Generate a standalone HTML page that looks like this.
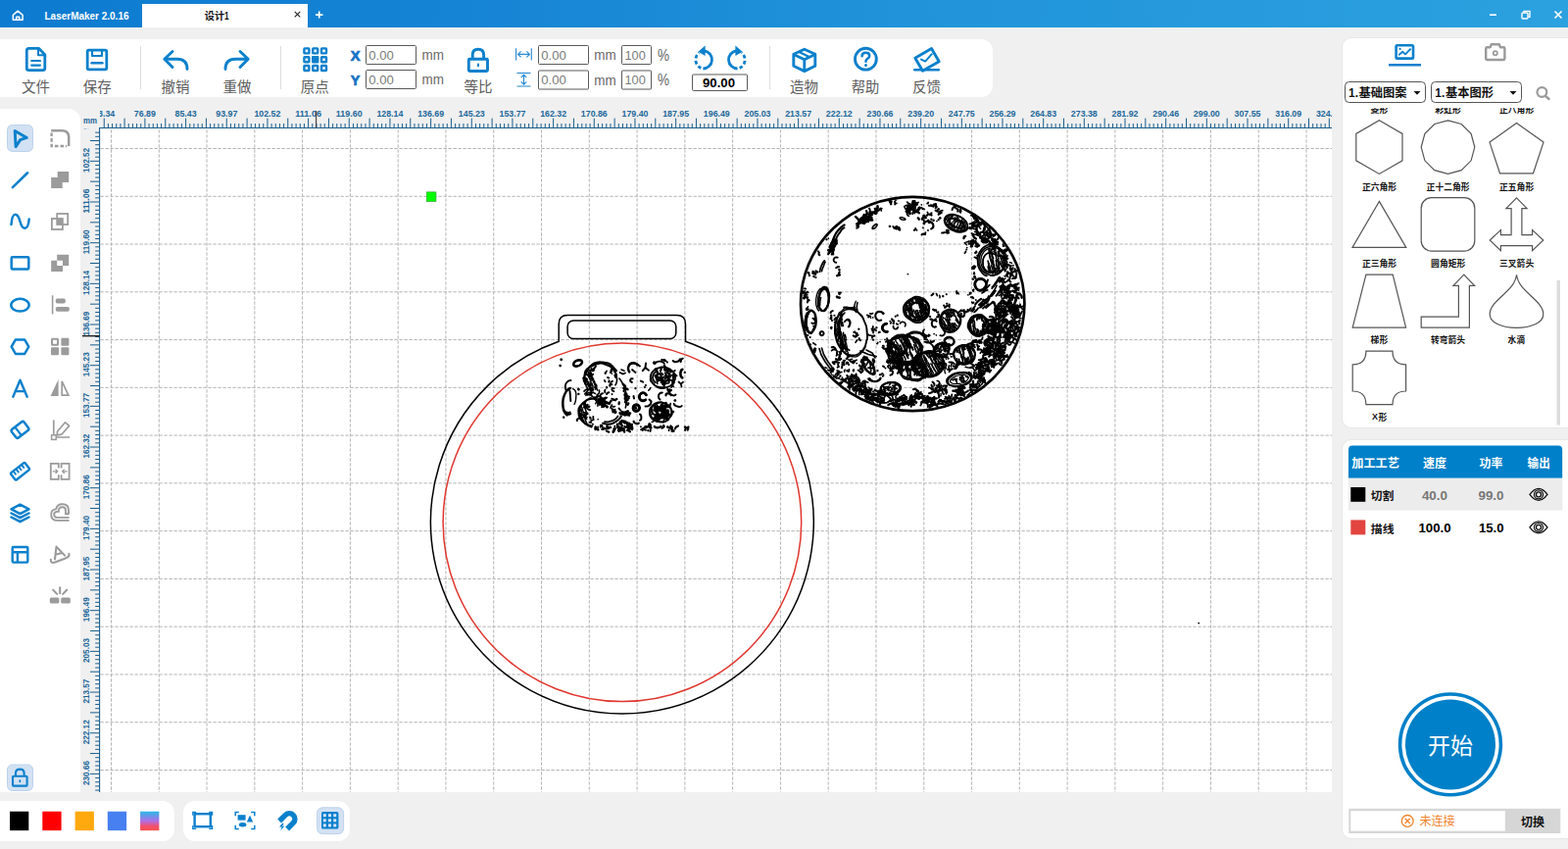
<!DOCTYPE html>
<html lang="zh"><head><meta charset="utf-8"><title>LaserMaker 2.0.16</title>
<style>
html,body{margin:0;padding:0}
body{width:1600px;height:866px;background:#f0f0f0;position:relative;overflow:hidden;font-family:"Liberation Sans","Noto Sans CJK SC",sans-serif}
body>div{position:absolute;box-sizing:border-box}
svg#ov{position:absolute;left:0;top:0}
svg text{font-family:"Liberation Sans","Noto Sans CJK SC",sans-serif}
</style></head><body>
<div style="left:0;top:0;width:1600px;height:28px;background:linear-gradient(90deg,#0c7bd0 0%,#1684d4 30%,#2194da 60%,#2ca1df 100%)"></div>
<div style="left:145px;top:4px;width:169px;height:24px;background:#fff"></div>
<div style="left:0;top:40px;width:1013px;height:59px;background:#fff;border-radius:0 12px 12px 0"></div>
<div style="left:0;top:111px;width:82px;height:697px;background:#fff;border-radius:0 12px 0 0"></div>
<div style="left:101px;top:130px;width:1258px;height:678px;background:#fff"></div>
<div style="left:0;top:817px;width:178px;height:41px;background:#fff;border-radius:0 12px 12px 0"></div>
<div style="left:187px;top:817px;width:170px;height:41px;background:#fff;border-radius:12px"></div>
<div style="left:1369px;top:38px;width:232px;height:399px;background:#fff;border-radius:10px 0 0 10px;border:1px solid #e7e7e7"></div>
<div style="left:1369px;top:448px;width:232px;height:408px;background:#fff;border-radius:10px 0 0 10px;border:1px solid #e7e7e7"></div>
<svg id="ov" width="1600" height="866" viewBox="0 0 1600 866">
<g fill="none" stroke="#fff" stroke-width="1.5" stroke-linejoin="round" stroke-linecap="round"><path d="M13.3 15.3 L18.2 11.2 L23.1 15.3 V20.2 H13.3 Z"/><path d="M16.7 20 V17.2 H19.7 V20"/></g>
<text x="45.5" y="20" font-size="10.2" fill="#fff" font-weight="bold" text-anchor="start"  textLength="86" lengthAdjust="spacingAndGlyphs">LaserMaker 2.0.16</text>
<text x="208.8" y="20.2" font-size="10.2" fill="#111" font-weight="bold" text-anchor="start" textLength="20.4" lengthAdjust="spacingAndGlyphs">设计</text>
<text x="229.0" y="20.2" font-size="10" fill="#111" font-weight="bold" text-anchor="start"  textLength="4.6" lengthAdjust="spacingAndGlyphs">1</text>
<path d="M300.7 11.8 L306.3 17.4 M306.3 11.8 L300.7 17.4" stroke="#222" stroke-width="1.1" fill="none"/>
<path d="M322 15.1 H329.4 M325.7 11.6 V18.6" stroke="#fff" stroke-width="1.7" fill="none"/>
<path d="M1520 15.2 H1527" stroke="#fff" stroke-width="1.6"/>
<g fill="none" stroke="#fff" stroke-width="1.4"><rect x="1553" y="13" width="6" height="6" rx="1"/><path d="M1555 12.8 V11.4 H1561 V17.4 H1559.4"/></g>
<path d="M1586.5 11.5 L1593.5 18.5 M1593.5 11.5 L1586.5 18.5" stroke="#fff" stroke-width="1.6" fill="none"/>
<path d="M143.5 47 V91" stroke="#dcdcdc" stroke-width="1"/>
<path d="M286.5 47 V91" stroke="#dcdcdc" stroke-width="1"/>
<path d="M785.5 47 V91" stroke="#dcdcdc" stroke-width="1"/>
<text x="36.5" y="94" font-size="14.5" fill="#5c5c5c" text-anchor="middle" textLength="29" lengthAdjust="spacingAndGlyphs">文件</text>
<text x="99.2" y="94" font-size="14.5" fill="#5c5c5c" text-anchor="middle" textLength="29" lengthAdjust="spacingAndGlyphs">保存</text>
<text x="178.9" y="94" font-size="14.5" fill="#5c5c5c" text-anchor="middle" textLength="29" lengthAdjust="spacingAndGlyphs">撤销</text>
<text x="242" y="94" font-size="14.5" fill="#5c5c5c" text-anchor="middle" textLength="29" lengthAdjust="spacingAndGlyphs">重做</text>
<text x="321.2" y="94" font-size="14.5" fill="#5c5c5c" text-anchor="middle" textLength="29" lengthAdjust="spacingAndGlyphs">原点</text>
<text x="488" y="94" font-size="14.5" fill="#5c5c5c" text-anchor="middle" textLength="29" lengthAdjust="spacingAndGlyphs">等比</text>
<text x="820.5" y="94" font-size="14.5" fill="#5c5c5c" text-anchor="middle" textLength="29" lengthAdjust="spacingAndGlyphs">造物</text>
<text x="883" y="94" font-size="14.5" fill="#5c5c5c" text-anchor="middle" textLength="28.5" lengthAdjust="spacingAndGlyphs">帮助</text>
<text x="945.6" y="94" font-size="14.5" fill="#5c5c5c" text-anchor="middle" textLength="29" lengthAdjust="spacingAndGlyphs">反馈</text>
<g fill="none" stroke="#0b80cc" stroke-width="2.8" stroke-linejoin="round" stroke-linecap="round"><path d="M27.3 51.5 Q27.3 49.3 29.5 49.3 H39.5 L45.8 55.8 V69.5 Q45.8 71.7 43.6 71.7 H29.5 Q27.3 71.7 27.3 69.5 Z"/><path d="M39 49.6 V56.3 H45.5" stroke-width="2"/><path d="M32.2 62 H41 M32.2 66.6 H41" stroke-width="2.2"/></g>
<g fill="none" stroke="#0b80cc" stroke-width="2.8" stroke-linejoin="round" stroke-linecap="round"><rect x="89.2" y="51.2" width="19.6" height="19.6" rx="1.5"/><path d="M94 51.5 V57 H104 V51.5" stroke-width="2.2"/><path d="M93.5 64.3 H104.5" stroke-width="2.4"/></g>
<g fill="none" stroke="#0b80cc" stroke-width="2.9" stroke-linejoin="round" stroke-linecap="round"><path d="M176 52.5 L167.8 60.3 L176 68.5"/><path d="M168.5 60.3 H181 Q191 60.3 191 70.5"/></g>
<g fill="none" stroke="#0b80cc" stroke-width="2.9" stroke-linejoin="round" stroke-linecap="round"><path d="M245 52.5 L253.2 60.3 L245 68.5"/><path d="M252.5 60.3 H240 Q230 60.3 230 70.5"/></g>
<rect x="310.4" y="49.4" width="5.0" height="5.0" rx="0.5" fill="none" stroke="#0b80cc" stroke-width="2.4"/><rect x="319.2" y="49.4" width="5.0" height="5.0" rx="0.5" fill="none" stroke="#0b80cc" stroke-width="2.4"/><rect x="328.0" y="49.4" width="5.0" height="5.0" rx="0.5" fill="none" stroke="#0b80cc" stroke-width="2.4"/><rect x="310.4" y="58.2" width="5.0" height="5.0" rx="0.5" fill="none" stroke="#0b80cc" stroke-width="2.4"/><rect x="318.0" y="57.0" width="7.4" height="7.4" rx="0.8" fill="#0b80cc"/><rect x="328.0" y="58.2" width="5.0" height="5.0" rx="0.5" fill="none" stroke="#0b80cc" stroke-width="2.4"/><rect x="310.4" y="67.0" width="5.0" height="5.0" rx="0.5" fill="none" stroke="#0b80cc" stroke-width="2.4"/><rect x="319.2" y="67.0" width="5.0" height="5.0" rx="0.5" fill="none" stroke="#0b80cc" stroke-width="2.4"/><rect x="328.0" y="67.0" width="5.0" height="5.0" rx="0.5" fill="none" stroke="#0b80cc" stroke-width="2.4"/>
<text x="357.8" y="61.7" font-size="14.3" fill="#1673c5" font-weight="bold" text-anchor="start" stroke="#1673c5" stroke-width="0.7" textLength="9.8" lengthAdjust="spacingAndGlyphs">X</text>
<text x="357.8" y="86.7" font-size="14.3" fill="#1673c5" font-weight="bold" text-anchor="start" stroke="#1673c5" stroke-width="0.7" textLength="9.6" lengthAdjust="spacingAndGlyphs">Y</text>
<rect x="373.5" y="46.5" width="51" height="19" rx="1" fill="#fff" stroke="#5a5a5a" stroke-width="1"/>
<text x="376.3" y="60.7" font-size="13" fill="#7a7a7a" font-weight="normal" text-anchor="start"  textLength="25.5" lengthAdjust="spacingAndGlyphs">0.00</text>
<rect x="373.5" y="71.5" width="51" height="19" rx="1" fill="#fff" stroke="#5a5a5a" stroke-width="1"/>
<text x="376.3" y="85.7" font-size="13" fill="#7a7a7a" font-weight="normal" text-anchor="start"  textLength="25.5" lengthAdjust="spacingAndGlyphs">0.00</text>
<text x="430.6" y="61" font-size="14" fill="#666" font-weight="normal" text-anchor="start"  textLength="22.4" lengthAdjust="spacingAndGlyphs">mm</text>
<text x="430.6" y="86" font-size="14" fill="#666" font-weight="normal" text-anchor="start"  textLength="22.4" lengthAdjust="spacingAndGlyphs">mm</text>
<g fill="none" stroke="#0b80cc" stroke-width="2.9" stroke-linejoin="round"><rect x="478.3" y="60.2" width="19.2" height="12.3" rx="1"/><path d="M482.2 60 V56 Q482.2 50.2 487.9 50.2 Q493.6 50.2 493.6 56 V60"/></g><rect x="486.9" y="64.6" width="2.1" height="3.6" rx="1" fill="#0b80cc"/>
<g fill="none" stroke="#2488d4" stroke-width="1.1"><path d="M526.6 49.2 V61.6 M542.3 49.2 V61.6 M528.6 55.4 H540.4 M531.6 52.4 L528.6 55.4 L531.6 58.4 M537.4 52.4 L540.4 55.4 L537.4 58.4"/><path d="M527.5 74.5 H541.5 M527.5 88 H541.5 M534.5 76.3 V86.2 M531.7 79.2 L534.5 76.3 L537.3 79.2 M531.7 83.3 L534.5 86.2 L537.3 83.3"/></g>
<rect x="549.5" y="46.5" width="51" height="19" rx="1" fill="#fff" stroke="#5a5a5a" stroke-width="1"/>
<text x="552.3" y="60.7" font-size="13" fill="#7a7a7a" font-weight="normal" text-anchor="start"  textLength="25.5" lengthAdjust="spacingAndGlyphs">0.00</text>
<rect x="549.5" y="72.0" width="51" height="19" rx="1" fill="#fff" stroke="#5a5a5a" stroke-width="1"/>
<text x="552.3" y="86.2" font-size="13" fill="#7a7a7a" font-weight="normal" text-anchor="start"  textLength="25.5" lengthAdjust="spacingAndGlyphs">0.00</text>
<text x="606.3" y="61" font-size="14" fill="#666" font-weight="normal" text-anchor="start"  textLength="22.4" lengthAdjust="spacingAndGlyphs">mm</text>
<text x="606.3" y="86.5" font-size="14" fill="#666" font-weight="normal" text-anchor="start"  textLength="22.4" lengthAdjust="spacingAndGlyphs">mm</text>
<rect x="634.5" y="46.5" width="30" height="19" rx="1" fill="#fff" stroke="#5a5a5a" stroke-width="1"/>
<text x="637.5" y="60.7" font-size="13" fill="#7a7a7a" font-weight="normal" text-anchor="start"  textLength="21.3" lengthAdjust="spacingAndGlyphs">100</text>
<rect x="634.5" y="72.0" width="30" height="19" rx="1" fill="#fff" stroke="#5a5a5a" stroke-width="1"/>
<text x="637.5" y="86.2" font-size="13" fill="#7a7a7a" font-weight="normal" text-anchor="start"  textLength="21.3" lengthAdjust="spacingAndGlyphs">100</text>
<text x="671" y="61.7" font-size="16.5" fill="#666" font-weight="normal" text-anchor="start"  textLength="12" lengthAdjust="spacingAndGlyphs">%</text>
<text x="671" y="87.2" font-size="16.5" fill="#666" font-weight="normal" text-anchor="start"  textLength="12" lengthAdjust="spacingAndGlyphs">%</text>
<path d="M718.7 51.9 A9.1 9.1 0 0 1 717.4 70.0" fill="none" stroke="#0b80cc" stroke-width="2.8"/><path d="M715.4 69.4 A9.1 9.1 0 0 1 713.4 53.8" fill="none" stroke="#0b80cc" stroke-width="2.8" stroke-dasharray="3.6 2.4"/><path d="M712.4 52.7 L719.6 46.5 L719.6 57.1 Z" fill="#0b80cc"/>
<path d="M751.3 51.9 A9.1 9.1 0 0 0 752.6 70.0" fill="none" stroke="#0b80cc" stroke-width="2.8"/><path d="M754.6 69.4 A9.1 9.1 0 0 0 756.6 53.8" fill="none" stroke="#0b80cc" stroke-width="2.8" stroke-dasharray="3.6 2.4"/><path d="M757.6 52.7 L750.4 46.5 L750.4 57.1 Z" fill="#0b80cc"/>
<rect x="706.5" y="76.0" width="56" height="16.5" rx="1" fill="#fff" stroke="#5a5a5a" stroke-width="1"/>
<text x="717" y="88.95" font-size="12.5" fill="#000" font-weight="bold" text-anchor="start"  textLength="33" lengthAdjust="spacingAndGlyphs">90.00</text>
<g fill="none" stroke="#0b80cc" stroke-width="2.9" stroke-linejoin="round"><path d="M820.8 50.2 L831.8 55.3 V67.2 L820.8 72.6 L809.8 67.2 V55.3 Z"/><path d="M809.8 55.5 L820.8 60.8 L831.8 55.5 M820.8 60.8 V72.4"/><path d="M815.3 52.9 L826.3 58.2" stroke-width="2.2"/></g>
<circle cx="883.4" cy="60.2" r="10.9" fill="none" stroke="#0b80cc" stroke-width="2.9"/><path d="M879.6 57.2 Q879.6 53.8 883.4 53.8 Q887.2 53.8 887.2 56.9 Q887.2 58.8 885.2 59.9 Q883.5 60.9 883.5 62.8" fill="none" stroke="#0b80cc" stroke-width="2.6" stroke-linecap="round"/><circle cx="883.5" cy="66.6" r="1.5" fill="#0b80cc"/>
<g fill="none" stroke="#0b80cc" stroke-width="2.9" stroke-linejoin="round" stroke-linecap="round"><path d="M933.8 59.2 L950.5 49.5 L958.2 62.8 L941.5 72.3 Z"/><path d="M940 60.6 L944.2 62.6 L950.8 55.2" stroke-width="2"/><path d="M933.3 71.3 H957.8" stroke-width="2.6"/></g>
<rect x="7.5" y="127.5" width="26" height="27" rx="5" fill="#d2e1f3" stroke="#bdd3ec" stroke-width="1"/>
<g transform="translate(20.5 141.0)"><path d="M-5.3 -7.6 L6.8 -0.6 L0.2 1.6 L-4.4 8.6 Z" fill="none" stroke="#0b80cc" stroke-width="2.9" stroke-linejoin="round"/></g>
<g transform="translate(61.2 141.0)"><path d="M-9 -7.8 H2 Q9 -7.8 9 -0.8 V8" fill="none" stroke="#9b9b9b" stroke-width="2.5"/><path d="M-8.6 -5.5 V8 H7" fill="none" stroke="#9b9b9b" stroke-width="2.3" stroke-dasharray="3.6 2"/></g>
<g transform="translate(20.5 183.5)"><path d="M-7.6 7.6 L7.6 -7.2" stroke="#0b80cc" stroke-width="2.6" stroke-linecap="round"/></g>
<g transform="translate(61.2 183.5)"><path d="M-2.5 -8.5 H9 V2.5 H2.5 V8.5 H-9 V-2.5 H-2.5 Z" fill="#9b9b9b"/></g>
<g transform="translate(20.5 226.0)"><path d="M-9 3 C-8 -11 -2.5 -9 0 0 C2.5 9 8 10 9.2 -2.5" fill="none" stroke="#0b80cc" stroke-width="2.5" stroke-linecap="round"/></g>
<g transform="translate(61.2 226.0)"><rect x="-3" y="-8" width="11" height="11" fill="none" stroke="#9b9b9b" stroke-width="1.8"/><rect x="-8.3" y="-3" width="11" height="11" fill="none" stroke="#9b9b9b" stroke-width="1.8"/><rect x="-3" y="-3" width="5.7" height="6" fill="#9b9b9b"/></g>
<g transform="translate(20.5 268.4)"><rect x="-8.8" y="-6.2" width="17.6" height="12.4" rx="1" fill="none" stroke="#0b80cc" stroke-width="2.5"/></g>
<g transform="translate(61.2 268.4)"><path d="M-3 -8.6 H9 V2.6 H2.8 V8.6 H-9 V-2.6 H-3 Z M-3 -2.6 V2.6 H2.8 V-2.6 Z" fill="#9b9b9b" fill-rule="evenodd"/></g>
<g transform="translate(20.5 310.9)"><ellipse cx="0" cy="0.3" rx="9.2" ry="6.4" fill="none" stroke="#0b80cc" stroke-width="2.5"/></g>
<g transform="translate(61.2 310.9)"><path d="M-7.6 -9.6 V9.6" stroke="#9b9b9b" stroke-width="1.6"/><rect x="-4.4" y="-6.3" width="10" height="4.8" rx="1.6" fill="#9b9b9b"/><rect x="-4.4" y="2" width="14" height="4.8" rx="1.6" fill="#9b9b9b"/></g>
<g transform="translate(20.5 353.4)"><path d="M-8.8 0.3 L-4.6 -7 H4.6 L8.8 0.3 L4.6 7.6 H-4.6 Z" fill="none" stroke="#0b80cc" stroke-width="2.5" stroke-linejoin="round"/></g>
<g transform="translate(61.2 353.4)"><rect x="-8.2" y="-7.6" width="6" height="6" rx="0.5" fill="none" stroke="#9b9b9b" stroke-width="2"/><rect x="1.2" y="-8.6" width="8" height="8" rx="1" fill="#9b9b9b"/><rect x="-9.2" y="0.8" width="8" height="8" rx="1" fill="#9b9b9b"/><rect x="1.2" y="0.8" width="8" height="8" rx="1" fill="#9b9b9b"/></g>
<g transform="translate(20.5 395.9)"><path d="M-7.2 8.8 L0 -8.2 L7.2 8.8 M-4.6 3.2 H4.6" fill="none" stroke="#0b80cc" stroke-width="2.4" stroke-linecap="round" stroke-linejoin="round"/></g>
<g transform="translate(61.2 395.9)"><path d="M-1.6 -9 V8 H-9.6 Z" fill="#9b9b9b"/><path d="M2 -7 V7.2 H8.6 Z" fill="none" stroke="#9b9b9b" stroke-width="1.7"/></g>
<g transform="translate(20.5 438.4)"><g transform="rotate(-38)"><rect x="-8" y="-5.4" width="16" height="10.8" rx="2" fill="none" stroke="#0b80cc" stroke-width="2.5"/><path d="M-2.4 -5.4 V5.4" stroke="#0b80cc" stroke-width="2.3"/></g></g>
<g transform="translate(61.2 438.4)"><path d="M-6.4 -10 V5 M-6.4 7.6 H10" stroke="#9b9b9b" stroke-width="1.7" fill="none"/><rect x="-8.6" y="5.4" width="4.6" height="4.6" fill="#fff" stroke="#9b9b9b" stroke-width="1.5"/><path d="M-2.6 1.6 L5.4 -7.6 L9.4 -4 L1.6 4.8 L-3 5.4 Z" fill="none" stroke="#9b9b9b" stroke-width="1.7" stroke-linejoin="round"/></g>
<g transform="translate(20.5 480.8)"><g transform="rotate(-38)"><rect x="-9.2" y="-4.5" width="18.4" height="9" rx="1.2" fill="none" stroke="#0b80cc" stroke-width="2.4"/><path d="M-5.3 -4.4 V0.2 M-1.8 -4.4 V0.2 M1.8 -4.4 V0.2 M5.3 -4.4 V0.2" stroke="#0b80cc" stroke-width="1.9"/></g></g>
<g transform="translate(61.2 480.8)"><path d="M-1.4 -8 H-9.4 V8 H-1.4 M1.4 -8 H9.4 V8 H1.4" fill="none" stroke="#9b9b9b" stroke-width="1.8"/><path d="M-1.4 -8.9 V-3.4 M-1.4 3.4 V8.9 M1.4 -8.9 V-3.4 M1.4 3.4 V8.9" stroke="#9b9b9b" stroke-width="1.8"/><path d="M-7.4 0 H-2.4 M-4.6 -2.2 L-2.4 0 L-4.6 2.2 M7.4 0 H2.4 M4.6 -2.2 L2.4 0 L4.6 2.2" fill="none" stroke="#9b9b9b" stroke-width="1.3"/></g>
<g transform="translate(20.5 523.3)"><path d="M0 -8.6 L9 -3.9 L0 0.8 L-9 -3.9 Z" fill="none" stroke="#0b80cc" stroke-width="2.5" stroke-linejoin="round"/><path d="M-9 0.2 L0 4.9 L9 0.2 M-9 4.2 L0 8.9 L9 4.2" fill="none" stroke="#0b80cc" stroke-width="2.5" stroke-linejoin="round" stroke-linecap="round"/></g>
<g transform="translate(61.2 523.3)"><path d="M9.4 7.6 H-2.6 Q-9 7.6 -9 1.4 Q-9 -3.6 -4 -3.9 Q-3 -9 2.4 -9 Q8.8 -9 8.8 -2.8 V1" fill="none" stroke="#9b9b9b" stroke-width="1.9"/><path d="M9.4 4.6 H-2.4 Q-6 4.6 -6 1.4 Q-6 -1.4 -2.6 -1.4 H-1.4 Q-1.6 -6 2.4 -6 Q5.8 -6 5.8 -2.6 V1 H9.4" fill="none" stroke="#9b9b9b" stroke-width="1.9"/></g>
<g transform="translate(20.5 565.8)"><rect x="-7.8" y="-7.8" width="15.6" height="15.6" rx="1" fill="none" stroke="#0b80cc" stroke-width="2.4"/><path d="M-7.8 -2.6 H7.8 M-2.6 -2.6 V7.8" stroke="#0b80cc" stroke-width="2.4"/></g>
<g transform="translate(61.2 565.8)"><g transform="rotate(-14)"><path d="M-6.2 3.2 L-1.6 -8.8 L4.6 2 M-4.6 -1.2 H2.6" fill="none" stroke="#9b9b9b" stroke-width="2.1" stroke-linejoin="round" stroke-linecap="round"/></g><path d="M-9.4 5 Q-9.6 9.4 -5 7.8 L5.6 3.6 Q10.2 2 9.2 -1" fill="none" stroke="#9b9b9b" stroke-width="2.1" stroke-linecap="round"/></g>
<g transform="translate(61.2 608.3)"><rect x="-10.4" y="1.2" width="9.6" height="6" rx="1.6" fill="#9b9b9b"/><rect x="1" y="1.2" width="9.6" height="6" rx="1.6" fill="#9b9b9b"/><path d="M0 -9 V-3 M-7 -6.6 L-3 -2.4 M7 -6.6 L3 -2.4" stroke="#9b9b9b" stroke-width="2.1" stroke-linecap="round"/></g>
<rect x="7.5" y="780" width="26" height="26.5" rx="5" fill="#d2e1f3" stroke="#bdd3ec" stroke-width="1"/>
<g fill="none" stroke="#0b80cc" stroke-width="2.1" stroke-linejoin="round"><rect x="13" y="791.8" width="14.6" height="9.8" rx="0.8"/><path d="M16 791.6 V788.6 Q16 784.6 20.3 784.6 Q24.6 784.6 24.6 788.6 V791.6"/></g><rect x="19.5" y="795.2" width="1.7" height="3" rx="0.8" fill="#0b80cc"/>
<path d="M113.50 131 V808 M162.28 131 V808 M211.06 131 V808 M259.84 131 V808 M308.62 131 V808 M357.40 131 V808 M406.18 131 V808 M454.96 131 V808 M503.74 131 V808 M552.52 131 V808 M601.30 131 V808 M650.08 131 V808 M698.86 131 V808 M747.64 131 V808 M796.42 131 V808 M845.20 131 V808 M893.98 131 V808 M942.76 131 V808 M991.54 131 V808 M1040.32 131 V808 M1089.10 131 V808 M1137.88 131 V808 M1186.66 131 V808 M1235.44 131 V808 M1284.22 131 V808 M1333.00 131 V808" stroke="#b4b4b4" stroke-width="1" stroke-dasharray="3.4 1.6" stroke-dashoffset="-1.3" fill="none"/>
<path d="M102 151.50 H1359 M102 200.27 H1359 M102 249.04 H1359 M102 297.81 H1359 M102 346.58 H1359 M102 395.35 H1359 M102 444.12 H1359 M102 492.89 H1359 M102 541.66 H1359 M102 590.43 H1359 M102 639.20 H1359 M102 687.97 H1359 M102 736.74 H1359 M102 785.51 H1359" stroke="#b4b4b4" stroke-width="1" stroke-dasharray="3.4 1.6" stroke-dashoffset="-0.4" fill="none"/>
<rect x="435.3" y="195.9" width="9.6" height="9.6" fill="#0f0" stroke="#3bb03b" stroke-width="0.8"/>
<circle cx="1223.2" cy="635.6" r="0.9" fill="#000"/>
<path d="M570.2 348.2 V330.6 Q570.2 321.6 579.2 321.6 H690.5 Q699.5 321.6 699.5 330.6 V348.2 A195.4 195.4 0 1 1 570.2 348.2 Z" fill="none" stroke="#000" stroke-width="1.5"/>
<rect x="579.1" y="327" width="110.7" height="18.6" rx="6" fill="none" stroke="#000" stroke-width="1.5"/>
<circle cx="634.9" cy="532.8" r="182.8" fill="none" stroke="#e0362e" stroke-width="1.5"/>
<g fill="none" stroke="#000" stroke-linecap="round" stroke-linejoin="round"><path d="M986.1 230.6L985.3 231.4L984.9 232.8L984.2 234.5M985.6 228.5L985.0 230.1L984.5 231.2L984.3 232.5M985.0 226.3L984.6 227.6L983.8 228.4L983.2 230.0L982.8 230.9M981.1 231.8L980.5 233.1L980.1 234.3M975.2 226.7L974.0 227.7L974.0 229.3L973.3 230.2L972.6 231.4M976.6 221.1L975.9 222.3M972.3 226.0L971.7 227.4L971.2 228.9L970.6 230.0L969.9 231.3M966.8 225.2L966.5 226.7M1020.8 266.7L1021.0 268.3L1021.7 270.0L1022.0 271.3L1022.5 272.8M1019.0 264.6L1019.2 265.8L1019.2 266.7L1020.0 268.4L1020.3 269.5L1020.1 270.4M1014.5 253.5L1014.9 254.8L1015.4 255.8M1015.4 276.3L1014.1 277.1L1012.7 277.7L1011.4 278.3L1010.3 278.7L1009.3 278.8L1008.3 278.5L1007.2 277.7L1005.9 276.7L1004.7 275.3L1003.8 273.8L1003.3 272.3L1003.2 270.9L1003.1 269.5L1003.1 268.0L1003.0 266.4L1003.1 264.7L1003.5 263.0L1004.4 261.4L1005.5 260.0L1006.8 259.0L1007.9 258.4L1008.8 258.1L1009.8 258.1L1010.9 258.2L1012.2 258.5L1013.7 258.9M988.3 385.0L988.2 385.7L987.8 386.5L987.1 387.4L986.3 388.4L985.4 389.2L984.2 390.0L982.8 390.6L981.1 391.0L979.3 391.3L977.6 391.4L976.1 391.5L974.7 391.5L973.4 391.5L972.2 391.2L971.1 390.8L970.3 390.2L969.7 389.4L969.6 388.5L969.9 387.7L970.5 386.8L971.2 386.1L972.0 385.4L973.1 384.7L974.4 384.1L975.9 383.5L977.7 383.0L979.5 382.5L981.1 382.3L982.6 382.3L983.9 382.4L985.1 382.8L986.3 383.3L987.3 383.9L988.0 384.5L988.3 385.1ZM859.0 324.4L859.2 325.3L859.5 326.5M862.8 347.2L863.1 348.6L863.6 350.1L863.9 351.7L864.2 353.0L864.3 354.7L864.6 356.2M857.6 323.1L857.7 324.4L857.8 325.4L858.3 326.9M856.4 330.1L856.6 331.3L856.5 333.1L856.9 334.0L857.5 335.7L857.2 336.9M859.2 384.5L859.2 385.5L859.8 386.5M858.0 391.3L856.3 390.4M850.8 382.9L849.2 382.7L848.3 381.3" stroke-width="1.2"/><path d="M835.5 317.0L834.8 316.2L834.2 315.2L833.7 313.9L833.2 312.6L832.9 311.1L832.7 309.5L832.6 307.8L832.7 306.2L832.8 304.5L833.1 302.8L833.4 301.1L833.9 299.6L834.5 298.2L835.1 296.9L835.9 295.8L836.7 294.9L837.5 294.2M923.9 223.8L923.3 224.2L921.9 224.3L920.3 224.0L918.9 223.3L918.2 222.6L918.3 221.9L919.3 221.7L920.8 221.8L922.5 222.4L923.6 223.1L924.0 223.8ZM983.5 233.8L982.8 235.0M983.9 225.8L983.1 227.2L982.4 228.5L982.0 230.0L981.3 231.1M982.2 225.4L981.4 226.7M981.2 227.1L980.6 228.7L980.0 230.1L979.6 231.1M978.8 232.6L978.1 233.7M980.5 226.3L979.8 227.7L979.7 229.3L978.6 230.2L978.2 231.9L977.7 233.2L976.8 234.5M979.1 224.2L978.5 225.6L977.9 226.9L977.5 228.0L977.0 229.3L976.3 230.7L975.5 231.7M974.3 232.0L973.3 232.9M975.9 223.2L974.9 224.2L975.0 225.1L974.3 226.8L973.6 227.7M973.3 228.2L972.9 229.1L972.0 230.4L971.5 232.0M974.4 221.9L973.7 223.1L973.6 224.4L973.1 225.3M966.5 221.6L965.4 223.2L965.2 224.5M1008.2 234.4L1007.1 235.5L1005.9 236.5M1006.9 240.3L1007.6 238.8L1007.6 237.0L1006.9 235.5M1010.7 236.6L1011.4 237.9L1011.3 239.4L1010.3 240.5L1008.9 241.0M1013.5 244.6L1014.3 245.8L1015.5 246.8L1016.8 247.4M1020.2 256.2L1021.4 254.9L1023.1 255.1M1014.4 252.9L1014.8 254.2L1014.6 255.6L1013.8 256.8M1025.0 263.6L1026.4 263.2L1027.6 262.2L1028.2 260.8M1026.6 263.6L1026.9 262.1L1026.9 260.7L1026.5 259.3M1028.4 270.7L1029.9 271.0L1031.4 271.1L1032.9 270.9L1034.3 270.7M1027.4 268.9L1027.8 267.2L1026.9 265.7M1027.6 281.7L1026.2 281.8L1024.8 281.6M1032.5 268.6L1031.6 267.7L1030.4 267.8M1031.1 273.6L1031.0 272.2L1030.4 271.0L1029.4 270.0L1028.1 269.4M1027.7 273.1L1027.3 271.5L1026.9 270.0L1026.4 268.5M1025.1 263.7L1025.4 262.5L1026.5 262.0M1025.1 269.6L1023.9 270.9L1022.1 271.5M1034.3 283.8L1035.9 284.3L1037.2 283.3M1006.5 277.6L1005.4 276.8L1004.3 275.7L1003.4 274.5L1002.6 273.2L1001.9 271.8L1001.3 270.3L1001.0 268.7L1000.8 267.1L1000.8 265.5L1001.0 263.9L1001.3 262.3L1001.7 260.7L1002.4 259.3L1003.2 258.0L1004.1 256.7L1005.1 255.7L1006.3 254.8L1007.5 254.1L1008.8 253.6L1010.1 253.2M1019.0 255.0L1019.5 256.8L1019.8 258.0L1019.8 259.3L1020.5 260.7L1020.5 261.7M1020.9 262.9L1021.3 263.7L1021.8 265.5L1022.1 266.9M1018.1 256.8L1018.3 258.0L1018.8 259.3L1019.0 260.5L1019.2 261.4M1015.5 253.3L1015.9 254.7L1015.9 256.0M1014.8 257.3L1015.5 258.6L1015.5 259.6L1016.3 261.4L1016.6 262.5L1016.5 263.7L1017.4 264.9M1011.1 253.8L1011.7 255.5L1011.8 256.5L1012.2 257.8M1012.3 258.7L1012.6 259.6L1012.8 261.4L1013.3 262.6L1013.7 263.6M1014.5 271.5L1015.0 273.3L1015.7 274.3L1015.8 275.8L1016.1 277.0L1016.7 278.3M1013.7 271.6L1013.6 273.0L1014.1 274.1L1014.8 275.5L1015.0 276.8L1015.3 278.7M1010.1 262.9L1010.8 264.0L1010.9 265.6L1011.3 267.1L1011.7 268.1L1012.2 269.6M1009.3 268.7L1009.5 270.2L1009.7 271.7L1010.3 272.6L1010.6 274.3L1010.9 275.5L1011.1 276.6M1023.4 299.4L1024.5 298.1L1025.6 296.8L1026.7 295.5M1025.0 288.2L1024.1 286.7L1024.5 284.9L1026.0 283.9M939.4 305.3L940.0 306.5L940.6 308.0L941.5 309.5L941.6 311.0M936.6 304.9L937.2 306.1L937.5 307.1L937.9 307.9M940.7 314.8L940.9 316.1L941.5 317.5L941.9 319.3L942.4 320.3L942.6 321.5M933.9 304.6L934.1 305.7L934.7 306.9L934.8 308.1L935.6 309.7M936.4 317.7L937.0 318.5L937.7 319.7L937.7 321.2L938.6 322.4M931.2 305.5L931.6 306.9L932.2 308.0L932.3 308.9M934.4 316.8L934.8 318.2L935.4 319.9L935.5 320.8M935.8 321.4L936.6 322.8L937.4 324.4L937.4 325.8L938.1 326.9M929.9 310.4L930.6 311.8M935.4 323.2L936.1 324.4L936.4 325.1L936.4 326.4M927.9 307.8L928.3 309.2L928.9 310.4L929.3 311.7M927.9 311.2L928.4 312.2L928.9 313.4L929.5 314.6M926.5 311.8L926.9 313.0L927.5 314.0L927.6 315.1L928.5 316.3M926.5 315.2L926.5 316.8L927.1 318.0L927.8 319.1M924.7 313.8L925.2 315.4L925.8 316.7M970.6 317.5L971.2 318.7L972.2 319.5L972.8 321.1L973.2 322.2M968.9 317.4L969.6 318.7L970.8 320.0M966.5 318.3L966.8 319.6L967.7 320.3L967.9 321.4M973.1 330.2L973.5 331.8L974.4 333.1L975.0 333.8L975.5 335.0M968.2 326.4L968.5 328.0L969.1 328.8L970.1 330.4L970.9 331.0L971.0 332.0M964.1 324.5L964.8 326.0L965.4 327.1L966.1 327.8L966.6 328.8M1004.7 325.8L1005.4 327.1L1005.3 328.6M1005.6 330.0L1005.5 331.2L1005.7 332.9L1006.3 334.1M1002.4 324.4L1002.8 325.4L1002.9 326.8M1004.6 335.3L1005.0 336.7L1005.4 337.8L1005.2 339.5M999.7 323.5L1000.1 324.8M999.0 323.4L999.3 325.3M1000.0 337.8L1000.5 338.8L1001.0 340.5M993.4 324.5L993.5 325.8L993.9 327.1M995.7 335.8L996.1 337.3L996.3 339.0L996.4 340.4L996.6 341.7M992.2 326.3L992.7 327.6L992.8 328.7L992.9 330.1L993.2 331.0M993.9 339.2L993.8 340.3M990.3 329.2L990.5 330.3M990.5 331.7L990.6 332.7L990.6 334.1L990.7 335.7M991.4 336.6L991.4 337.6M990.1 354.5L990.7 356.0M992.4 362.6L992.9 364.4L993.0 365.3M987.9 364.2L988.6 365.5L988.9 366.7L989.3 367.8L989.7 369.1M984.4 353.8L984.3 354.9L985.1 356.2M986.6 365.4L986.5 366.6M977.4 356.9L978.0 358.0L977.8 358.7L978.6 360.0M976.6 365.7L977.1 366.9M956.9 395.4L955.5 395.9L954.5 397.1M955.6 393.1L956.6 394.2L958.1 394.5M955.3 398.3L955.5 397.2L956.1 396.2M951.9 396.3L950.7 396.1L949.6 396.2M960.0 401.4L960.2 402.7L959.8 404.0M958.6 393.8L957.9 394.9L956.7 394.9M954.3 400.3L955.5 399.2L957.0 399.1L958.4 399.9M964.3 375.7L963.9 377.4L964.1 379.2L964.6 380.8M935.7 410.1L934.7 410.2L934.3 411.1M943.0 403.7L942.7 404.8L942.0 405.7M934.2 406.1L933.6 404.7L933.4 403.3L933.7 401.8L934.3 400.4M949.0 409.4L950.6 409.3L951.2 407.7M942.9 405.3L943.0 404.2L944.0 403.6M939.6 355.4L940.5 356.9L940.9 358.3M933.1 364.5L933.9 365.7L934.3 367.2M921.8 343.6L922.5 344.9M919.6 345.8L920.0 347.2L920.3 348.1L921.2 349.6M917.3 344.2L917.8 345.8L918.0 346.6L918.9 347.9L919.3 348.9M920.0 349.5L920.6 350.9L920.9 351.8L921.3 352.8L922.3 354.3L922.5 355.5M922.9 356.6L923.5 358.3L924.2 359.4L924.9 360.4M914.2 363.2L915.0 364.7L915.6 366.2L916.4 367.2M908.0 353.3L908.8 354.5L909.6 355.8L909.8 356.9L910.4 358.5L911.2 359.3M909.1 360.0L909.4 361.2L910.2 362.6L910.4 363.6L911.4 365.1L911.9 366.3M957.0 370.4L957.6 371.8L958.3 372.9L958.6 374.5L959.4 375.7M948.5 373.2L949.1 374.9L950.0 375.7L950.5 377.1L951.2 378.3L951.9 379.6L952.5 381.0M945.8 371.8L946.8 372.5L947.2 373.3L947.5 374.6M945.8 375.7L946.4 376.3L947.2 377.7L947.8 378.8L948.2 380.2L949.2 381.1L949.9 382.2M934.4 368.2L934.7 369.6L935.6 370.6M945.8 379.4L945.8 380.5L945.6 381.5L945.2 382.4L944.4 383.2L943.3 383.8L942.1 384.5L940.9 385.1L939.7 385.7L938.4 386.2L936.9 386.6L935.2 386.8L933.4 386.8L931.5 386.5L929.8 386.2L928.2 385.8L926.7 385.4L925.2 384.9L923.6 384.4L922.0 383.7L920.6 382.9L919.5 381.9L918.6 380.8L917.9 379.7L917.3 378.6L916.8 377.5L916.4 376.6L916.2 375.6L916.4 374.7L916.8 373.7L917.5 372.7L918.3 371.7L919.2 370.8L920.1 370.0L921.2 369.5L922.5 369.0L924.1 368.8L925.8 368.6L927.5 368.5L929.1 368.4L930.7 368.3L932.3 368.4L934.0 368.7L935.8 369.2L937.5 369.9L939.1 370.7L940.5 371.5L941.6 372.4L942.6 373.2L943.6 374.1L944.6 375.0L945.3 376.0L945.9 377.1L946.1 378.2L946.0 379.4M931.3 375.2L931.8 373.7L931.8 372.2L931.1 370.8M940.9 379.9L942.0 381.2L942.9 382.7L943.6 384.2L944.2 385.8M910.9 371.1L909.5 370.4L908.1 369.8L906.7 369.3L905.2 368.9M912.8 366.0L914.3 365.6L915.9 365.8L917.3 366.5M824.5 335.2L823.9 334.2L823.5 333.0L823.2 331.6L823.1 330.1L823.1 328.5L823.2 326.8L823.4 325.1L823.7 323.5L824.1 322.0L824.6 320.8L825.3 320.0M836.8 311.6L836.8 309.8L836.9 308.0L837.1 306.3L837.4 304.7L837.7 303.4M884.1 333.4L884.3 334.8L884.3 336.4L884.4 338.1L884.5 339.9L884.8 341.7L885.0 343.4L885.0 344.9L884.7 346.4L884.2 347.7L883.8 349.0L883.6 350.4L883.4 351.9L883.1 353.4L882.7 354.9L881.9 356.2L881.1 357.4L880.2 358.3L879.6 359.1L879.0 359.9L878.4 360.6L877.6 361.5L876.5 362.3L875.4 363.0L874.3 363.6L873.4 363.9L872.6 364.0L871.8 363.9L870.8 363.8L869.6 363.7L868.3 363.6L867.1 363.5L866.1 363.3L865.3 363.0L864.5 362.4L863.6 361.6L862.4 360.6L861.2 359.6L860.2 358.7L859.4 357.7L858.7 356.8L858.1 355.8L857.4 354.7L856.5 353.4L855.6 351.8L854.8 350.2L854.4 348.6L854.1 347.1L853.8 345.7L853.5 344.3L853.0 342.9L852.5 341.4L852.2 339.7L852.1 337.9L852.3 336.1L852.5 334.4L852.6 332.8L852.5 331.3L852.5 330.0L852.7 328.6L853.1 327.3L853.7 325.8L854.3 324.4L854.9 322.9L855.3 321.5L855.7 320.3L856.2 319.3L857.0 318.5L858.1 317.8L859.1 317.0L859.9 316.3L860.6 315.5L861.3 314.7L862.2 314.1L863.3 313.7L864.5 313.6L865.7 313.6L866.7 313.8L867.6 313.9L868.4 314.0L869.3 314.1L870.5 314.3L871.7 314.6L872.9 315.2L873.9 315.9L874.7 316.9L875.4 317.9L876.3 318.9L877.3 319.9L878.3 320.8L879.3 321.8L880.1 322.9L880.7 324.2L881.1 325.6L881.6 327.2L882.3 328.8L883.0 330.4L883.7 331.9L884.1 333.3M864.8 356.9L864.5 358.1L865.1 359.3L865.4 360.3L865.3 361.3M862.4 354.8L862.7 356.1L863.0 357.7L863.1 358.6M859.3 342.7L859.4 344.2L859.8 345.3L859.9 346.7L860.1 348.0L860.3 349.4M854.5 331.4L854.7 332.9L855.2 333.6L855.0 334.9L855.3 336.0M853.8 335.2L853.8 336.9L854.2 337.8L854.5 339.4M854.8 340.6L854.6 341.9L855.1 343.3L855.6 344.5L855.5 346.2L855.5 347.4L856.2 348.6M855.9 350.2L856.0 351.0L856.2 352.6M852.2 333.5L852.2 335.2L852.1 336.1L852.6 337.7L852.9 339.6L853.4 340.6L853.7 342.6M873.5 318.4L872.7 317.4L872.0 316.1L871.6 314.6L871.6 313.0L871.9 311.4L872.3 309.9L872.8 308.5L873.4 307.3M888.3 376.0L890.2 375.5L892.0 374.8M887.5 370.6L886.5 369.2L885.2 368.1M848.0 378.3L849.1 377.1L850.4 376.1M858.4 389.9L856.7 390.6M843.8 375.4L842.8 375.2L842.0 374.5M847.2 379.3L848.4 378.8L849.5 378.2M848.7 377.0L849.3 377.4L850.1 377.2M853.1 381.5L854.3 381.9L855.4 381.4M852.0 385.3L853.1 384.2M847.6 379.9L848.4 379.3L849.4 379.2M853.6 383.9L854.8 382.7L856.3 382.0M856.3 384.4L857.5 384.0L857.9 382.8M850.6 375.2L848.9 376.0L847.0 375.6M869.0 388.6L870.1 388.9L871.1 388.6M875.6 394.4L874.5 394.0L873.9 392.9M877.6 397.7L876.6 397.0L875.6 397.6M882.6 391.8L882.1 390.9L882.2 389.9M862.0 387.7L863.4 387.0L864.3 385.8L864.6 384.3M879.2 398.5L879.8 399.8L881.2 400.2L882.5 399.5M875.1 389.1L874.8 387.9L873.6 387.7M890.3 399.6L891.7 398.8L893.4 398.7M896.2 399.8L897.2 401.2L898.7 402.0L900.4 402.0M895.6 408.4L896.9 407.4L898.4 406.8L900.1 406.7M888.6 406.5L888.9 408.2L889.9 409.6L891.5 410.3M886.2 399.2L885.8 398.2L885.2 397.3M893.5 402.0L892.6 403.3L891.2 403.9L889.7 403.6M887.1 406.8L886.0 405.9L884.8 405.1L883.5 404.6L882.1 404.4M903.9 398.5L902.1 397.4L901.8 395.4M901.5 394.6L903.6 394.8L905.6 394.4M911.6 399.3L909.5 399.7L907.7 400.7M908.2 408.2L907.8 408.9L907.1 409.5L906.1 410.1L905.0 410.5L903.8 410.8L902.4 411.0L900.9 411.0L899.3 410.8L897.7 410.5L896.2 410.1L894.9 409.6L893.7 409.0L892.7 408.4L891.9 407.6L891.3 406.9L891.0 406.1L891.0 405.3L891.3 404.5L891.8 403.8L892.6 403.2L893.6 402.8L894.7 402.4L896.0 402.2L897.5 402.1L899.0 402.1L900.6 402.3L902.2 402.6L903.6 403.0L904.9 403.5L906.0 404.2L906.9 404.9L907.7 405.7L908.2 406.5L908.4 407.3M917.1 414.5L918.4 413.2L918.4 411.5M910.2 409.0L908.7 409.3L907.2 408.9M924.0 407.7L922.8 408.7L922.6 410.3M925.2 408.1L925.6 406.5L924.6 405.3M922.6 412.1L921.1 412.6L919.6 413.0M928.4 412.2L927.5 410.4L926.5 408.6" stroke-width="1.4"/><path d="M838.5 276.8L838.8 275.4L839.2 274.1L839.7 272.9L840.3 271.6L840.7 270.4L841.1 269.2L841.6 268.1L842.1 267.3M836.2 313.4L835.8 312.2L835.5 310.8L835.4 309.3L835.5 307.6L835.6 305.9L835.8 304.2L836.0 302.5L836.4 300.9L836.9 299.6L837.5 298.5M822.6 302.1L822.7 302.2M820.2 298.1L819.5 298.5L819.8 299.2M914.9 207.4L913.8 207.8L913.0 208.7M894.9 228.7L895.1 229.4L894.6 230.4L893.7 231.6L892.6 232.7L891.4 233.3L890.5 233.5L890.1 233.1L890.2 232.2L890.9 231.0L892.0 229.9L893.2 229.0L894.2 228.5L894.9 228.7ZM929.9 210.2L931.4 210.4L932.9 210.3L934.3 209.8L935.5 209.1M927.0 209.6L925.4 209.3L923.9 209.8L922.7 210.9M930.6 211.1L930.5 209.4L930.7 207.6L931.2 206.0M929.3 214.8L927.9 214.4L926.4 214.1M935.7 209.2L934.4 208.6L932.9 208.5L931.6 208.9L930.4 209.7M932.0 216.1L931.0 217.0L931.2 218.4M932.3 215.8L932.7 216.8L933.2 217.7M957.7 213.3L957.8 213.4M943.1 219.4L943.4 220.4L943.5 221.5M943.2 213.4L943.3 213.5M942.6 221.6L942.7 221.7M940.3 208.9L940.4 209.0M955.9 225.5L956.0 225.6M943.2 228.4L943.7 227.1L944.6 226.0L945.8 225.4L947.4 225.3L949.0 225.6L950.4 226.4L951.6 227.4L952.2 228.6L952.4 229.9L952.1 231.2L951.4 232.4L950.3 233.3M986.9 231.9L986.5 232.8L986.0 233.5L985.3 234.1L984.5 234.6L983.4 234.9L982.2 235.1L980.9 235.2L979.6 235.2L978.3 235.1L976.9 234.9L975.5 234.6L974.0 234.1L972.6 233.5L971.2 232.7L969.9 231.9L968.8 231.0L967.8 230.1L966.8 229.2L965.9 228.2L965.2 227.2L964.6 226.2L964.3 225.1L964.2 224.1L964.2 223.1L964.4 222.1L964.7 221.3L965.2 220.7L965.8 220.1L966.7 219.6L967.7 219.2L968.9 218.8L970.1 218.6L971.3 218.5L972.6 218.5L973.9 218.8L975.4 219.2L976.9 219.7L978.4 220.3L979.8 220.9L981.0 221.6L982.2 222.4L983.3 223.2L984.3 224.2L985.3 225.2L986.1 226.3L986.7 227.4L987.0 228.5L987.2 229.5L987.2 230.4L987.1 231.2L986.9 232.0L986.6 232.8M986.9 233.9L986.4 234.7L985.6 235.3L984.7 235.8L983.5 236.2L982.3 236.6L981.1 236.8L979.8 237.0L978.5 236.9L977.0 236.7L975.5 236.4L973.9 235.8L972.4 235.1L971.0 234.4L969.8 233.6L968.6 232.8L967.5 231.9L966.4 230.9L965.4 229.9L964.6 228.7L964.1 227.5L963.8 226.4L963.7 225.3L963.7 224.2L963.8 223.3L964.1 222.5L964.6 221.8L965.3 221.0L966.3 220.4L967.4 219.8L968.5 219.4L969.7 219.1L970.9 219.0L972.3 219.1L973.7 219.4L975.3 219.8L976.9 220.2L978.4 220.7L979.7 221.3L981.0 222.0L982.2 222.9L983.4 223.8L984.6 224.9L985.6 226.0L986.3 227.2L986.9 228.3L987.2 229.3L987.4 230.4L987.5 231.3L987.5 232.3L987.2 233.2L986.8 234.1M987.0 233.3L986.4 234.1L985.7 234.9L984.8 235.5L983.9 236.1L982.8 236.5L981.6 236.8L980.3 236.9L978.8 236.8L977.3 236.6L975.8 236.3L974.3 235.8L972.9 235.3L971.5 234.7L970.1 234.0L968.8 233.1L967.5 232.1L966.5 231.0L965.6 229.9L964.9 228.8L964.4 227.7L963.9 226.7L963.6 225.6L963.5 224.6L963.7 223.6L964.0 222.6L964.6 221.7L965.3 220.9L966.1 220.3L967.1 219.8L968.1 219.5L969.4 219.3L970.8 219.2L972.2 219.2L973.7 219.3L975.2 219.5L976.6 219.9L978.0 220.5L979.5 221.2L980.9 222.0L982.3 222.9L983.5 223.9L984.5 224.9L985.3 225.9L986.0 227.0L986.6 228.1L987.1 229.2L987.4 230.3L987.5 231.4L987.3 232.4M981.5 224.2L981.1 225.8M969.6 227.9L969.4 229.1M972.2 220.4L971.5 221.7M969.1 219.9L968.1 221.1L967.8 222.5L967.2 223.3L966.9 224.5M983.7 230.9L983.4 231.6L982.7 232.1L981.8 232.5L980.6 232.7L979.2 232.6L977.7 232.4L976.1 231.9L974.5 231.3L973.0 230.6L971.6 229.7L970.4 228.7L969.4 227.7L968.7 226.6L968.2 225.7L968.1 224.8L968.3 224.0L968.9 223.3L969.7 222.9L970.7 222.6L972.0 222.5L973.5 222.7L975.0 223.0L976.6 223.6L978.2 224.3L979.6 225.1L981.0 226.0L982.1 227.1L982.9 228.1L983.5 229.1L983.8 230.0L983.7 230.9L983.3 231.6M999.3 227.0L998.1 228.0L997.6 229.5L997.9 231.0M993.1 228.2L994.0 227.2L994.2 225.9M996.0 223.8L994.9 222.8L993.8 221.8L992.7 221.0M992.4 231.4L991.1 232.3L989.6 231.7M999.0 229.7L999.3 231.7L1000.6 233.3M977.0 213.2L977.2 214.5L977.1 215.9M1005.6 246.7L1004.1 247.4L1002.6 247.1L1001.4 245.9M1004.4 243.3L1004.2 245.0L1005.1 246.5M996.9 239.7L995.5 239.3L994.1 238.9L992.7 238.4L991.3 237.9M1009.0 241.6L1008.8 242.6L1008.2 243.5M1011.0 250.1L1012.0 251.2L1012.6 252.4L1013.0 253.8M1005.0 237.2L1004.3 238.8L1003.2 240.2L1001.7 241.1M1023.6 251.3L1024.9 251.0M1011.5 247.8L1010.1 247.7L1009.1 248.6M1023.8 250.8L1023.4 249.0M1015.1 251.4L1014.8 253.0L1013.8 254.2L1012.2 254.6M1028.8 278.8L1027.7 280.5L1028.6 282.3M1033.1 273.9L1032.3 275.2L1031.9 276.7L1031.7 278.2M1025.8 270.1L1027.0 269.8L1027.8 270.7M997.3 236.0L997.1 234.5L996.9 233.0L996.9 231.6L997.1 230.4L997.5 229.4L998.3 228.7L999.2 228.3L1000.3 228.1L1001.3 228.1L1002.4 228.3L1003.4 228.7L1004.5 229.3L1005.7 230.2L1006.9 231.4L1007.9 232.7L1008.7 234.2L1009.2 235.7L1009.5 237.2L1009.7 238.6L1009.8 239.9L1009.7 241.0M1010.6 280.5L1009.2 280.2L1007.7 279.7L1006.3 279.1L1005.0 278.3L1003.8 277.5L1002.8 276.4L1001.9 275.3L1001.1 273.9L1000.3 272.4L999.7 270.8L999.2 269.2L999.0 267.5L999.0 265.9L999.1 264.3L999.4 262.7L999.8 261.1L1000.2 259.6L1000.9 258.1L1001.8 256.7L1002.8 255.4L1004.0 254.3L1005.2 253.4L1006.4 252.7L1007.7 252.2L1009.0 251.8L1010.5 251.6L1012.0 251.5L1013.5 251.6L1014.9 251.9M1013.9 252.1L1015.4 252.5L1016.9 253.0L1018.2 253.6L1019.5 254.3L1020.6 255.2L1021.7 256.2L1022.7 257.4L1023.6 258.6L1024.3 259.9L1025.0 261.3L1025.4 262.7L1025.7 264.1L1025.8 265.6L1025.9 267.1L1025.8 268.6L1025.5 270.0L1025.1 271.5L1024.5 272.9L1023.8 274.2L1022.9 275.4L1022.0 276.6L1020.9 277.6L1019.8 278.5L1018.5 279.3L1017.2 280.0L1015.8 280.6L1014.3 281.0L1012.9 281.2M1022.6 267.7L1022.9 268.6L1023.3 269.9L1023.6 271.0M1022.7 271.2L1022.7 272.7M1015.7 257.0L1016.3 257.7L1016.7 258.8L1017.1 260.4M1018.0 261.0L1018.3 261.6L1018.6 262.9L1018.7 264.0M1019.7 273.9L1019.6 274.8L1020.1 276.1M1016.3 265.6L1016.4 266.3L1016.7 267.3L1016.7 268.5M1016.4 273.6L1016.6 274.2L1016.8 275.2L1017.5 276.8L1017.4 277.4M1009.9 254.6L1010.1 255.9L1010.6 256.8L1010.9 258.1L1011.0 259.2M1013.0 264.3L1013.3 265.9L1013.7 266.8L1013.6 268.2L1014.2 269.7L1014.6 270.8M1008.9 254.8L1009.2 256.1L1009.4 257.4M1012.4 266.1L1012.8 267.4L1013.0 268.7L1013.5 269.9L1013.8 271.2M1011.7 270.5L1011.9 271.8L1012.4 273.2L1012.9 274.4L1013.2 275.9L1013.7 277.4L1013.7 278.8M1011.8 277.7L1012.5 278.8M1008.1 266.0L1008.4 267.4L1008.7 269.1L1008.8 270.4M1008.8 271.0L1009.3 272.5L1009.7 273.9L1010.2 275.0L1010.5 276.5L1010.8 278.3M1013.4 276.5L1012.2 277.0L1011.0 277.3L1009.7 277.3L1008.5 277.1L1007.4 276.6L1006.3 275.9L1005.4 274.9L1004.5 273.7L1003.8 272.4L1003.3 270.9L1003.0 269.3L1002.9 267.7L1003.0 266.0L1003.3 264.5L1003.7 263.0L1004.4 261.6L1005.1 260.4L1006.1 259.4L1007.2 258.6L1008.4 258.0L1009.6 257.7L1010.8 257.7L1012.0 257.9L1013.1 258.5L1014.2 259.2M994.6 271.6L995.1 271.8L995.6 271.8M994.0 277.8L994.1 277.9M993.5 273.4L992.9 274.3L991.9 274.1M1012.2 294.4L1013.0 293.1L1013.9 291.8L1014.8 290.6L1015.7 289.3L1016.5 288.0L1017.4 286.8M1012.3 293.1L1013.2 291.9L1014.2 290.7L1015.1 289.4L1016.0 288.1L1016.9 286.9L1017.7 285.6L1018.6 284.3L1019.4 283.0M1012.1 299.5L1012.9 298.4L1013.7 297.2L1014.5 296.0L1015.2 294.8L1015.9 293.6L1016.5 292.3L1017.1 291.1M1002.0 299.0L1003.4 298.0L1004.8 297.1L1006.2 296.4L1007.8 295.8M1031.8 316.0L1033.4 315.3L1035.1 315.9L1035.8 317.6M1040.0 313.1L1041.7 313.1L1042.9 314.2L1043.3 315.8M1035.3 313.7L1034.6 312.1L1033.5 310.8L1032.1 309.8L1030.6 309.2M1027.1 298.3L1027.3 299.9L1028.3 301.2L1029.8 301.7M1027.4 304.7L1026.2 303.9L1025.1 302.8L1024.3 301.6L1023.7 300.2M1025.5 307.9L1024.6 306.7L1023.2 305.9M1028.8 306.6L1029.5 305.7L1030.6 305.3M1027.6 308.4L1028.2 309.3L1029.3 309.7M1033.2 316.7L1033.3 315.2L1032.6 313.8L1031.3 313.0L1029.8 313.1M1031.1 317.3L1030.8 318.7L1031.2 320.1M1032.6 292.0L1032.1 290.4L1030.8 289.3M1028.6 314.0L1029.7 313.5L1030.8 313.1M1038.1 312.8L1036.3 312.2L1035.5 310.5M1028.2 310.2L1028.0 308.5L1028.9 307.0L1030.6 306.4M1038.1 311.4L1038.4 312.8L1038.8 314.2L1039.1 315.6L1039.4 316.9M1028.0 286.5L1028.5 285.6L1029.5 285.2M1029.0 291.1L1027.8 292.5L1025.9 292.5M1022.6 297.5L1022.1 299.3L1020.9 300.6L1019.3 301.5M1024.7 309.9L1024.1 311.3L1023.1 312.5L1021.9 313.4M1018.8 318.9L1020.1 320.0L1021.5 321.0L1023.0 321.8M1024.7 315.5L1023.1 314.8L1022.0 313.5L1021.6 311.9L1021.8 310.3M1018.2 313.9L1019.7 314.3L1021.0 315.0L1022.2 316.0M1023.5 319.7L1025.2 318.8L1026.3 317.2M1019.3 314.2L1020.1 312.7L1021.3 311.6M987.8 300.8L987.9 300.9M940.7 306.1L941.6 307.4L941.9 309.0L942.6 310.4L942.7 311.4L943.3 313.1M941.4 311.5L941.8 312.9L942.5 314.1L942.8 315.4L943.2 316.7L943.7 318.0M942.9 317.7L943.4 318.9L943.8 320.4L944.3 321.3L945.0 322.2M943.5 322.7L943.7 323.7M939.7 315.9L940.1 317.2L940.4 318.6L940.9 319.6M940.9 321.0L941.1 322.4L941.8 323.4L942.5 324.6M938.4 316.5L938.7 317.8L939.5 319.5L939.7 320.6L940.6 322.2L941.0 323.4L941.6 325.0M938.1 322.7L938.9 323.6L939.5 325.2M938.0 323.4L938.6 324.7L939.0 326.0M928.7 307.8L929.0 308.8L929.4 309.6M932.3 316.2L932.7 317.1M933.3 317.7L933.6 319.3L934.2 320.3L934.6 321.1L934.9 322.4M933.4 323.5L934.3 324.4L934.6 325.4L935.2 326.9M927.5 309.7L927.7 310.6M929.4 315.3L929.8 316.6L930.5 317.4L930.7 318.6M932.5 325.1L933.4 326.5M925.7 312.2L926.1 313.3L926.6 314.5M927.9 320.3L928.3 321.7L928.9 323.0L929.0 324.6L929.6 325.5M928.4 322.8L928.6 323.8L929.2 324.8M944.0 315.5L944.0 317.1L943.7 318.7L943.2 320.1L942.3 321.3L941.1 322.3L939.7 323.0L938.2 323.5L936.7 323.8L935.2 323.8L933.8 323.5L932.4 322.9L931.1 322.0L929.9 320.8L929.1 319.4L928.6 317.9L928.5 316.3L928.7 314.8L929.1 313.4L929.8 312.1L930.6 311.0L931.8 310.0L933.2 309.2L934.8 308.7L936.4 308.5L938.0 308.6L939.4 309.1L940.7 309.9L941.8 310.9L942.8 312.2L943.6 313.5L944.1 315.0L944.2 316.4M980.5 327.9L980.2 329.5L979.7 331.0L978.9 332.3L978.0 333.6L977.0 334.7L975.8 335.7L974.4 336.4L973.0 337.0L971.5 337.3L970.0 337.4L968.5 337.2L967.0 336.8L965.6 336.2L964.3 335.5L963.2 334.5L962.1 333.3L961.3 332.0L960.6 330.6L960.1 329.1L959.9 327.5L959.9 325.9L960.1 324.4L960.5 322.8L961.1 321.4L961.9 320.1L962.8 318.9L964.0 317.8L965.3 317.0L966.7 316.3L968.1 315.9L969.6 315.7L971.1 315.7L972.6 316.0L974.1 316.5L975.4 317.2L976.7 318.1L977.8 319.1L978.7 320.3L979.5 321.7L980.0 323.2L980.4 324.7L980.6 326.3L980.5 327.9M980.5 327.4L980.3 328.7L979.8 330.1L978.9 331.5L978.1 332.9L977.4 334.4L976.6 335.6L975.5 336.6L974.1 337.2L972.5 337.5L970.8 337.5L969.3 337.4L968.0 337.1L966.9 336.8L965.7 336.4L964.4 335.7L963.1 334.8L961.9 333.5L961.1 332.0L960.7 330.4L960.6 328.7L960.6 327.2L960.5 325.7L960.6 324.4L960.8 323.1L961.4 321.8L962.4 320.4L963.7 319.1L965.0 318.0L966.2 317.0L967.3 316.5L968.5 316.3L969.9 316.3L971.5 316.6L973.2 317.0L974.7 317.5L976.0 318.1L976.9 318.8L977.7 319.8L978.5 321.1L979.3 322.6L980.1 324.3L980.5 326.0M973.7 320.9L974.2 321.9L975.3 322.8L975.5 324.2L976.4 325.4L977.1 326.5L977.7 327.2M970.7 321.1L971.6 322.1M973.9 329.5L974.6 330.3L975.0 331.2L976.2 332.4M968.5 322.4L968.9 323.4M967.6 323.2L968.7 324.1L968.8 325.4L969.5 326.5M964.9 319.4L965.2 320.5L965.9 321.9M965.5 323.1L966.5 323.7L966.6 325.1L967.3 326.1M965.7 325.5L966.8 326.7L967.7 328.1L968.3 329.6L968.8 330.8L969.8 332.2L970.3 333.2M967.0 329.8L967.8 330.8L968.8 331.6L969.0 333.0L969.7 333.9L970.1 335.0M966.0 333.0L966.4 334.4L967.1 335.5L967.8 336.7M961.5 328.9L962.1 330.1L962.8 330.8L963.4 331.9L964.3 332.9M1006.1 326.6L1006.4 328.2L1006.5 329.2L1006.7 330.2L1007.2 331.4L1007.1 333.1M998.1 323.9L998.0 325.1M996.9 324.4L996.8 325.4L996.9 326.7M997.2 335.5L997.6 337.0L997.6 338.5M997.4 339.5L997.7 340.4L998.2 342.0M994.1 327.6L994.5 329.4L994.4 330.5L994.6 332.4L994.8 333.7L995.4 335.2M991.2 328.0L991.4 329.0M947.7 349.3L947.8 349.4M953.1 340.6L953.2 340.7M955.3 341.8L955.4 341.9M943.2 346.1L944.7 346.4L946.3 346.4M984.3 320.3L984.0 321.9L982.9 323.0M968.6 310.3L968.7 310.4M992.2 317.8L993.2 316.5L994.3 315.4M1031.0 340.3L1030.8 341.4L1031.6 342.3M1025.6 344.6L1026.1 345.6L1027.2 346.0M1023.0 334.8L1024.2 335.6L1024.8 336.9L1024.7 338.3M1023.0 327.9L1024.2 328.1L1024.8 327.1M1028.6 345.5L1029.7 344.4L1030.8 343.3M1032.2 343.2L1033.7 343.8L1034.0 345.4M1027.7 340.4L1026.1 340.6L1024.6 341.5M1028.7 350.4L1027.0 349.8L1025.9 348.4L1025.7 346.7M1031.1 331.2L1032.4 330.1L1033.4 328.9L1034.2 327.4L1034.7 325.9M1035.5 345.3L1036.6 345.7L1036.9 346.9M1035.8 343.4L1037.7 343.3M1035.7 338.1L1035.9 336.3L1037.7 335.8M1029.1 349.1L1029.4 347.7L1028.9 346.3L1027.7 345.5L1026.2 345.3M1033.5 349.2L1035.2 350.1M1022.7 336.8L1024.0 337.3L1025.4 337.2M1020.2 340.4L1021.7 339.8L1023.2 339.3L1024.8 339.0L1026.4 338.9M1033.4 343.9L1032.5 343.0L1031.2 342.6M1014.6 371.2L1013.3 372.8L1011.9 374.3M1008.3 355.7L1007.7 354.0L1008.1 352.3L1009.3 351.0M1003.2 358.1L1001.4 358.7L1000.2 360.2M1021.5 367.7L1022.5 367.2L1023.6 367.6M1006.3 351.0L1007.9 351.1L1009.1 352.1L1009.6 353.6L1009.2 355.1M1010.2 349.8L1008.7 349.2L1007.7 347.9L1007.7 346.2L1008.5 344.8M1015.2 368.6L1015.6 370.1L1015.0 371.6L1013.6 372.2M1011.6 350.7L1012.7 350.3L1013.1 349.2M1017.5 360.8L1018.7 359.9L1020.0 359.1M1020.1 353.4L1018.7 354.4L1017.8 355.8L1017.7 357.5M1008.9 361.0L1009.9 362.0L1011.3 362.3L1012.7 361.9L1013.7 360.9M1006.7 358.8L1008.6 358.1L1010.4 357.1M1012.5 354.1L1013.6 353.0L1013.6 351.4L1012.6 350.2M1015.1 367.2L1013.7 366.9L1012.2 366.9L1010.8 367.2L1009.5 367.8M1011.2 372.0L1012.7 371.1L1014.4 370.7L1016.1 370.8L1017.8 371.3M1013.8 349.0L1015.2 348.5L1016.1 349.6M999.8 376.9L1000.3 375.6L1001.1 374.3L1001.9 373.2L1002.9 372.2M1003.0 375.6L1004.7 376.0L1006.3 375.7L1007.6 374.6L1008.3 373.0M998.3 379.8L999.6 379.5L1000.6 378.5L1000.9 377.1M994.4 383.3L994.2 381.8L994.8 380.5L996.2 379.9M1007.4 372.5L1007.6 371.4L1008.6 371.0M1007.0 374.7L1008.1 374.6L1008.8 375.4M1004.4 380.7L1003.1 381.5L1002.0 382.6L1001.2 383.9L1000.7 385.4M1001.5 386.4L1000.1 387.3L999.7 388.9L1000.5 390.4M999.5 380.7L1000.2 381.9L1001.2 382.9M1001.8 383.7L1003.0 383.0L1003.2 381.6M1000.8 378.3L999.7 377.0L998.7 375.8L997.7 374.6L996.7 373.3M1008.1 377.3L1008.1 376.2L1009.1 375.6M994.7 378.4L993.8 376.7L992.6 375.2M1005.4 374.0L1005.2 372.0L1004.3 370.2M1005.1 375.9L1005.7 376.9L1006.7 376.8M994.5 372.6L993.2 373.6L991.7 374.4L990.0 374.8M996.8 372.5L997.0 374.1L997.5 375.5L998.3 376.8L999.4 377.8M998.2 371.8L999.3 372.6L1000.6 373.3L1001.9 373.9L1003.3 374.4M998.3 386.1L996.7 385.4L996.3 383.7M995.7 377.7L996.6 376.5L997.9 375.6L999.3 375.2L1000.9 375.2M991.7 375.2L990.1 375.2L988.4 375.0L986.8 374.7L985.2 374.3M1018.3 362.2L1017.1 363.0L1015.6 363.0L1014.4 362.1L1013.8 360.8M1018.3 367.3L1020.0 366.7L1021.2 365.3L1021.7 363.6M1016.3 365.3L1016.9 366.7L1016.9 368.2M1025.2 366.8L1024.1 366.8L1023.2 366.3M1019.2 356.8L1018.7 355.1L1019.9 353.7M1027.5 363.4L1026.4 362.5L1025.1 363.2M1021.2 361.6L1022.8 362.0L1024.4 362.4L1026.0 362.9M1017.3 362.5L1018.5 363.6L1019.4 365.0L1019.8 366.6M1018.1 370.5L1016.4 370.8L1014.8 370.4L1013.4 369.4M1020.3 357.9L1021.6 359.2L1023.3 359.9L1025.2 359.9M1035.8 322.2L1036.9 321.2L1038.3 321.5M1040.4 324.7L1042.1 324.8M967.6 354.6L967.8 356.2L968.0 357.9L967.9 359.5L967.5 360.7L966.5 361.7L965.1 362.4L963.5 363.0L961.9 363.4L960.6 363.8L959.5 364.0L958.3 364.0L956.8 363.5L955.4 362.6L954.1 361.3L953.4 359.8L953.2 358.3L953.5 356.8L953.9 355.6L954.3 354.5L954.8 353.5L955.6 352.5L956.7 351.6L958.3 350.7L960.2 350.1L961.9 349.8L963.3 350.0L964.4 350.6L965.3 351.6L966.3 352.9L967.3 354.1L968.2 355.4M964.5 355.7L965.0 354.4L964.8 352.9L964.0 351.7M958.6 360.0L959.7 358.4L961.3 357.2M960.3 356.7L960.4 358.2L959.3 359.4M962.1 360.9L964.1 361.4L966.1 361.5M973.5 347.3L973.3 348.8L972.6 350.2L971.4 351.4L970.1 352.2L968.6 352.6L967.1 352.4L965.6 351.7L964.4 350.5L963.6 349.0L963.3 347.5L963.8 346.0L964.8 344.8L966.2 343.9L967.8 343.5L969.3 343.6L970.7 344.0L971.9 344.8L972.9 346.0L973.5 347.4M965.5 366.0L965.6 366.1M994.6 362.3L994.8 363.9L994.7 365.3L994.1 366.5L993.0 367.5L991.6 368.4L990.1 369.3L988.8 370.2L987.6 371.0L986.3 371.6L984.7 371.9L982.9 371.8L980.9 371.3L979.1 370.5L977.8 369.5L976.8 368.5L976.0 367.5L975.2 366.6L974.2 365.5L973.4 364.2L973.0 362.7L973.1 361.0L973.7 359.2L974.5 357.6L975.3 356.2L976.1 355.1L976.9 354.3L978.0 353.7L979.5 353.1L981.4 352.6L983.3 352.1L985.1 351.8L986.5 351.7L987.7 352.1L989.0 352.8L990.4 353.9L992.0 355.2L993.4 356.5L994.3 357.7L994.6 358.9L994.7 360.1L994.6 361.3M995.3 362.0L994.9 363.2L994.3 364.5L993.3 365.7L992.3 366.9L991.2 368.0L989.9 368.9L988.5 369.6L986.8 370.0L985.0 370.2L983.1 370.1L981.4 369.8L979.9 369.4L978.4 368.9L977.1 368.2L975.8 367.4L974.6 366.3L973.6 365.0L973.0 363.7L972.7 362.2L972.7 360.7L973.0 359.3L973.4 358.0L973.9 356.9L974.7 355.8L975.8 354.7L977.2 353.8L978.7 352.9L980.4 352.3L982.0 351.9L983.6 351.7L985.2 351.8L986.9 352.2L988.6 352.8L990.2 353.5L991.6 354.3L992.8 355.3L993.6 356.3L994.3 357.5L994.8 358.8L995.1 360.3M990.5 357.2L990.5 357.9L991.2 359.4L991.6 360.4L991.9 361.5M988.8 358.0L988.8 359.4L989.3 360.8L989.7 362.4L989.9 363.5L990.8 365.5L990.9 366.6M987.5 365.0L987.5 366.8L987.8 367.9L988.7 369.4M980.6 353.7L981.2 354.7L981.5 355.8L982.2 357.6L982.5 358.4L982.8 359.7M983.0 361.3L983.3 362.3L983.5 363.8L984.1 365.1L984.4 366.4L984.9 367.6M981.0 361.7L981.5 363.0L982.0 364.0L982.5 365.4L982.5 366.4L982.7 367.8M981.4 365.1L982.1 366.8L982.2 367.7L982.7 369.3M992.0 351.0L993.3 351.7L994.7 351.9M1000.7 349.2L999.1 348.4L997.4 348.3L995.8 348.9M991.2 383.9L991.3 384.7L991.2 385.6L991.0 386.5L990.5 387.4L989.8 388.2L988.9 389.0L987.9 389.8L986.7 390.5L985.5 391.2L984.2 391.9L982.8 392.5L981.2 393.0L979.6 393.3L978.0 393.5L976.4 393.6L974.9 393.6L973.5 393.6L972.1 393.4L970.8 393.2L969.6 392.9L968.5 392.4L967.6 391.9L966.9 391.2L966.4 390.5L966.1 389.7L965.9 388.9L965.9 388.0L966.1 387.2L966.5 386.4L967.1 385.6L967.9 384.7L968.9 383.9L970.0 383.1L971.1 382.3L972.4 381.6L973.8 381.1L975.3 380.6L976.9 380.3L978.5 380.0L980.1 379.8L981.6 379.7L983.0 379.6L984.5 379.7L985.8 379.9L987.1 380.3L988.3 380.7L989.2 381.3L990.0 381.9L990.5 382.6L991.0 383.3L991.3 384.0M983.5 385.3L983.1 386.9L983.6 388.5M959.1 394.9L960.6 395.1L961.8 396.1L962.1 397.6M959.1 396.1L959.1 394.2L960.3 392.9M958.5 391.6L958.6 390.0L957.7 388.8L956.2 388.4M958.2 398.3L959.5 398.6L960.6 397.8M960.0 397.0L959.5 398.1L958.2 398.9L956.6 399.0L955.1 398.5L954.2 397.6L954.2 396.4L955.1 395.4L956.6 395.0L958.2 395.1L959.5 395.9L960.0 397.0ZM965.3 371.9L963.5 371.6L961.9 372.2L960.7 373.5M963.6 374.2L961.7 373.5L960.2 372.1M971.5 370.1L970.8 372.0L970.4 374.0M965.1 374.1L965.7 372.4L965.0 370.7M987.1 403.2L988.3 402.1L989.4 401.0L990.6 399.9L991.8 398.8M984.5 395.1L983.2 394.5L981.9 393.9L980.5 393.6L979.1 393.3M980.7 403.6L982.2 402.3L982.2 400.4M977.6 406.0L976.2 406.5L975.0 407.4L974.2 408.7M989.3 397.7L990.3 398.4L991.3 398.8M946.5 413.6L946.5 412.0L945.2 411.0M957.6 409.5L958.6 407.8L960.5 407.9M951.6 414.5L950.1 414.8L949.0 416.0M967.8 408.1L968.6 409.9L967.7 411.7M953.9 406.4L952.1 406.4L950.4 406.7L948.7 407.1M964.6 412.8L965.2 411.4L964.9 409.9M950.3 413.6L948.8 413.3L947.3 413.9L946.5 415.2M946.5 410.1L945.3 409.3L944.8 408.0L945.1 406.6L946.1 405.6M938.9 404.4L940.3 405.3L941.6 404.4M949.8 405.4L948.9 406.8L947.8 408.0M935.1 411.2L934.6 409.7L933.6 408.4L932.2 407.5L930.7 407.1M937.6 403.0L936.5 404.0L935.5 405.1L934.5 406.3L933.6 407.6M948.4 407.2L947.9 408.9L947.2 410.5L946.3 412.1M940.3 411.7L940.0 412.8L939.2 413.6M936.2 401.6L935.3 402.1L934.3 402.4M943.4 405.2L945.3 405.5L946.5 403.9M1005.0 387.8L1003.8 386.9L1003.5 385.4M1004.0 387.0L1004.3 385.9L1003.9 384.9M1003.6 389.3L1002.5 388.5L1001.6 387.5M995.7 395.5L997.0 396.4M1002.7 388.0L1002.8 389.7L1002.4 391.2L1001.4 392.5M1002.4 388.0L1003.4 388.9L1004.3 389.9M1003.5 388.3L1002.1 388.4L1000.7 388.6L999.3 388.6L997.9 388.6M938.5 355.2L938.7 356.1L939.0 357.3L939.4 357.9M932.6 351.7L933.2 353.0L933.3 354.5L934.1 356.1M934.0 356.7L934.7 357.4L934.9 358.8L935.8 359.7L936.2 360.5M926.7 346.2L927.4 347.0L927.8 348.1L928.3 349.5L928.9 350.7M935.6 364.4L935.9 365.4M924.6 349.0L925.4 350.1L926.1 351.8L926.5 352.8L927.4 354.2L928.2 355.7L928.6 356.7M928.4 357.8L928.3 358.8L929.4 359.4L929.5 360.6M930.4 361.2L930.8 362.1L931.2 363.0L931.6 364.8M921.7 346.2L922.3 347.1L922.7 348.0L923.1 348.9M928.1 359.3L928.8 360.0L929.0 361.5L929.5 362.1M929.8 362.9L930.3 363.6L931.0 364.5L931.1 365.5M930.0 367.4L930.3 368.7L930.4 369.2M918.7 352.1L919.1 353.4L919.9 354.8L920.3 355.9M913.7 346.9L914.2 348.1L914.9 349.2L915.6 350.2L916.4 351.6L916.9 352.7M917.4 353.2L917.4 354.5L918.3 355.6L918.9 356.4L919.2 357.3L919.7 358.9M920.3 359.2L921.2 360.7L921.8 362.1L922.1 362.9L923.1 364.3L923.7 365.5L924.1 366.9M920.5 365.0L921.3 366.5L921.3 367.5L922.2 368.4L922.5 369.3M909.6 350.8L909.7 352.2L910.2 353.5M913.2 366.1L914.0 367.1M925.8 354.0L925.6 355.8L925.3 357.5L924.8 358.9L924.0 360.1L922.7 361.1L921.3 361.8L919.9 362.5L918.5 362.9L917.3 363.2L916.1 363.2L914.7 362.9L913.2 362.2L911.8 361.2L910.6 359.9L909.8 358.5L909.3 357.0L909.0 355.4L908.8 353.9L908.6 352.4L908.6 350.9L908.9 349.3L909.6 347.7L910.7 346.2L911.9 344.9L913.1 343.8L914.3 343.2L915.4 342.9L916.7 342.8L918.2 343.0L919.8 343.3L921.4 343.8L922.6 344.5L923.6 345.5L924.3 346.7L924.9 348.2L925.5 349.9L926.1 351.7M961.0 371.9L961.4 373.3L961.5 374.4L961.2 375.2L960.3 376.0L959.2 376.9L958.2 377.9L957.4 379.1L956.8 380.4L956.1 381.5L954.8 382.3L953.2 382.8L951.3 383.0L949.7 383.0L948.4 383.0L947.3 383.2L946.2 383.4L944.7 383.7L942.9 383.7L941.1 383.5L939.5 382.9L938.4 382.0L937.7 381.0L937.0 379.9L936.0 379.0L934.8 378.3L933.6 377.6L932.8 376.9L932.6 375.9L932.7 374.6L933.0 373.0L933.0 371.5L932.8 370.0L932.7 368.9L932.9 367.9L933.8 367.2L935.0 366.4L936.2 365.6L937.2 364.5L938.0 363.3L938.7 362.2L939.8 361.4L941.4 360.8L943.3 360.7L945.1 360.7L946.6 360.9L947.7 360.9L948.7 360.9L950.0 360.7L951.7 360.7L953.5 360.9L955.1 361.5L956.3 362.4L957.1 363.5L957.6 364.7L958.4 365.7L959.4 366.6L960.5 367.3L961.3 368.1L961.6 369.1L961.4 370.3M959.0 371.3L959.9 372.5L960.3 373.9M954.1 366.9L954.7 367.7L955.5 368.9L955.8 370.0M957.3 374.1L957.4 375.1L958.3 375.8L958.8 377.2M954.5 378.1L955.2 380.0M946.9 369.8L947.7 370.9L948.0 371.6L948.4 372.9M942.1 362.7L942.5 364.1L943.3 365.6M943.4 365.9L943.5 367.3L944.6 368.4L944.9 369.5L945.8 371.1M949.9 379.5L950.7 381.1L951.2 382.2M939.7 370.4L940.0 371.2L940.8 372.7L941.8 373.9L942.4 375.5M942.3 376.4L942.9 377.9L943.6 379.1L944.2 379.8M935.4 366.5L936.5 367.3L937.0 368.6M932.9 370.4L933.5 371.3M936.0 376.2L936.1 377.2L936.9 378.1L937.3 378.8M937.9 379.2L938.6 380.4M944.9 381.1L945.2 382.2L945.0 382.9L944.3 383.6L943.1 384.2L941.9 384.9L940.8 385.8L940.0 386.8L939.2 387.7L938.0 388.3L936.4 388.6L934.4 388.5L932.5 388.2L930.9 387.8L929.7 387.5L928.6 387.3L927.3 387.2L925.6 387.0L923.8 386.5L922.2 385.7L921.0 384.6L920.3 383.3L919.9 382.0L919.4 380.9L918.6 379.9L917.8 379.2L917.2 378.4L917.2 377.5L917.7 376.4L918.5 375.1L919.2 373.7L919.7 372.5L920.1 371.5L920.7 370.9L921.9 370.6L923.5 370.3L925.3 370.1L926.9 369.7L928.2 369.2L929.3 368.8L930.5 368.5L932.1 368.6L934.0 369.1L936.0 369.9L937.6 370.7L938.8 371.6L939.7 372.3L940.5 372.8L941.6 373.4L942.9 374.1L944.1 375.0L944.9 376.3L945.1 377.7L944.9 379.2L944.6 380.5L944.5 381.5L944.6 382.3M935.2 380.7L934.6 379.1L934.3 377.5L934.2 375.8L934.3 374.1M935.7 383.1L934.9 381.5L933.8 380.0L932.6 378.7M927.4 382.5L927.8 383.8L928.5 385.1L929.4 386.2L930.4 387.0L931.7 387.7M931.1 376.7L931.0 374.9L932.2 373.5M920.2 381.7L920.6 380.1L920.5 378.4M925.7 384.3L926.1 382.7L926.3 381.0L926.4 379.4L926.2 377.7M924.4 374.5L924.0 375.9L923.0 376.9L921.6 377.4L920.1 377.0M933.1 382.6L933.3 380.9L933.4 379.2L933.4 377.5L933.4 375.9M941.4 376.7L940.2 375.6L938.6 375.0L937.0 375.1L935.5 375.8M913.8 373.6L914.8 374.1L916.0 374.1M918.2 370.9L916.8 371.7L916.1 373.1L916.3 374.7L917.4 375.9M918.2 372.2L917.1 370.8L915.5 370.0L913.8 369.8M908.5 373.0L908.7 374.6L909.7 375.8L911.2 376.2L912.8 375.8M913.7 375.1L915.4 375.3L917.0 375.7L918.5 376.5M908.7 371.1L909.0 369.6L910.3 368.9M907.0 370.8L905.7 370.0L905.2 368.5L905.5 367.0M918.5 369.5L918.8 368.1L918.9 366.7L918.6 365.3L918.1 364.0M910.6 373.0L912.2 373.5L913.9 373.5L915.5 372.8L916.7 371.6M909.4 378.4L908.6 377.0L907.7 375.6M915.2 374.2L916.6 373.7L918.1 374.0L919.2 375.2L919.4 376.7M916.8 369.7L918.1 370.7L919.5 371.6M915.1 376.2L913.9 375.1L912.5 374.2M924.3 345.3L924.2 344.2L924.4 343.4L925.1 342.7L926.3 342.0L927.7 341.4L929.1 340.7L930.3 340.1L931.6 339.6L932.9 339.2L934.6 339.2L936.4 339.5L938.2 340.1L939.7 340.8L940.8 341.6L941.5 342.4L942.2 343.0L942.8 343.8L943.4 344.6L943.8 345.6M943.4 348.7L945.2 348.6L946.8 349.0L948.4 349.6L949.8 350.6L951.0 351.8L951.9 353.3L952.6 354.9L952.9 356.6L952.8 358.3L952.3 359.9L951.5 361.4L950.4 362.8L949.1 363.9L947.7 364.7M944.4 349.3L946.0 349.3L947.7 349.6L949.2 350.3L950.6 351.3L951.8 352.4L952.7 353.8L953.3 355.2L953.5 356.7L953.3 358.3L952.9 359.8L952.2 361.2L951.2 362.5L950.0 363.6M833.0 328.6L832.8 330.2L832.6 331.8L832.2 333.3L831.7 334.6L831.1 335.8L830.5 336.9L829.9 337.8L829.2 338.5L828.5 338.9L827.7 339.1L826.9 339.0L826.2 338.6L825.5 338.1L824.9 337.3L824.4 336.3L823.9 335.2L823.5 333.9L823.2 332.5L823.0 330.9L822.9 329.3L823.0 327.6L823.1 326.0L823.4 324.4L823.7 322.9L824.1 321.5L824.6 320.3L825.2 319.2L825.9 318.3L826.7 317.6L827.4 317.1L828.1 316.8L828.9 316.8L829.5 317.1L830.2 317.6L830.9 318.4L831.5 319.3L832.0 320.5L832.4 321.7L832.7 323.1L832.9 324.6L833.0 326.2L833.0 327.9L832.9 329.5M823.1 336.9L822.5 335.7L822.0 334.3L821.7 332.8L821.5 331.2L821.4 329.5L821.4 327.8L821.5 326.0L821.8 324.4L822.2 322.8L822.7 321.3L823.3 320.0L824.0 318.9M834.8 312.7L834.8 311.0L834.9 309.2L835.1 307.4L835.2 305.7L835.5 304.1L835.9 302.7L836.5 301.7M884.6 335.9L884.7 337.4L884.8 339.0L884.9 340.5L885.0 342.1L885.0 343.6L884.9 345.0L884.6 346.4L884.3 347.8L883.9 349.1L883.5 350.5L883.2 351.8L882.7 353.1L882.1 354.3L881.4 355.4L880.7 356.5L879.9 357.4L879.1 358.2L878.4 359.0L877.6 359.7L876.6 360.4L875.6 361.1L874.6 361.6L873.6 362.0L872.6 362.2L871.6 362.3L870.6 362.4L869.6 362.3L868.4 362.2L867.3 362.1L866.2 361.9L865.2 361.5L864.2 361.0L863.3 360.4L862.2 359.7L861.2 358.9L860.2 358.1L859.3 357.2L858.4 356.2L857.7 355.2L856.9 354.2L856.2 353.0L855.4 351.7L854.7 350.4L854.1 349.0L853.6 347.6L853.2 346.1L852.9 344.7L852.5 343.3L852.2 341.9L851.9 340.4L851.8 338.8L851.7 337.3L851.8 335.7L851.9 334.2L852.1 332.8L852.2 331.4L852.4 330.0L852.7 328.7L853.2 327.3L853.7 326.0L854.3 324.7L854.8 323.5L855.4 322.4L856.0 321.3L856.7 320.4L857.6 319.6L858.5 318.8L859.4 318.1L860.3 317.4L861.2 316.8L862.1 316.3L863.1 315.9L864.1 315.6L865.2 315.5L866.3 315.4L867.4 315.5L868.4 315.6L869.4 315.8L870.4 316.0L871.5 316.3L872.6 316.8L873.7 317.4L874.7 318.1L875.6 318.9L876.5 319.8L877.4 320.7L878.3 321.6L879.2 322.6L880.0 323.7L880.8 324.9L881.4 326.1L881.9 327.5L882.5 328.9L883.1 330.3L883.6 331.7L884.1 333.1L884.4 334.5L884.6 336.0M859.5 328.2L859.7 329.4L860.0 331.3L860.4 332.3M862.2 341.4L862.7 342.9L862.9 343.7L863.1 345.7L863.4 346.8M856.6 320.4L856.7 321.7M860.6 339.3L860.5 341.0L860.8 342.3L861.1 343.6L861.2 345.0M858.0 338.2L858.1 339.5L858.5 340.4L858.6 342.0M859.9 350.9L860.4 351.9L860.3 353.0L860.8 354.6L861.2 355.8M858.1 347.7L858.5 348.8L858.6 350.5L859.2 351.9L858.9 352.8M859.5 354.2L859.7 355.5L860.2 357.2M855.3 336.8L855.3 338.4L855.5 339.3L856.0 340.9L856.0 342.0L856.5 343.7L856.6 344.7M856.7 345.1L857.4 346.6L857.7 348.2L857.6 349.6L857.7 351.2M853.0 343.7L853.1 344.6L853.4 346.1L854.0 347.9M866.8 357.2L866.0 356.7L865.2 356.1L864.2 355.3L863.3 354.5L862.5 353.6L861.8 352.6L861.2 351.5L860.6 350.3L859.9 349.0L859.3 347.5L858.6 346.0L858.1 344.3L857.7 342.7L857.5 341.1L857.3 339.5L857.1 337.9L856.9 336.3L856.7 334.7L856.7 333.0L856.8 331.3L857.0 329.7L857.3 328.2L857.6 326.8L857.9 325.5L858.2 324.4L858.6 323.3L859.2 322.2L859.9 321.3L860.7 320.4L861.3 319.6L862.0 319.0M864.4 354.7L863.5 354.2L862.6 353.6L861.8 352.9L861.0 352.1L860.3 351.2L859.5 350.1L858.8 348.9L858.1 347.7L857.6 346.4L857.1 345.1L856.7 343.7L856.3 342.3L856.0 340.9L855.7 339.4L855.5 337.8L855.4 336.3L855.4 334.8L855.5 333.3L855.6 331.9L855.8 330.5L856.1 329.2L856.4 328.0L856.8 326.8L857.3 325.6L857.9 324.6L858.5 323.6L859.2 322.8M864.2 356.8L863.6 356.5L863.2 355.8L862.5 354.8L861.6 353.6L860.5 352.2L859.3 350.8L858.6 349.5L858.2 348.4L858.0 347.3L857.7 346.0L857.1 344.5L856.3 342.7L855.6 340.7L855.3 338.7L855.3 336.9L855.6 335.2L855.8 333.8L855.7 332.4L855.5 331.1L855.3 329.6L855.5 327.9L856.1 326.2L856.9 324.6L857.6 323.1L858.0 322.0L858.2 321.2L858.5 320.6L859.1 320.1M874.8 346.9L873.8 348.1L873.0 349.3M861.9 328.3L862.9 327.0L863.9 326.0L865.0 325.6L865.9 325.7L866.8 326.4L867.4 327.5L867.8 328.9L867.6 330.5L867.1 332.1L866.3 333.6M861.8 328.1L862.6 326.9L863.7 326.4L864.8 326.4L865.9 326.9L866.8 327.9L867.2 329.2L867.0 330.6L866.4 332.1L865.6 333.5M864.7 314.1L866.3 314.2L867.9 314.5M884.0 357.0L890.0 360.0L893.0 365.0M874.9 316.2L874.5 315.4L874.3 314.1L874.3 312.6L874.5 311.1L874.7 309.7L875.0 308.7M888.5 324.1L888.6 324.2M890.7 323.9L890.8 324.0M890.7 319.5L889.2 320.2L887.7 319.8M910.7 325.9L911.1 327.3L912.1 328.4M909.2 328.7L909.2 329.4L908.7 329.9M916.5 327.2L917.1 327.4L917.7 327.5M890.1 337.7L890.2 337.8M892.6 342.5L891.7 343.1L890.6 342.7M918.4 330.0L919.4 328.8L921.0 328.3L922.6 328.7L923.8 329.8L924.1 331.4L923.4 332.8M836.0 355.5L838.0 362.0L842.0 369.0L847.5 376.5M838.5 355.0L840.5 361.5L844.5 368.5L849.0 374.5M854.0 360.0L854.5 361.7L853.3 363.0M869.5 366.2L868.0 366.7L866.8 367.5M882.4 374.0L882.5 374.1M885.1 367.3L883.6 367.2L882.2 367.7M865.8 366.9L865.9 367.0M872.2 368.1L870.7 368.2L869.4 368.7M854.4 374.8L854.5 374.9M874.1 370.5L874.2 370.6M879.9 375.5L878.9 376.2L877.6 376.0M874.6 363.2L874.7 363.3M862.2 377.1L861.6 378.0L861.7 379.1M874.1 367.2L872.7 368.0L871.1 368.1M861.3 369.4L861.4 369.5M889.2 370.7L890.0 372.2L890.8 373.6L891.4 375.1L891.9 376.5L892.2 377.8L892.2 378.9L892.1 379.9L891.8 380.6L891.3 381.0L890.6 381.3L889.9 381.3L889.0 381.0L888.0 380.5L887.0 379.7L885.9 378.7L884.8 377.5L883.9 376.1L883.0 374.7L882.2 373.2L881.6 371.8L881.0 370.4L880.7 369.1L880.6 367.9L880.6 366.9L880.9 366.1L881.4 365.5L882.0 365.2L882.7 365.2L883.5 365.4L884.5 366.0L885.5 366.7L886.6 367.7L887.7 368.8L888.7 370.0L889.6 371.4M890.1 371.2L891.1 372.5L891.8 373.8L892.2 375.1L892.4 376.5L892.7 378.0L892.9 379.4L893.0 380.6L892.8 381.5L892.2 382.0L891.3 382.2L890.3 382.1L889.3 381.7L888.5 381.3L887.7 380.7L886.7 380.0L885.5 379.0L884.2 377.9L883.1 376.4L882.3 374.8L881.8 373.1L881.5 371.5L881.3 370.1L881.0 369.0L880.8 368.1L880.9 367.3L881.3 366.7L882.1 366.2L883.1 365.8L884.1 365.7L885.0 365.9L885.8 366.5L886.7 367.5L887.8 368.7L889.0 370.1L890.3 371.5M883.7 373.0L884.6 371.3L885.4 369.7M888.6 377.2L888.8 378.8L887.3 379.8M883.1 373.2L881.7 373.0L881.1 371.8M900.5 383.8L900.6 383.9M899.3 381.4L899.4 381.5M901.6 382.5L901.5 383.1L901.4 383.7M855.4 379.2L857.1 379.8L858.9 379.5M847.4 380.2L848.6 379.0L850.3 379.0M845.9 377.6L844.4 377.2M850.6 384.6L851.1 383.7M860.7 387.9L859.8 389.3L858.2 389.2M856.5 386.1L855.5 385.9L854.7 385.3M866.9 396.3L867.1 397.7M867.0 383.9L868.8 384.2L870.6 384.8L872.2 385.6M868.4 388.7L868.4 387.3L867.9 386.1M866.1 393.4L865.9 391.6L866.9 390.1L868.6 389.6M874.0 386.5L873.3 385.3L872.9 383.9L873.1 382.5L873.6 381.2M871.3 386.1L872.5 385.4L873.3 384.2M880.0 389.8L881.1 388.6L882.8 388.4M868.3 394.7L867.7 393.0L867.4 391.2L867.5 389.4M878.2 395.5L878.9 396.3L879.1 397.3M875.5 387.3L874.1 387.4L872.9 388.2L872.3 389.5M872.7 397.4L871.8 396.6L870.9 395.9M880.9 391.7L881.6 390.5L882.9 389.7L884.3 389.5L885.7 390.1M883.8 395.7L882.2 396.1L880.9 395.1M879.6 394.1L878.3 393.7L877.2 393.2M878.1 398.0L877.1 399.3L876.6 400.9L876.8 402.6M879.8 393.0L879.7 391.7L878.8 390.9M900.3 407.9L899.3 409.1L899.4 410.6M885.0 406.5L883.2 406.5M890.5 404.6L891.8 405.4L893.4 406.0L895.0 406.2M881.5 399.9L879.9 399.8L878.6 399.0L877.8 397.7M900.7 401.7L902.4 402.3L903.1 403.9L902.5 405.6M883.7 401.7L885.7 401.5L887.7 401.6M887.0 397.2L886.2 398.2L886.8 399.3M884.4 405.7L885.4 406.9L887.0 407.0L888.2 405.9M902.1 408.6L900.5 409.1L898.9 408.2M898.3 408.6L899.3 410.3L898.4 412.1M882.8 398.2L883.9 398.8L885.0 399.3M896.2 409.0L897.5 409.5L898.9 409.8L900.3 409.9L901.8 409.8M896.6 404.5L895.4 406.1L893.4 406.4M887.9 399.3L888.1 397.7L887.5 396.2L886.3 395.0M884.7 406.4L884.3 404.5L882.7 403.4M919.0 394.5L919.1 395.4L919.0 396.4L918.5 397.2L917.7 398.1L916.7 398.9L915.5 399.6L914.3 400.3L912.9 400.9L911.4 401.3L909.7 401.6L908.0 401.6L906.3 401.5L904.8 401.2L903.4 400.8L902.2 400.3L901.1 399.7L900.2 399.1L899.5 398.3L899.0 397.4L898.8 396.4L899.0 395.4L899.4 394.4L900.1 393.4L901.0 392.6L902.0 391.9L903.1 391.3L904.5 390.7L906.1 390.3L907.8 390.0L909.5 389.8L911.1 389.7L912.6 389.9L914.0 390.2L915.3 390.8L916.5 391.4L917.6 392.2L918.4 393.0L918.9 393.8L919.0 394.7M913.7 392.9L915.1 392.6L915.6 391.2M901.7 397.7L902.3 398.7L903.5 399.2M905.9 395.4L906.8 396.9L907.0 398.7M901.7 394.3L902.8 395.7L904.4 396.4M908.9 394.7L907.6 395.6L906.7 396.9M907.8 392.5L908.5 390.8L910.2 390.3M902.0 398.0L902.8 396.8L903.4 395.5M905.4 396.7L906.3 397.3L907.2 397.9M909.5 407.7L909.1 408.2L908.3 408.7L907.3 409.3L906.3 410.0L905.3 410.5L904.0 410.8L902.4 410.8L900.6 410.6L898.6 410.2L896.7 409.7L895.2 409.2L894.0 408.7L892.9 408.3L891.9 407.8L890.9 407.2L890.2 406.5L889.8 405.6L890.0 404.7L890.7 403.9L891.6 403.3L892.6 402.9L893.7 402.8L894.8 402.7L896.2 402.7L898.0 402.7L900.0 402.7L901.9 402.8L903.6 403.1L904.9 403.5L906.0 404.2L907.0 405.0L908.0 405.9L908.9 406.8L909.4 407.5L909.5 408.0M930.7 410.6L930.6 412.1L932.0 412.8M914.3 409.2L915.3 409.5L916.2 409.1M914.1 406.2L914.0 404.4L914.9 402.9L916.4 402.2M923.0 409.5L924.8 409.3L925.7 410.8M918.0 406.9L917.9 405.9L918.0 404.9M915.7 412.1L916.9 412.8L917.6 414.1L917.7 415.5L917.0 416.8M912.0 411.8L911.3 411.0L911.7 409.9M918.0 407.5L917.0 406.8L916.1 406.1M821.3 296.7L821.4 296.8M824.5 312.8L823.9 313.9L822.8 314.4M822.4 300.5L821.2 301.2L820.6 302.6M827.2 351.2L827.3 351.3M832.4 355.6L832.5 355.7M845.3 243.1L845.4 243.2M902.9 346.3L903.0 346.4M898.0 348.5L898.1 348.6M895.8 349.3L895.6 350.2L894.8 350.7M905.4 347.5L904.7 348.4L903.7 348.9M900.8 352.6L901.6 352.5L902.1 353.2M976.5 298.0L977.6 298.6L978.3 299.8M955.4 299.5L956.1 300.5L956.3 301.7M958.7 301.2L959.1 302.5L959.0 303.8M989.0 246.5L987.5 246.7L986.1 247.0M986.7 252.6L986.8 252.7M984.3 247.7L985.4 248.7L986.5 249.8" stroke-width="1.6"/><path d="M878.3 223.6L879.3 222.5L880.3 221.3L881.0 220.0L881.6 218.6M882.5 219.7L884.0 218.7L885.7 217.9M884.1 225.4L885.5 223.9L885.9 221.8M848.0 253.1L848.1 254.6L848.2 256.2M848.6 247.4L847.9 248.8L847.3 250.2L846.6 251.6M853.7 244.5L853.5 246.5L854.0 248.5M848.5 253.4L847.9 254.9L847.1 256.2L846.2 257.5M836.4 277.2L836.8 275.6L837.1 274.1L837.6 272.6L838.1 271.3L838.7 270.0L839.3 268.8L839.9 267.7L840.6 266.7L841.3 265.9M845.2 307.4L845.0 308.9L844.7 310.4L844.4 311.7L843.9 312.9L843.3 314.0L842.6 314.9L842.0 315.7L841.3 316.4L840.6 316.8L839.9 317.1L839.2 317.2L838.5 317.0L837.8 316.6L837.1 316.0L836.6 315.3L836.1 314.4L835.7 313.3L835.4 312.2L835.0 310.9L834.8 309.6L834.7 308.1L834.8 306.6L834.9 305.0L835.2 303.5L835.4 302.1L835.8 300.7L836.2 299.5L836.7 298.4L837.3 297.3L838.0 296.4L838.7 295.7L839.4 295.2L840.1 294.8L840.7 294.7L841.4 294.8L842.2 295.1L842.9 295.6L843.5 296.2L844.0 297.1L844.4 298.0L844.8 299.1L845.1 300.3L845.3 301.7L845.5 303.1L845.5 304.7L845.5 306.2M853.3 267.8L851.7 267.3L850.7 266.0L850.7 264.4L851.6 263.0L853.2 262.3L854.7 262.7M821.3 294.2L821.4 294.3M820.3 301.2L821.0 301.3L821.1 302.0M836.0 257.7L835.4 258.6L835.5 259.6M914.0 204.1L914.1 204.2M907.6 205.5L907.7 205.6M911.3 231.0L911.4 231.1M915.5 231.2L915.3 232.2L914.3 232.6M876.2 230.6L875.6 232.1L874.2 232.8M899.6 212.6L899.7 212.7M899.0 213.0L899.1 213.1M899.2 214.7L899.3 214.8M926.0 215.2L925.5 216.5L925.5 218.0L926.1 219.4L927.2 220.4M926.9 213.0L926.5 215.0L924.7 216.1M928.4 207.8L926.8 207.3L925.7 206.2M926.9 213.8L925.7 214.8L924.4 215.7M930.0 212.6L930.9 211.4L932.3 210.7L933.8 210.9M935.1 214.3L936.5 214.0L937.9 213.4L939.0 212.5M932.6 208.7L934.0 207.9L935.5 207.1L937.1 206.5M927.4 213.3L925.9 213.9L924.4 213.5L923.5 212.1M932.4 208.3L931.1 209.5L929.3 209.6L927.8 208.6M937.2 214.2L937.3 212.6L938.2 211.3M945.3 219.8L945.4 219.9M936.9 222.4L937.0 222.5M960.9 216.9L959.5 217.6L958.0 217.6M947.1 206.5L947.0 207.3L946.2 207.6M942.9 224.0L942.4 224.6L942.7 225.3M946.4 216.5L946.5 216.6M940.1 211.6L940.2 211.7M942.3 228.0L943.0 227.0L944.2 226.2L945.6 225.8L947.3 225.9L948.9 226.4L950.4 227.2L951.6 228.3L952.4 229.6L952.6 230.9L952.3 232.0L951.4 232.9L950.1 233.5M944.3 237.1L944.3 237.9L944.1 238.6M946.9 234.9L947.0 235.0M941.8 232.3L941.9 232.4M935.4 234.8L935.5 234.9M934.1 232.8L934.1 234.0L935.2 234.4M941.6 238.6L942.9 238.7L944.1 239.2M982.8 231.5L982.1 232.5L981.8 233.3L981.1 234.2M977.8 222.1L977.3 223.5L976.9 224.6L976.2 226.0M968.4 227.7L968.1 229.0M970.6 220.2L970.2 221.8L969.6 222.6L968.9 224.0L968.5 225.7L968.1 227.0M983.8 231.1L983.3 231.6L982.4 232.1L981.3 232.5L980.2 232.7L979.0 232.8L977.7 232.6L976.2 232.1L974.6 231.4L973.0 230.4L971.5 229.4L970.5 228.4L969.8 227.5L969.4 226.7L969.1 225.9L969.0 225.2L969.1 224.5L969.5 223.8L970.5 223.2L971.8 222.9L973.3 222.9L974.7 223.2L976.1 223.7L977.4 224.5L978.7 225.3L980.2 226.1L981.5 226.9L982.7 227.7L983.4 228.6L983.7 229.5L983.6 230.5L983.2 231.4M994.8 222.0L994.0 223.1M995.2 227.8L993.7 227.9L992.3 228.0L990.9 228.2L989.4 228.4M1000.1 228.0L999.2 226.9L998.2 225.8L997.3 224.7L996.3 223.6M993.7 233.3L995.2 233.6L996.4 234.5L997.1 235.8M979.4 214.0L979.0 215.6L980.2 216.9M974.6 211.7L975.9 212.7L977.4 213.4M966.1 237.5L966.2 237.6M995.6 245.6L995.9 247.6L996.6 249.4M1004.4 245.1L1005.5 244.3L1006.2 243.2M1010.2 246.7L1009.1 245.8L1007.8 245.4L1006.4 245.5L1005.1 246.1M1004.1 232.7L1004.7 230.9L1004.6 229.1L1003.6 227.5M998.5 239.1L997.6 237.9L996.4 236.9L994.9 236.4M1005.1 243.6L1005.1 245.2L1004.0 246.2M1008.4 238.0L1006.9 239.2L1005.5 240.3M1009.3 245.5L1007.8 245.5L1006.5 246.2L1005.8 247.5M1013.6 239.1L1012.2 239.4L1010.8 239.6M1005.8 236.5L1004.6 237.6L1004.4 239.3L1005.3 240.6M1005.1 241.8L1005.3 242.8L1004.4 243.5M1013.3 247.4L1014.0 246.1L1014.0 244.7L1013.3 243.4M1011.7 248.9L1012.2 249.8L1011.7 250.8M1017.9 249.7L1016.7 249.2L1015.6 248.6M1017.7 247.5L1016.1 247.6L1015.0 248.8M1017.7 249.0L1018.1 248.0L1017.4 247.4M1016.1 249.6L1014.6 250.6L1012.9 250.6M1030.7 284.0L1029.8 285.3L1030.1 286.7L1031.4 287.6M1032.8 280.2L1032.8 278.7L1032.5 277.3L1031.8 276.0L1030.8 274.9M1033.1 284.2L1034.6 283.3L1036.1 282.3M1027.9 272.7L1026.5 271.7L1024.8 271.4M1030.2 283.6L1030.9 282.3L1031.0 280.9M996.6 235.8L996.3 234.2L996.3 232.7L996.5 231.2L996.9 229.8L997.5 228.7L998.3 227.9L999.3 227.3L1000.5 227.0L1001.9 227.0L1003.2 227.4M1009.2 232.7L1010.0 234.3L1010.5 236.0L1010.8 237.6L1010.9 239.2L1010.7 240.7M1006.8 281.4L1005.4 280.9L1004.2 280.2L1003.2 279.4L1002.2 278.4L1001.3 277.1L1000.3 275.7L999.4 274.3L998.7 272.7L998.2 271.2L997.9 269.7L997.8 268.1L997.7 266.6L997.6 264.9L997.7 263.2L997.9 261.5L998.4 259.8L999.1 258.2L999.9 256.8L1000.8 255.5L1001.6 254.4L1002.5 253.3L1003.5 252.4L1004.8 251.5L1006.2 250.7L1007.6 250.0L1009.0 249.6L1010.3 249.4L1011.5 249.4M1013.1 250.0L1014.5 250.4L1016.0 251.0L1017.5 251.7L1019.0 252.5L1020.2 253.4L1021.3 254.4L1022.3 255.4L1023.1 256.7L1023.9 258.0L1024.7 259.5L1025.3 261.1L1025.7 262.8L1025.8 264.4L1025.7 265.9L1025.6 267.4L1025.3 268.9L1025.0 270.4L1024.5 271.8L1023.8 273.3L1022.9 274.7L1021.8 276.0L1020.6 277.2L1019.5 278.1L1018.3 278.9L1017.0 279.5L1015.6 280.1L1014.0 280.5L1012.4 280.8L1010.8 281.0M1023.3 261.1L1023.9 262.5L1024.2 264.0L1024.4 265.0M1021.7 260.1L1021.9 261.8L1022.3 262.6L1022.5 264.1M1023.5 265.7L1023.5 266.3L1024.2 267.9L1024.3 268.6M1017.7 265.1L1018.1 266.7L1018.6 267.7L1018.9 269.1L1019.2 270.8L1019.4 272.2L1019.8 273.3M1016.8 269.7L1017.1 271.3L1017.8 272.5L1018.0 273.8L1018.6 275.1L1018.9 276.0L1019.0 277.2M1012.1 259.8L1012.2 261.3L1012.8 262.4L1013.2 263.5M1009.3 258.1L1009.8 259.3L1009.9 260.9L1010.5 262.5L1010.6 264.0L1011.5 265.2M1008.4 271.7L1008.4 273.1L1008.8 274.5L1009.4 275.8L1009.7 277.1M1006.4 290.0L1006.4 291.7L1006.0 293.3L1005.1 294.7L1003.9 295.7L1002.5 296.3L1000.9 296.6L999.5 296.5L998.2 295.9L997.1 294.9L996.2 293.6L995.6 291.9L995.3 290.2L995.5 288.4L996.1 286.8L997.2 285.4L998.5 284.5L999.9 284.0L1001.3 284.0L1002.7 284.3L1004.0 285.1L1005.1 286.2L1006.0 287.6L1006.5 289.2L1006.6 290.9M994.6 281.7L994.7 281.8M993.9 271.1L993.4 272.0L992.4 272.7M993.6 272.6L993.5 273.5L993.7 274.4M994.4 262.3L995.6 262.7L996.7 263.4M1003.5 298.1L1004.5 296.8L1005.5 295.5L1006.5 294.3L1007.6 293.0L1008.6 291.8L1009.7 290.6M1013.6 292.6L1014.6 291.5L1015.5 290.3L1016.4 289.1L1017.2 287.9L1018.0 286.6L1018.7 285.3L1019.4 284.0L1020.1 282.7M1018.4 299.5L1019.3 298.3L1020.2 297.1L1021.1 295.9L1021.9 294.6M1003.0 314.6L1004.0 313.7L1005.1 312.7L1006.3 311.9L1007.4 311.1L1008.6 310.3M1003.8 311.4L1004.6 310.1L1005.5 308.9L1006.2 307.5L1006.9 306.2L1007.6 304.8L1008.2 303.4L1008.8 302.0M1036.3 316.1L1035.9 314.8L1036.9 313.9M1027.6 308.7L1029.0 308.9L1030.3 308.3L1031.2 307.2L1031.4 305.8M1033.8 310.9L1033.2 312.5L1032.9 314.1L1032.9 315.8L1033.2 317.4M1037.0 292.7L1037.5 294.0L1038.3 295.2L1039.5 296.0M1039.0 312.0L1040.5 312.7L1042.1 312.8L1043.6 312.4M1028.0 297.9L1028.1 296.1L1028.7 294.5L1029.7 293.1L1031.1 292.0M1038.7 318.3L1039.9 318.7L1040.0 320.1M1032.9 306.2L1032.7 304.2L1030.9 303.4M1025.7 307.8L1024.2 308.9L1022.4 309.3L1020.6 309.1M1041.0 310.5L1041.1 312.2L1042.2 313.5M1035.8 290.9L1037.6 290.2L1039.0 289.0M1036.5 305.5L1035.7 307.0L1035.4 308.6L1035.8 310.3M1020.6 297.3L1021.4 298.6L1021.8 299.9L1022.0 301.4L1021.7 302.8M1021.9 293.5L1022.5 295.2L1021.7 296.8M1020.0 287.7L1021.4 286.7L1021.7 284.9L1020.8 283.5M1027.2 294.6L1026.1 295.0L1025.2 295.6M1027.3 287.3L1025.7 288.0L1024.4 286.9M1024.4 286.7L1023.9 285.4L1023.4 284.1M1023.9 290.6L1022.4 290.8L1021.3 292.0L1021.4 293.5M1025.4 292.1L1024.5 291.3L1023.3 291.3M1024.3 323.2L1022.4 323.4L1020.5 322.9M1026.1 326.4L1027.0 327.7L1027.3 329.3L1026.8 330.8L1025.6 331.9M1028.3 312.7L1029.7 313.1L1031.1 313.4L1032.6 313.8L1034.0 314.1M1016.6 312.6L1015.3 311.6L1014.7 310.1L1014.7 308.5M1025.9 317.3L1026.1 315.7L1026.4 314.1L1026.6 312.5L1026.9 311.0M991.8 308.3L991.9 308.4M992.0 302.8L992.8 303.4L993.3 304.3M995.8 306.0L995.9 306.1M990.6 303.1L990.7 303.2M993.5 308.5L993.6 308.6M947.9 316.2L947.9 318.1L947.8 319.9L947.4 321.5L946.6 322.8L945.5 324.0L944.1 325.2L942.8 326.3L941.6 327.3L940.4 328.2L939.0 328.9L937.4 329.2L935.6 329.2L933.7 328.8L932.1 328.2L930.8 327.4L929.7 326.5L928.5 325.6L927.4 324.5L926.2 323.3L925.1 321.9L924.5 320.2L924.2 318.3L924.3 316.4L924.5 314.5L924.7 312.8L924.9 311.2L925.3 309.8L926.1 308.5L927.3 307.2L928.7 305.9L930.1 304.7L931.5 303.7L932.8 303.0L934.1 302.6L935.6 302.6L937.4 302.9L939.2 303.4L940.9 304.0L942.3 304.6L943.4 305.4L944.4 306.4L945.4 307.5L946.5 309.0L947.4 310.7L948.1 312.6L948.3 314.5L948.2 316.3M946.0 315.7L946.2 316.9M943.6 313.8L944.0 315.3L944.8 316.0L944.8 317.1M945.3 318.7L945.8 319.9M944.1 318.5L944.5 319.9L944.7 320.8M938.6 305.3L939.0 306.4L939.6 308.1M939.7 309.3L939.8 310.6L940.7 311.9L940.6 313.3L941.1 314.3L941.6 315.4L942.1 316.8M937.7 309.3L938.7 310.5L939.1 311.9L939.5 313.3L939.9 314.8M935.9 316.6L936.4 318.3L936.8 319.2L937.0 321.0L938.0 322.1M929.8 306.1L930.2 307.1L930.9 308.3L931.4 309.7M929.0 312.8L930.0 313.9L930.4 315.0L930.5 316.4L931.2 318.1L931.6 319.5M930.9 318.7L931.0 320.3L931.7 321.5L932.1 322.9L932.9 324.0M928.2 316.9L928.5 317.9L928.8 318.9L928.9 319.6M924.0 315.4L924.1 316.8M924.5 318.2L924.9 319.3M943.3 314.8L943.3 316.7L943.3 318.5L943.1 320.1L942.4 321.3L941.1 322.2L939.5 322.8L937.7 323.3L936.1 323.6L934.7 323.7L933.5 323.7L932.2 323.3L930.8 322.6L929.3 321.3L928.1 319.7L927.5 318.0L927.5 316.2L928.0 314.6L928.5 313.3L929.1 312.1L929.7 311.1L930.6 310.2L931.9 309.3L933.7 308.5L935.7 308.0L937.5 307.9L938.9 308.4L940.0 309.3L940.9 310.6L941.9 312.0L943.0 313.5L943.8 314.9L944.1 316.3M980.0 328.5L979.7 330.2L979.2 331.8L978.5 333.3L977.5 334.7L976.4 336.0L975.1 337.1L973.8 337.9L972.4 338.6L970.9 338.9L969.3 339.0L967.6 338.8L966.1 338.4L964.7 337.7L963.4 336.8L962.2 335.7L961.2 334.4L960.3 333.0L959.6 331.4L959.1 329.8L958.9 328.0L958.9 326.2L959.2 324.4L959.7 322.8L960.4 321.2L961.2 319.9L962.2 318.6L963.5 317.5L964.9 316.7L966.4 316.0L967.9 315.5L969.4 315.4L971.0 315.5L972.5 315.9L973.9 316.6L975.4 317.5L976.6 318.6L977.7 319.8L978.6 321.2L979.2 322.7L979.7 324.4L979.9 326.1L980.0 327.9M977.3 321.1L977.9 322.2L978.4 322.8M972.4 318.0L973.3 318.9L973.7 319.9M977.7 328.2L978.3 328.7M967.4 317.9L968.4 319.5L969.0 320.8L969.9 322.0L970.5 323.2M971.8 329.8L972.2 331.0L973.3 332.1L973.7 333.2L974.6 334.4M970.6 333.9L971.3 335.3L972.1 336.9M962.1 323.9L962.8 324.6M967.2 331.8L967.6 333.4L968.2 334.4L968.8 335.3L969.4 336.5M961.5 325.9L962.6 327.7L963.3 328.4L963.8 329.6L964.4 331.2L965.4 331.9M1003.7 327.5L1004.1 329.2L1004.2 330.5L1004.2 331.2L1004.4 332.9L1004.8 333.6M1001.2 323.2L1001.6 324.7L1001.7 325.7L1002.4 327.4M1002.4 336.0L1002.7 337.4L1002.5 338.5M1002.7 339.3L1002.8 340.4M1000.0 340.7L1000.1 342.1M998.3 336.7L998.5 337.6L998.8 338.8L999.2 340.0L999.5 341.1M989.7 329.7L989.6 331.0L990.1 332.2L990.1 333.9L990.3 334.8L990.6 336.1M948.8 342.1L947.3 342.6L945.6 342.4L943.9 341.6L942.6 340.3L941.9 338.8L942.1 337.3L943.0 336.2M962.5 336.7L963.9 338.1L964.1 340.1L963.0 341.8L961.2 342.6L959.3 342.2M955.9 318.2L956.7 318.7L957.5 318.2M953.1 347.8L951.7 348.4L950.6 349.3M949.6 347.7L950.1 348.5L949.4 349.1M944.8 344.4L944.7 345.0L944.2 345.2M992.2 315.6L993.3 314.6L994.3 313.4L995.0 312.1M992.2 316.5L993.1 315.3L993.9 314.0M990.9 317.2L991.9 316.1L992.8 315.0L993.6 313.8M994.2 318.4L995.3 317.5L996.3 316.5L997.3 315.5L998.1 314.3M1016.2 339.8L1014.7 340.6L1013.0 340.6L1011.4 339.8L1010.5 338.4M1030.6 329.8L1029.1 329.7L1027.6 329.3L1026.2 328.5L1025.2 327.4M1036.1 332.7L1037.5 333.8L1038.5 335.3L1039.0 336.9L1039.1 338.7M1036.8 342.9L1035.6 342.1L1034.8 341.0L1034.3 339.6L1034.3 338.2M1024.2 339.5L1025.2 339.6L1025.7 338.8M1034.8 337.9L1034.7 336.7L1033.8 335.9M1030.3 349.0L1032.0 349.0L1033.5 348.1L1034.4 346.5M1032.5 343.4L1033.5 344.5L1034.8 345.3L1036.2 345.8M1027.5 328.0L1027.9 327.1L1027.1 326.3M1025.4 348.2L1026.1 346.8L1027.1 345.5L1028.3 344.5L1029.7 343.8M1020.3 348.0L1020.0 346.5L1020.2 344.9L1020.8 343.4M1023.8 329.8L1024.7 329.2L1024.7 328.1M1019.9 334.6L1020.4 335.8L1020.6 337.0M1031.7 332.5L1031.5 334.2L1031.6 336.0L1031.8 337.7M1030.3 327.6L1031.3 328.4L1032.5 328.4M1031.6 349.1L1031.6 350.7L1030.5 351.8L1028.9 351.7M1036.4 339.3L1035.2 339.7L1034.3 340.6M1027.5 342.4L1027.1 344.1L1027.5 345.8L1028.6 347.1L1030.2 347.9M1020.5 346.9L1019.9 348.4L1018.7 349.4L1017.2 350.0M1020.7 340.1L1020.4 341.6L1020.8 343.1L1021.8 344.2M1033.7 334.6L1032.3 333.7L1031.7 332.3M1027.0 335.4L1028.5 335.1L1029.8 334.4L1030.7 333.2L1031.3 331.9M1031.4 344.4L1029.7 344.3L1029.0 342.8M1032.2 330.7L1032.3 329.3L1033.4 328.5M1005.6 364.9L1004.6 366.0L1004.3 367.5L1004.9 369.0L1006.1 369.9M1015.3 352.8L1015.5 354.5L1015.1 356.2M1006.3 365.4L1005.8 366.8L1006.5 368.1M1019.9 365.7L1020.3 364.2L1019.7 362.8L1018.5 362.0M1016.8 350.4L1016.1 351.5L1015.9 352.9L1016.5 354.2M1004.5 365.2L1003.1 365.9L1001.7 366.4L1000.2 366.9L998.7 367.2M1013.6 368.2L1012.5 369.5L1011.8 371.0L1011.6 372.8L1011.9 374.4M1012.3 349.7L1013.1 348.2L1013.1 346.5L1012.3 344.9L1010.9 343.9M1019.4 357.4L1018.5 359.0L1016.9 360.1M1020.5 358.3L1020.0 359.5L1019.9 360.7M1011.2 350.8L1010.1 349.9L1009.2 348.9M1022.8 357.9L1023.7 359.3L1024.7 360.6M1003.3 365.6L1002.9 364.1L1003.6 362.7L1005.1 362.2M1010.2 356.4L1009.4 355.4L1008.5 354.5M1007.8 348.6L1008.9 348.1L1008.9 346.9M1004.0 355.2L1004.6 356.9L1005.7 358.3M1005.9 367.9L1004.6 368.6L1003.1 368.7L1001.7 368.1L1000.8 366.9M1023.0 354.6L1023.8 353.6L1023.5 352.3M1008.5 357.9L1010.2 357.5L1011.9 357.7L1013.4 358.5L1014.6 359.7M1004.5 361.2L1004.2 362.2L1003.1 362.4M1005.8 369.0L1004.4 370.3L1002.4 370.2M1014.8 357.6L1016.3 358.0L1017.4 359.3L1017.4 360.9M997.9 381.9L998.8 380.4L1000.2 379.3L1002.0 378.9M998.3 382.3L997.3 382.5L996.7 381.6M1007.8 378.3L1009.7 378.7L1011.4 377.7M999.5 374.5L999.1 372.7L997.6 371.7L995.8 372.0M1001.7 377.1L1003.1 377.8L1004.7 378.1L1006.3 377.9L1007.8 377.3M1006.6 372.3L1007.2 373.5L1008.2 374.3M991.1 382.1L989.4 381.4L988.9 379.6M1019.6 363.1L1018.1 363.2L1016.8 364.0L1016.2 365.3M1020.7 358.7L1022.5 358.9L1024.2 358.2M1019.4 363.8L1019.0 365.3L1019.6 366.8L1021.0 367.6M1019.4 370.2L1020.2 371.8L1021.8 372.5M1013.6 363.6L1014.5 362.4L1016.0 362.6M1023.9 366.1L1024.9 365.0L1025.8 364.0L1026.8 363.0L1027.9 362.0M1033.6 319.1L1033.8 317.5L1035.4 317.1M1034.7 325.3L1035.6 326.8L1036.1 328.5L1036.1 330.2M1040.5 323.1L1041.0 321.7L1041.6 320.3L1042.2 319.0L1042.9 317.7M1036.2 324.9L1036.1 323.5L1034.7 322.9M1031.9 323.2L1033.0 323.8L1033.2 325.0M1037.3 328.2L1039.0 327.8L1040.6 326.8M1034.8 317.6L1034.2 316.1L1032.5 315.9M1039.1 323.0L1039.5 321.5L1039.6 319.9M968.1 354.4L968.3 355.7L968.1 357.1L967.7 358.6L967.1 360.1L966.3 361.4L965.3 362.6L963.9 363.4L962.3 363.8L960.5 364.0L958.8 363.9L957.4 363.6L956.1 363.2L955.0 362.5L954.1 361.6L953.2 360.4L952.6 359.0L952.4 357.5L952.7 356.0L953.5 354.5L954.4 353.2L955.5 352.1L956.7 351.3L958.0 350.8L959.5 350.4L961.2 350.3L962.9 350.3L964.5 350.6L965.8 351.2L966.7 352.2L967.4 353.4L967.9 354.8M961.0 350.8L962.4 349.9L964.0 349.5L965.6 349.5M953.5 357.1L954.7 358.1L956.3 358.3L957.7 357.6M965.1 356.0L966.8 355.2L968.2 356.3M954.2 357.1L955.6 355.7L955.4 353.8M964.7 358.8L963.7 358.3L963.2 357.2M959.4 361.3L960.6 361.8L961.6 362.6M973.9 348.5L973.7 349.7L972.9 350.9L971.7 351.9L970.2 352.5L968.7 352.8L967.2 352.7L966.0 352.0L964.9 351.0L964.2 349.6L964.0 348.1L964.4 346.7L965.4 345.6L966.9 344.8L968.5 344.5L970.1 344.7L971.4 345.3L972.5 346.1L973.3 347.2L973.7 348.5M966.9 364.0L965.6 364.7L964.1 364.7M994.6 362.1L994.1 363.8L993.8 365.5L993.5 367.1L992.9 368.4L991.9 369.4L990.4 370.0L988.6 370.4L986.8 370.8L985.3 371.2L984.1 371.5L982.8 371.7L981.3 371.6L979.5 371.2L977.7 370.3L976.2 369.0L975.2 367.6L974.7 366.2L974.4 364.9L974.0 363.8L973.6 362.6L973.3 361.4L973.4 360.1L974.1 358.6L975.2 357.0L976.6 355.6L977.9 354.4L979.0 353.6L980.1 353.2L981.4 353.2L983.1 353.2L985.2 353.3L987.1 353.4L988.8 353.6L989.9 354.0L990.9 354.7L991.8 355.8L992.8 357.2L994.0 358.8L994.8 360.4L995.2 361.9M989.8 360.2L990.4 361.6L991.0 362.9L991.1 364.7L991.7 365.7L992.1 367.2M990.3 367.2L990.5 368.5M983.5 352.6L983.9 353.9L984.1 355.6L984.4 356.4M987.0 367.4L987.1 368.3L987.6 369.7M982.0 353.5L982.5 354.7L982.8 356.4L983.1 357.8M983.2 358.6L983.4 359.7L983.5 360.9M984.7 368.7L985.4 369.9M978.7 354.5L979.0 355.5L979.0 356.9L979.7 358.8M979.9 358.9L980.0 360.4L980.7 361.5L980.9 363.1L981.0 364.3M978.6 366.5L978.8 367.5L979.5 369.2M993.2 349.3L992.3 348.8L991.4 349.4M999.1 347.2L1000.9 347.0L1002.2 345.8L1002.7 344.1M996.2 347.9L994.2 348.3L992.4 349.0M1000.8 346.8L1000.9 348.4L1001.3 349.9M992.7 347.5L994.6 347.3L996.2 346.6M991.5 383.9L991.9 384.7L991.9 385.5L991.7 386.2L991.2 387.1L990.6 388.0L990.0 388.9L989.2 389.8L988.2 390.7L987.1 391.5L985.7 392.1L984.2 392.6L982.7 393.0L981.2 393.4L979.7 393.7L978.3 394.0L976.7 394.2L975.1 394.3L973.6 394.2L972.2 393.9L970.9 393.5L969.9 393.0L969.0 392.5L968.2 391.9L967.5 391.3L966.9 390.6L966.6 389.9L966.6 389.1L966.8 388.1L967.2 387.2L967.7 386.2L968.3 385.3L969.0 384.5L970.0 383.7L971.2 383.1L972.6 382.4L974.0 381.8L975.5 381.3L976.9 380.7L978.4 380.3L979.9 380.0L981.5 379.9L983.1 380.0L984.7 380.1L986.1 380.4L987.2 380.7L988.3 381.1L989.2 381.5L990.1 382.0L990.9 382.6L991.5 383.4L991.8 384.2M990.7 384.9L990.8 385.8L990.7 386.7L990.4 387.6L990.0 388.4L989.3 389.2L988.4 390.0L987.4 390.7L986.3 391.4L985.1 392.1L983.9 392.7L982.5 393.3L981.1 393.7L979.5 394.0L978.0 394.2L976.5 394.2L975.1 394.2L973.8 394.0L972.6 393.8L971.4 393.6L970.2 393.2L969.2 392.7L968.5 392.1L967.9 391.4L967.5 390.6L967.3 389.8L967.2 388.9L967.2 388.1L967.5 387.3L967.9 386.5L968.6 385.7L969.5 384.8L970.5 384.0L971.6 383.2L972.7 382.5L973.9 381.9L975.3 381.4L976.8 381.1L978.3 380.8L979.8 380.6L981.3 380.5L982.7 380.5L984.0 380.5L985.3 380.7L986.5 381.0L987.7 381.4L988.6 382.0L989.4 382.6L990.0 383.3L990.4 384.0L990.7 384.7M981.7 388.9L981.8 389.0M972.7 387.5L972.8 387.6M975.3 387.7L975.9 388.8L976.3 390.1M980.2 385.2L979.7 385.6L979.9 386.3M959.9 393.7L959.1 394.8L958.8 396.2M963.6 397.9L964.6 397.1L965.9 397.4M951.1 397.7L950.3 396.5L949.2 395.6L947.8 395.4M975.0 374.5L976.0 373.5L977.2 372.6L978.4 371.9M970.0 377.3L968.5 376.3L968.0 374.6L968.6 373.0M970.8 376.7L969.7 377.9L968.5 379.2M974.5 403.6L975.9 404.6L977.3 405.7L978.4 407.1M990.9 394.4L992.2 394.6L993.5 394.9M972.7 405.3L973.7 406.4L974.4 407.8L975.0 409.2M983.7 401.2L982.7 399.6L981.4 398.2M984.2 402.4L983.6 400.7L982.9 399.1L982.0 397.7L980.8 396.4M979.3 401.0L980.5 401.2L981.6 400.9M976.9 401.3L976.8 399.6L976.9 397.9M951.7 411.2L952.3 412.5L953.6 413.2L955.0 413.1L956.1 412.2M967.0 405.1L965.7 406.4L964.0 406.9M945.9 411.4L944.4 410.9L942.9 410.6L941.3 410.6L939.8 411.0M965.7 406.5L965.5 405.5L964.6 404.8M970.6 405.0L971.0 403.7L971.3 402.4M975.3 405.4L973.8 405.6L972.4 406.4L971.5 407.6L971.1 409.2M952.2 411.7L951.1 413.1L949.3 412.9M940.5 405.6L941.5 406.7L942.9 406.2M929.6 406.3L931.2 405.6L932.6 404.8L934.0 403.9L935.4 402.8M929.5 404.6L930.4 406.0L931.4 407.3L932.4 408.7L933.5 410.0M932.3 408.3L931.0 409.4L929.4 409.6L927.9 408.7M930.2 408.0L929.8 409.6L930.7 411.0L932.3 411.3M944.7 410.5L944.7 408.7L945.3 407.1L946.5 405.8M947.0 407.2L946.5 405.7L946.9 404.2M933.5 410.0L932.9 408.3L933.7 406.6L935.5 406.1M940.1 409.8L941.6 409.7L943.0 410.2M945.7 408.2L943.7 408.4L941.9 407.4M936.4 403.3L937.4 402.1L937.7 400.7L937.4 399.3L936.4 398.1M939.4 406.2L940.9 406.1L942.2 405.3L942.8 404.0M939.9 399.9L938.8 401.2L937.2 401.9L935.4 401.9M999.8 393.2L999.1 391.3L997.6 389.9M997.7 391.8L996.1 391.7L994.7 392.5M940.8 357.8L940.4 359.3L940.2 360.8L940.1 362.3L939.9 363.7L939.4 364.8L938.4 365.7L937.2 366.5L935.9 367.3L934.8 368.1L933.9 369.1L932.9 370.2L931.7 371.0L930.0 371.7L928.2 372.1L926.4 372.1L924.8 372.1L923.6 372.0L922.3 371.9L920.9 371.9L919.1 372.0L917.3 371.9L915.5 371.5L914.1 370.8L913.1 369.9L912.2 368.9L911.1 367.8L909.9 366.8L908.5 366.0L907.4 365.2L906.7 364.3L906.4 363.2L906.3 361.9L906.1 360.3L905.7 358.8L905.3 357.3L905.1 356.0L905.4 354.9L906.0 353.9L906.9 352.9L907.6 351.8L908.2 350.6L908.7 349.3L909.5 348.0L910.6 346.9L912.1 346.0L913.7 345.5L915.2 345.1L916.4 344.8L917.6 344.4L918.8 344.0L920.5 343.5L922.3 343.1L924.3 342.9L926.0 343.0L927.3 343.4L928.5 344.1L929.7 344.8L931.2 345.4L932.9 346.0L934.5 346.5L935.8 347.1L936.7 347.8L937.3 348.8L938.0 350.1L938.8 351.5L939.7 352.9L940.6 354.3L941.0 355.4L941.0 356.5L940.8 357.5M940.8 357.4L940.6 358.9L940.5 360.4L940.4 361.7L940.0 362.7L939.1 363.6L937.8 364.3L936.5 365.1L935.4 366.0L934.5 367.0L933.7 368.0L932.5 368.9L930.9 369.6L929.1 369.9L927.3 369.9L925.7 369.8L924.5 369.7L923.3 369.7L922.0 369.8L920.3 369.9L918.4 369.9L916.6 369.5L915.2 368.8L914.2 367.9L913.3 366.9L912.3 365.9L911.1 365.0L909.7 364.2L908.5 363.5L907.8 362.7L907.5 361.6L907.4 360.3L907.2 358.8L906.8 357.3L906.3 355.8L906.1 354.6L906.3 353.6L906.9 352.7L907.8 351.7L908.5 350.7L909.1 349.4L909.5 348.1L910.2 346.8L911.2 345.7L912.7 344.9L914.4 344.4L915.8 344.0L917.0 343.7L918.1 343.3L919.3 342.9L920.8 342.3L922.7 341.9L924.6 341.7L926.3 341.8L927.7 342.2L928.8 342.8L929.9 343.5L931.4 344.1L933.1 344.6L934.7 345.0L936.1 345.5L937.0 346.2L937.6 347.2L938.2 348.4L939.0 349.8L940.0 351.2L940.9 352.5L941.4 353.5L941.5 354.5M939.1 355.6L939.2 357.4L939.5 359.2L939.9 360.6L939.8 361.8L939.0 362.6L937.8 363.5L936.6 364.4L935.8 365.6L935.3 367.0L934.7 368.4L933.8 369.7L932.2 370.6L930.3 371.1L928.4 371.2L927.0 371.3L926.0 371.4L925.0 371.7L923.6 372.2L921.7 372.6L919.6 372.9L917.6 372.7L916.2 372.1L915.2 371.2L914.3 370.2L913.2 369.3L911.6 368.6L909.8 368.0L908.3 367.5L907.4 366.8L907.0 365.7L906.8 364.3L906.4 362.6L905.6 360.9L904.6 359.3L904.0 358.1L904.0 357.1L904.5 356.1L905.3 355.1L905.8 353.9L905.9 352.4L906.0 350.7L906.3 349.0L907.2 347.7L908.7 346.7L910.3 346.0L911.7 345.6L912.6 345.1L913.4 344.5L914.4 343.6L915.9 342.7L917.9 341.9L920.0 341.4L921.8 341.4L923.0 341.7L924.0 342.3L925.2 342.8L926.8 343.2L928.8 343.4L930.7 343.6L932.2 343.8L933.2 344.4L933.8 345.4L934.6 346.7L935.7 348.2L937.1 349.7L938.4 350.9L939.2 351.9L939.3 352.8L939.1 353.7L939.0 354.8M935.9 347.6L936.6 348.8M933.4 346.0L934.1 347.2L934.6 348.4L935.1 349.7M930.6 344.5L931.2 345.8L931.6 346.8L932.2 347.9L932.7 349.2M936.5 361.4L937.0 362.6L937.9 363.7M925.5 343.7L926.1 344.8L926.2 345.3M923.8 344.0L924.6 345.2L925.2 346.4M932.0 364.9L932.5 366.3L932.8 366.7L933.5 368.0M920.5 343.7L921.0 345.0M931.4 365.9L931.9 366.8L932.2 368.1M924.8 361.3L925.2 362.3L925.5 363.4L926.0 364.3L926.7 365.4M920.5 357.0L920.9 358.1L921.4 359.0L922.2 360.3M923.8 368.1L923.8 368.9L924.6 370.2L925.3 370.8M923.2 369.7L923.7 370.6M912.1 348.9L912.2 350.3M913.0 351.4L913.8 352.3L914.2 353.6L915.1 354.9L915.7 356.4L916.1 357.5L916.8 358.9M910.2 348.9L910.2 350.1L910.7 351.0M911.4 352.0L912.3 353.0L912.9 354.6L913.6 355.4L914.1 356.5M913.7 357.8L914.7 359.2L915.1 360.8L915.7 361.9L916.6 363.2M916.1 363.8L917.1 365.3L917.7 366.4L918.1 367.4L918.6 368.6L918.7 369.6M911.0 360.5L911.6 361.3L912.0 363.0L913.1 364.2L913.5 365.2M924.7 351.7L925.2 353.3L925.3 354.6L924.8 355.8L923.8 356.9L922.6 358.0L921.6 359.3L920.8 360.5L920.0 361.6L918.9 362.4L917.4 362.6L915.6 362.4L913.8 361.8L912.4 361.0L911.5 360.2L910.8 359.4L910.1 358.5L909.2 357.6L908.2 356.4L907.4 354.9L907.2 353.1L907.5 351.2L908.2 349.4L909.0 347.8L909.5 346.5L910.0 345.6L910.6 344.9L911.8 344.3L913.4 343.7L915.2 343.1L916.8 342.6L918.0 342.4L918.9 342.7L919.9 343.4L921.0 344.5L922.4 345.9L923.7 347.4L924.6 348.7L924.9 350.0L924.8 351.1L924.5 352.4M926.2 352.4L925.7 354.0L925.2 355.7L924.7 357.2L923.9 358.4L922.9 359.3L921.6 359.9L920.0 360.3L918.4 360.5L917.0 360.6L915.8 360.5L914.7 360.2L913.5 359.7L912.2 358.9L910.9 357.7L909.9 356.3L909.3 354.7L909.1 353.1L909.1 351.5L909.3 350.1L909.4 348.8L909.7 347.4L910.2 346.2L911.2 344.9L912.5 343.7L913.9 342.7L915.3 342.0L916.5 341.6L917.7 341.7L919.0 342.0L920.4 342.6L921.9 343.3L923.3 344.1L924.4 345.0L925.1 346.1L925.6 347.4L925.9 348.9L926.1 350.5M962.9 368.7L963.1 370.1L963.2 371.4L963.2 372.8L963.1 374.1L962.6 375.3L961.8 376.3L960.9 377.4L959.9 378.5L958.8 379.5L957.7 380.6L956.5 381.5L955.0 382.4L953.4 383.0L951.6 383.4L949.8 383.7L948.2 383.9L946.6 384.0L945.0 384.0L943.3 384.0L941.5 383.8L939.7 383.5L938.1 383.0L936.7 382.3L935.5 381.4L934.4 380.4L933.3 379.4L932.2 378.4L931.3 377.4L930.6 376.4L930.2 375.3L930.1 374.0L930.2 372.7L930.2 371.3L930.4 369.9L930.7 368.6L931.2 367.4L932.1 366.4L933.2 365.4L934.4 364.4L935.6 363.5L936.8 362.5L938.2 361.6L939.6 360.9L941.3 360.3L943.2 360.0L945.0 359.8L946.7 359.8L948.3 359.8L949.9 360.0L951.5 360.1L953.2 360.4L954.9 360.8L956.5 361.4L957.9 362.2L959.0 363.1L959.9 364.2L960.8 365.3L961.7 366.4L962.5 367.4L963.1 368.5L963.4 369.7M954.3 362.7L954.9 363.5L955.5 365.3L956.2 366.1M951.4 362.6L951.8 363.6L952.6 365.1L952.9 365.9M948.2 361.8L949.2 363.1M953.4 370.8L954.1 372.1L954.5 373.2L955.0 374.2M955.4 374.9L956.2 376.3L957.0 377.4L957.3 378.5M945.5 361.4L946.0 362.3L946.8 363.4M950.0 371.1L951.1 372.0L951.2 373.0L952.1 374.6L953.0 375.7L953.1 376.8L953.8 377.5M943.6 371.3L944.3 372.1L944.9 373.1L945.6 374.0M938.4 365.0L938.9 366.3M939.7 367.3L940.5 368.8L940.9 369.9L942.1 371.6L942.4 372.7L943.4 374.0M937.0 370.0L937.6 371.1L938.3 372.6L938.6 374.0L939.4 374.7M939.7 375.0L940.5 376.4L940.9 377.0L941.6 378.7L942.0 379.5L942.4 380.5L943.5 381.8M946.0 380.0L945.7 381.2L945.4 382.4L945.1 383.5L944.5 384.4L943.6 385.1L942.4 385.7L941.0 386.1L939.6 386.6L938.2 387.1L937.0 387.5L935.6 387.8L933.9 388.0L932.1 387.9L930.2 387.6L928.5 387.1L927.0 386.5L925.7 385.8L924.4 385.2L923.1 384.6L921.7 383.9L920.3 383.1L919.3 382.1L918.6 381.0L918.3 379.7L918.0 378.5L917.8 377.3L917.6 376.3L917.5 375.4L917.7 374.5L918.4 373.6L919.3 372.7L920.3 371.8L921.4 370.8L922.3 370.0L923.4 369.4L924.7 369.1L926.3 368.9L928.1 368.9L929.9 369.0L931.6 369.0L933.0 369.1L934.4 369.2L936.0 369.5L937.6 370.0L939.3 370.7L940.8 371.6L942.1 372.7L943.0 373.7L943.7 374.7L944.5 375.6L945.2 376.5L945.9 377.4L946.3 378.4L946.4 379.6M929.9 371.6L931.4 372.0L931.7 373.6M929.3 371.5L927.7 371.3L926.8 370.1M906.5 368.0L908.1 368.1L909.5 367.2L910.2 365.7M913.8 368.9L912.5 368.3L911.5 367.2L911.0 365.8L911.1 364.4M907.8 368.1L906.3 368.6L904.8 369.1M908.3 378.4L909.8 377.8L910.4 376.2M923.3 344.0L923.4 343.1L924.0 342.3L925.0 341.6L926.3 340.9L927.7 340.2L929.0 339.4L930.3 338.8L931.8 338.4L933.6 338.3L935.5 338.5L937.5 338.9L939.2 339.4L940.6 340.0L941.6 340.6L942.6 341.2L943.5 341.9L944.4 342.7L945.0 343.6L945.1 344.8M922.9 346.5L923.2 345.3L923.5 344.1L923.9 343.0L924.5 341.9L925.4 341.1L926.8 340.5L928.5 340.2L930.3 339.9L932.1 339.7L933.6 339.6L935.1 339.5L936.7 339.6L938.4 339.9L940.0 340.5L941.5 341.4L942.6 342.4L943.2 343.5L943.5 344.5L943.6 345.5M832.0 327.5L832.2 329.3L832.3 330.8L832.1 332.2L831.4 333.5L830.6 334.7L829.8 335.9L829.3 337.1L828.9 338.2L828.4 339.1L827.6 339.6L826.6 339.7L825.5 339.4L824.6 338.8L824.0 338.0L823.6 337.2L823.3 336.4L822.8 335.5L822.1 334.4L821.5 333.0L821.1 331.3L821.2 329.4L821.5 327.5L821.9 325.7L822.2 324.0L822.3 322.7L822.5 321.5L822.9 320.4L823.7 319.4L824.7 318.4L825.7 317.4L826.5 316.7L827.0 316.3L827.5 316.3L828.1 316.7L829.0 317.5L830.0 318.4L830.9 319.4L831.4 320.5L831.6 321.6L831.6 322.7L831.7 324.1L832.0 325.7L832.3 327.6L832.5 329.5M832.1 327.1L832.2 329.0L832.3 330.8L832.3 332.3L831.8 333.7L831.1 334.9L830.3 336.1L829.6 337.2L829.1 338.3L828.7 339.2L828.2 339.8L827.3 340.1L826.3 339.9L825.3 339.4L824.6 338.6L824.2 337.7L823.9 336.7L823.6 335.7L823.1 334.6L822.6 333.3L822.1 331.7L822.0 329.9L822.2 328.0L822.6 326.1L823.1 324.3L823.3 322.7L823.5 321.5L823.8 320.4L824.3 319.4L825.2 318.5L826.2 317.7L827.1 317.0L827.8 316.6L828.2 316.5L828.7 316.7L829.4 317.4L830.2 318.4L831.1 319.6L831.7 320.8L832.0 322.0L832.1 323.3L832.0 324.7L832.1 326.2L832.3 328.0L832.4 329.8M828.3 329.4L829.5 330.1L830.9 329.7M829.4 324.7L830.5 325.2L830.9 326.3M830.1 332.4L830.8 333.1L830.5 334.0M858.4 328.1L858.7 329.4L858.5 330.1L858.9 331.3L859.1 332.5M861.4 345.8L862.0 347.1L862.2 348.7L862.5 350.0L862.6 351.7L862.8 353.5M855.8 331.7L856.1 333.4L855.9 334.7L856.7 336.0L856.8 337.1M853.7 326.3L853.8 327.6L854.1 329.0L854.3 330.7M857.5 351.9L857.9 353.5L857.9 354.5L858.7 355.8M852.2 331.0L852.1 331.8L852.6 333.0L852.7 334.0M863.9 314.5L865.3 314.6L866.8 314.7L868.2 315.0M864.0 314.0L865.4 314.2L866.8 314.6L868.1 315.0M861.1 313.5L862.6 313.5L864.0 313.5L865.4 313.7M878.0 358.0L886.0 361.5L894.0 363.5M888.3 322.4L887.1 322.8L886.1 323.6M884.8 321.4L885.6 321.8L886.6 321.9M914.9 330.2L915.4 330.8L916.2 330.8M908.2 327.6L908.3 327.7M890.5 343.2L889.9 343.8L889.9 344.7M892.0 342.2L891.1 342.6L890.1 342.6M886.0 341.2L887.2 342.1L888.7 342.1M890.6 336.9L891.3 338.2L891.1 339.6M897.9 338.9L897.1 338.5L896.7 339.2M890.8 333.0L890.7 334.6L889.5 335.7M916.2 333.6L915.7 334.9L914.4 335.6L912.7 335.3L911.6 334.2L911.6 332.7M856.6 363.1L857.1 361.8L857.2 360.3L856.7 359.0M853.8 359.8L854.0 361.0L854.9 361.9M852.8 356.5L851.3 356.4L849.8 356.7L848.6 357.6M852.3 356.3L853.5 357.6L854.8 358.7M891.1 368.9L891.2 369.0M866.4 377.0L866.5 377.1M875.6 377.6L876.5 378.3L877.5 379.0M879.1 369.2L879.7 370.7L880.5 372.1M877.5 376.6L878.8 376.8L880.0 376.6M890.1 371.7L890.8 373.0L891.2 374.3L891.5 375.7L891.7 377.1L891.9 378.4L892.0 379.5L891.7 380.4L891.2 380.9L890.4 381.2L889.4 381.2L888.5 381.0L887.7 380.6L886.8 380.1L885.9 379.4L884.8 378.5L883.6 377.4L882.5 376.1L881.7 374.6L881.2 373.0L880.8 371.6L880.6 370.2L880.3 369.1L880.2 368.1L880.2 367.3L880.6 366.6L881.3 366.0L882.2 365.6L883.1 365.5L884.0 365.6L884.8 366.1L885.7 366.9L886.7 367.9L887.9 369.1L889.0 370.4L890.0 371.7M882.8 371.2L881.8 370.7L881.0 369.8M890.1 375.3L888.0 375.7L886.0 375.1M887.7 374.7L888.2 373.3L888.5 371.8L888.5 370.2M903.4 375.4L903.5 375.5M860.4 386.5L859.2 387.0L858.0 387.2M854.2 377.9L856.0 378.5L857.3 380.0M855.7 380.4L854.2 381.1L852.8 381.7M854.4 379.9L855.6 379.3L856.9 379.7M848.7 378.0L850.2 377.8L850.9 376.5M848.7 376.9L847.5 377.6L846.0 377.8M853.8 386.1L852.4 385.1L852.0 383.4M849.6 377.1L849.4 378.6L848.2 379.5M859.6 389.8L858.4 391.2M883.2 397.0L884.2 396.8L884.9 397.5M882.6 391.6L882.6 390.3L883.5 389.3M878.5 400.0L879.6 398.9L881.2 398.7M869.8 397.0L871.2 398.0L872.9 398.1M870.4 394.1L868.8 394.0L867.5 394.7L866.7 396.0M868.7 386.8L868.7 388.6L870.1 389.7M875.5 385.7L874.9 386.9L874.4 388.2M870.5 391.0L870.8 389.2L870.5 387.5M878.7 398.1L879.9 398.1L880.6 399.1M874.1 399.1L873.3 400.5L873.5 402.0M873.1 393.7L874.9 394.5L876.9 394.4M870.6 395.6L871.8 396.8L873.5 397.1L875.1 396.4M882.2 394.3L883.7 395.2L883.9 396.8M877.4 398.1L878.8 399.4L878.9 401.3M876.3 392.2L875.2 393.1L874.5 394.3M864.8 390.6L866.3 389.9L867.8 389.5L869.4 389.3M873.4 389.8L873.0 388.4L873.7 387.2L875.1 386.8M870.3 393.2L871.5 391.8L873.1 391.0L874.9 390.7M866.4 386.8L865.9 388.0L866.7 389.1M898.4 408.5L897.9 409.9L897.7 411.3L897.8 412.7M882.8 400.3L883.6 401.4L884.0 402.7M895.8 398.8L894.1 398.5L892.8 397.4M895.3 410.7L895.5 409.7L894.7 409.1M895.9 401.0L896.7 402.7L897.7 404.1L899.1 405.3M890.8 404.7L889.8 404.4L888.8 404.6M884.0 400.9L885.4 401.5L886.3 402.6L886.6 404.0L886.2 405.4M899.0 407.9L898.7 409.6L898.4 411.4M883.3 405.5L884.2 406.6L885.1 407.8M911.6 400.0L912.9 400.6L914.3 400.4L915.3 399.4M908.8 398.3L909.6 397.5L910.7 397.5M912.7 395.2L912.3 393.7L910.8 393.3M905.8 397.7L905.7 395.8L906.9 394.3M911.3 408.1L911.1 406.2L910.4 404.4M910.6 412.5L911.7 414.1L913.6 414.3M915.3 406.9L915.7 408.7L915.5 410.5M913.6 409.4L914.1 411.0L915.6 411.9L917.3 411.7M920.2 406.5L920.6 407.8L920.9 409.2L920.9 410.6M928.9 410.1L930.6 409.8L932.3 409.4M929.4 411.4L930.5 410.5L931.8 409.9M917.1 408.2L918.3 406.6L920.1 405.6M927.3 413.4L926.6 411.6L925.5 409.8M909.6 408.6L911.2 407.9L913.0 407.8L914.6 408.5M876.6 387.6L876.9 389.3L876.8 391.1L876.4 392.7L875.7 394.1L874.7 395.1L873.4 395.6L872.0 395.5L870.4 395.0L869.0 394.1L867.9 392.8L867.1 391.4L866.7 389.7L866.6 388.1L866.8 386.5L867.4 385.1L868.3 384.0L869.6 383.2L871.0 383.0L872.6 383.2L874.0 384.0L875.2 385.2L876.0 386.7L876.6 388.4M876.9 387.6L877.3 389.1L877.1 390.6L876.5 392.0L875.5 393.3L874.4 394.3L873.1 394.9L871.8 395.1L870.4 394.8L869.0 394.0L867.7 392.8L866.7 391.2L866.2 389.6L866.3 387.9L866.8 386.5L867.6 385.2L868.6 384.3L869.8 383.7L871.1 383.4L872.6 383.5L874.1 384.0L875.5 385.0L876.5 386.3L877.0 387.9M823.7 300.8L823.8 300.9M820.6 294.3L822.2 294.6M831.3 350.9L831.8 351.3L832.4 351.6M829.9 349.9L830.0 350.0M853.1 324.0L852.1 325.0L851.4 326.3M851.7 328.6L851.8 328.7M848.6 324.8L848.1 325.4L847.3 325.2M906.0 346.7L904.9 347.3L904.3 348.4M906.6 352.3L907.4 353.3L907.5 354.6M908.5 355.8L909.4 355.5L910.2 356.0M976.1 296.9L976.1 298.2L976.4 299.5M952.2 299.4L952.3 299.5M985.4 256.3L985.3 257.4L984.4 258.1M986.2 254.4L986.3 254.5" stroke-width="1.8"/><path d="M878.5 225.4L880.0 224.3L881.1 222.9L881.7 221.1M891.8 216.7L893.3 215.9L894.5 214.6L895.2 213.1L895.5 211.4M876.2 224.7L877.7 223.8L879.4 223.5M894.5 215.9L896.1 215.1L897.4 214.0L898.4 212.5M880.2 225.8L882.2 225.5L884.2 225.5M886.7 218.9L887.5 217.4L887.8 215.8L887.7 214.2L887.1 212.6M876.9 227.9L878.4 227.3L880.0 227.3L881.6 227.8M851.7 248.9L852.2 247.3L852.6 245.7L853.1 244.2L853.5 242.7L854.1 241.4L854.8 240.2L855.6 239.0L856.4 237.9L857.2 236.8L857.9 235.7L858.6 234.7L859.4 233.7L860.4 232.9L861.4 232.2M850.4 251.6L849.3 253.0L847.9 254.2L846.5 255.2M852.0 244.1L851.3 245.4L850.3 246.6M851.1 254.2L850.6 255.6L850.1 256.9L849.4 258.2L848.7 259.5M849.3 253.5L847.7 254.7L845.8 255.3M847.2 253.8L846.8 255.2L846.2 256.6L845.7 258.0L845.1 259.3M832.5 276.4L833.4 276.9L834.3 277.6M830.3 278.6L831.2 279.4L832.2 280.0M846.0 306.9L845.8 308.4L845.3 309.8L844.7 311.2L844.1 312.5L843.5 313.8L843.0 315.0L842.5 316.0L841.9 316.7L841.1 317.1L840.2 317.2L839.4 317.1L838.7 316.8L838.2 316.4L837.8 315.9L837.3 315.2L836.7 314.3L836.1 313.2L835.7 311.8L835.5 310.2L835.5 308.6L835.6 306.9L835.7 305.2L835.7 303.7L835.8 302.2L836.0 300.7L836.4 299.3L837.0 297.8L837.7 296.4L838.4 295.2L838.9 294.2L839.4 293.4L840.0 293.0L840.7 292.8L841.6 292.8L842.5 292.9L843.2 293.2L843.7 293.6L844.1 294.2L844.5 295.0L845.0 296.2L845.5 297.5L845.9 299.1L846.2 300.7L846.2 302.3L846.0 303.8L845.8 305.4L845.6 306.9M845.7 304.9L845.5 306.5L845.3 308.1L845.2 309.7L845.0 311.2L844.6 312.4L843.9 313.5L843.2 314.4L842.4 315.2L841.7 315.9L841.2 316.5L840.6 316.9L840.0 317.2L839.2 317.1L838.3 316.8L837.5 316.1L837.0 315.3L836.6 314.4L836.3 313.3L836.0 312.3L835.6 311.1L835.2 309.9L835.0 308.5L835.0 306.9L835.3 305.3L835.7 303.6L836.0 302.0L836.3 300.7L836.5 299.4L836.9 298.4L837.5 297.5L838.4 296.6L839.2 295.9L840.0 295.2L840.6 294.7L841.1 294.5L841.7 294.6L842.4 295.0L843.2 295.6L844.0 296.4L844.6 297.3L844.9 298.3L845.1 299.3L845.3 300.4L845.5 301.7L845.8 303.2L846.0 304.8M856.6 277.3L856.7 277.4M856.0 298.5L856.9 298.7L857.8 298.6M820.8 298.4L821.5 299.4L822.3 300.3M824.4 298.2L824.5 298.3M824.5 278.3L825.5 278.9M914.8 230.8L914.9 230.9M917.2 231.9L917.7 232.7L918.0 233.6M933.0 212.8L933.3 211.2L933.4 209.6L933.3 208.0M933.1 215.5L934.4 215.9L935.7 216.2M930.7 209.9L932.0 208.5L932.9 206.9L933.4 205.2M932.3 208.0L933.7 208.1L934.7 207.1M930.5 208.4L930.8 209.8L930.5 211.2L929.5 212.3L928.1 212.8M942.3 219.8L942.4 219.9M950.4 217.2L950.5 217.3M956.5 215.6L956.6 215.7M955.6 215.3L955.7 215.4M957.6 213.6L956.2 214.5L954.6 214.8M947.1 224.5L947.2 224.6M955.2 210.1L955.5 211.3L954.7 212.2M942.3 238.7L941.3 238.8L940.6 239.5M993.8 220.6L992.5 219.9L991.0 219.8M998.1 224.9L996.9 224.0L996.6 222.6M996.0 226.7L997.3 226.0L998.2 224.8M993.1 231.6L992.0 233.0L990.3 233.4L988.7 232.7M993.6 227.3L994.5 229.1L993.7 230.9M980.2 214.0L980.6 215.5M974.7 210.8L973.2 211.3L972.0 212.5L971.6 214.1M968.0 237.4L968.1 237.5M964.0 237.1L962.6 237.4L961.2 237.6M960.0 215.1L959.3 215.8L958.5 216.4M961.5 214.7L961.6 214.8M995.3 251.1L997.2 251.9L998.6 250.5M993.1 244.5L993.2 246.0L992.9 247.5L992.0 248.7L990.9 249.6M1008.2 246.3L1007.4 247.1L1006.3 247.5M1002.8 236.8L1003.8 235.2L1005.1 233.8M1012.8 245.6L1013.8 245.1L1013.7 244.0M1003.2 236.4L1003.6 234.6L1004.4 232.9L1005.5 231.4M1011.2 241.6L1009.7 242.4L1008.4 243.3L1007.2 244.5M1000.1 237.4L1000.4 239.1L1000.4 240.9L1000.0 242.6M1013.2 248.7L1011.8 249.2L1010.6 248.4M999.5 238.8L1000.3 237.2L1002.0 236.6L1003.7 237.4M1022.0 256.4L1022.8 257.6L1024.0 258.2L1025.5 258.3M1022.6 257.9L1023.2 256.5L1024.3 255.4L1025.7 254.9M1015.4 243.9L1015.6 245.5L1015.9 247.1L1016.2 248.7M1016.8 245.0L1018.2 243.9L1018.8 242.4M1030.7 273.8L1031.2 272.3L1030.7 270.8M1035.6 276.7L1035.5 275.5L1035.7 274.3M1033.6 277.5L1035.4 276.9L1037.0 276.0M1036.3 283.1L1036.9 281.6L1037.2 280.1L1037.3 278.5M1006.0 290.8L1005.8 292.5L1005.1 293.9L1004.0 295.1L1002.6 295.9L1001.1 296.4L999.6 296.4L998.2 296.1L997.0 295.3L996.0 294.1L995.2 292.6L994.7 290.9L994.7 289.1L995.2 287.4L996.1 286.0L997.4 284.9L998.8 284.2L1000.2 284.0L1001.6 284.2L1002.9 284.8L1004.2 285.7L1005.2 286.9L1005.9 288.4L1006.2 290.1M994.7 282.4L994.8 282.5M996.2 263.1L996.7 263.3L997.2 263.6M1009.2 303.5L1010.1 302.4L1011.0 301.2L1011.9 300.1L1012.8 298.9L1013.7 297.8M1003.6 294.6L1004.4 293.4L1005.2 292.2L1005.9 290.9L1006.5 289.6L1007.1 288.2L1007.5 286.9L1007.9 285.4M1016.6 301.7L1017.5 300.5L1018.4 299.2L1019.2 298.0L1020.0 296.7L1020.8 295.5L1021.6 294.2L1022.3 292.9L1023.1 291.6M1006.8 309.2L1007.7 308.0L1008.4 306.7L1009.1 305.3L1009.6 303.9M999.0 311.0L1000.0 310.0L1001.1 309.0L1002.1 308.1L1003.2 307.3L1004.4 306.5L1005.6 305.7L1006.8 305.0M1006.1 313.9L1007.2 312.9L1008.4 311.9L1009.6 310.9L1010.8 310.0L1012.0 309.0L1013.2 308.1M1000.0 313.6L1000.7 312.3L1001.3 310.9L1001.9 309.6L1002.4 308.2L1002.9 306.8L1003.3 305.4M1025.7 309.7L1024.4 308.6L1023.1 307.5L1021.9 306.4M1027.8 297.4L1028.9 296.3L1029.5 294.9L1029.7 293.4L1029.4 291.9M1034.8 309.6L1036.0 308.6L1036.7 307.1L1036.7 305.4L1036.0 303.9M1035.2 294.1L1036.7 294.5L1038.2 294.3L1039.6 293.6M1031.9 316.0L1030.4 315.9L1029.0 316.2L1027.9 317.1M1027.8 300.2L1027.3 298.8L1026.0 298.4M1040.9 299.5L1039.4 299.2L1038.0 298.9L1036.6 298.6L1035.1 298.3M1035.2 293.3L1033.8 292.2L1032.7 290.8M1027.3 301.3L1026.5 302.6L1025.4 303.6L1024.1 304.3L1022.6 304.6M1033.4 291.0L1034.6 291.5L1035.8 291.5M1034.3 290.8L1035.5 290.2L1036.9 290.0L1038.3 290.2M1028.0 312.4L1029.4 313.3L1030.1 314.7L1030.0 316.3L1029.2 317.6M1028.2 296.1L1028.5 297.4L1028.3 298.7M1024.7 295.1L1023.6 293.6L1023.8 291.8M1022.4 295.9L1024.3 295.3L1026.3 294.8M1026.2 294.1L1024.9 293.7L1023.6 293.6M1021.0 293.3L1022.8 292.6L1024.2 293.9M1022.6 326.2L1023.4 324.9L1024.4 323.7L1025.6 322.6L1026.8 321.7M1024.8 315.2L1023.5 315.6L1022.0 315.6L1020.6 315.3L1019.3 314.7M1016.1 320.3L1016.4 322.2L1016.3 324.0M1027.2 317.4L1029.0 317.5L1030.4 316.5L1030.8 314.8M1024.9 312.7L1024.5 314.3L1024.1 316.0L1023.8 317.7L1023.4 319.3M1019.8 318.5L1019.3 320.4L1018.8 322.3M1016.9 318.4L1015.8 317.1L1015.3 315.6L1015.4 314.0M1022.7 322.6L1023.7 321.4L1024.1 319.9L1023.8 318.4L1022.8 317.2M1018.4 312.0L1018.0 313.5L1017.8 315.1M1028.4 320.6L1026.6 320.6L1025.0 321.4L1023.9 322.9M1022.8 318.1L1022.5 316.1L1024.0 314.8M993.6 295.4L992.9 296.0L993.1 296.9M992.5 303.7L992.6 303.8M990.7 298.7L989.8 299.0L989.6 300.0M992.7 309.0L992.8 309.1M947.2 316.3L947.2 318.0L947.2 319.7L946.9 321.0L946.1 322.0L944.9 322.9L943.4 323.7L941.9 324.5L940.7 325.4L939.7 326.2L938.5 326.9L936.9 327.3L935.1 327.3L933.1 326.8L931.4 326.1L930.1 325.3L929.1 324.5L928.2 323.7L927.1 322.9L925.9 322.1L924.7 321.0L923.9 319.6L923.7 317.9L923.9 316.1L924.2 314.4L924.5 312.8L924.6 311.6L924.8 310.5L925.4 309.5L926.6 308.5L928.1 307.5L929.7 306.4L931.1 305.3L932.2 304.5L933.3 304.1L934.7 304.1L936.5 304.4L938.4 304.9L940.2 305.5L941.7 306.0L942.7 306.6L943.5 307.2L944.4 308.0L945.6 309.1L946.7 310.6L947.6 312.3L948.0 314.0L947.8 315.6L947.4 317.0M947.9 317.0L947.6 318.4L947.0 319.8L946.2 321.1L945.2 322.4L944.1 323.7L942.9 324.7L941.6 325.7L940.0 326.3L938.3 326.8L936.6 327.0L934.8 327.1L933.1 326.9L931.4 326.7L929.9 326.2L928.4 325.6L926.9 324.8L925.5 323.8L924.3 322.6L923.4 321.2L922.7 319.8L922.3 318.3L922.0 316.8L921.9 315.4L922.0 313.9L922.3 312.5L922.9 311.1L923.8 309.7L924.9 308.4L926.1 307.2L927.4 306.2L928.8 305.5L930.4 304.9L932.1 304.6L933.9 304.4L935.7 304.4L937.4 304.5L939.0 304.9L940.5 305.4L942.0 306.1L943.4 307.0L944.7 308.2L945.8 309.5L946.7 310.8L947.3 312.2L947.6 313.7L947.8 315.1L947.8 316.6M944.0 310.8L944.8 311.9L945.1 313.1L945.2 314.3L945.8 315.2M935.8 304.9L936.2 306.5L936.6 308.0L936.9 309.1L937.8 310.2M938.2 311.5L938.6 312.2L938.7 313.8L939.6 314.7M975.5 326.2L976.5 327.4L977.5 328.6L978.2 329.7M965.3 319.4L965.9 320.4L966.8 321.1L967.2 322.5M972.0 332.7L972.6 333.7L973.3 335.1M964.4 333.7L965.1 334.7L966.2 335.8M1007.2 333.7L1007.7 335.0M1006.1 335.6L1006.3 337.0L1006.4 337.9M1003.0 330.8L1002.9 332.5M1002.8 332.9L1003.2 334.2L1003.3 336.1L1004.0 337.5L1003.9 338.6M1000.9 337.5L1001.5 338.6L1001.8 339.9L1001.7 341.8M993.0 332.1L993.6 333.7L993.6 334.9L993.6 336.5L993.9 337.5L994.6 339.2L994.6 340.5M954.9 333.3L953.6 333.8L952.3 333.4L951.3 332.2L950.8 330.4L951.0 328.6L951.9 327.1L953.2 326.5L954.6 326.7L955.7 327.8M957.9 320.4L958.0 321.9L957.6 323.4M955.0 325.3L954.7 325.9L954.1 326.3M951.7 348.6L951.8 348.7M980.9 322.0L980.3 321.6L979.8 322.1M980.0 317.4L979.1 317.7L978.7 318.5M987.4 315.9L987.5 316.8L987.6 317.5M988.3 317.5L989.3 316.0L990.4 314.6M1010.7 331.1L1011.2 332.7L1011.7 334.3M1015.6 341.1L1014.9 339.5L1016.0 338.1M1016.2 329.5L1014.6 328.8L1012.9 328.8L1011.3 329.5L1010.2 330.8M1013.5 332.9L1015.1 332.4L1016.8 332.0L1018.6 331.7L1020.3 331.5M1014.9 328.2L1014.2 329.6L1012.9 330.7L1011.3 331.1M1012.1 332.8L1013.8 333.2L1015.5 333.6L1017.1 334.0L1018.8 334.5M1013.0 326.9L1011.3 326.9L1009.8 326.7L1008.2 326.3L1006.7 325.7M1014.3 326.0L1012.8 326.0L1011.2 326.1L1009.7 326.2L1008.1 326.4L1006.6 326.6M1014.5 338.7L1016.0 339.4L1016.0 341.0M1016.9 336.1L1015.2 335.7L1013.4 336.1L1011.9 337.3M1013.2 330.7L1014.0 329.4L1014.9 328.1L1016.0 326.9L1017.1 325.8L1018.4 324.8M1030.3 340.1L1028.9 340.9L1027.4 340.8L1026.2 339.9M1036.3 336.1L1035.9 334.5L1036.4 333.0M1024.6 352.5L1024.0 354.1L1022.3 354.2M1029.5 336.1L1027.8 336.3L1026.9 334.9M1022.3 336.3L1022.6 337.3L1022.1 338.3M1020.1 333.3L1019.9 331.5L1019.6 329.8L1019.1 328.0M1030.8 345.2L1029.4 346.7L1027.9 348.1M1027.3 330.2L1027.7 332.0L1026.7 333.4M1030.0 341.4L1029.7 340.1L1029.0 338.8M1030.8 330.2L1030.6 328.6L1031.5 327.4L1033.0 327.0M1023.1 328.4L1022.5 329.7L1022.2 331.1L1022.2 332.6L1022.6 334.0M1036.2 333.3L1037.6 333.3L1039.0 333.6L1040.3 334.2M1035.8 342.7L1037.5 342.9M1010.5 347.4L1009.3 346.3L1007.7 346.0L1006.2 346.6L1005.3 347.8M1018.9 356.9L1020.2 355.6L1021.5 354.4L1022.9 353.1M1018.4 349.5L1017.8 350.9L1018.3 352.3L1019.6 353.1M1002.8 359.5L1002.4 357.8L1001.3 356.6L999.7 356.2L998.1 356.8M1004.0 361.9L1005.6 361.9L1007.2 361.4L1008.7 360.6L1009.9 359.6M1013.0 348.2L1014.0 346.8L1014.6 345.1M1008.7 358.9L1008.3 357.4L1009.0 356.0M1020.9 353.2L1021.1 351.8L1022.0 350.5L1023.3 349.8L1024.8 349.7M1006.4 368.9L1006.7 367.9L1006.0 367.0M1008.9 361.5L1007.5 360.7L1006.5 359.4L1006.2 357.8L1006.6 356.2M1020.5 353.2L1021.3 355.0L1022.6 356.4M1012.7 372.6L1012.0 371.3L1011.5 369.8L1011.3 368.3M1005.2 367.2L1006.2 368.3L1007.5 369.3L1008.8 370.0L1010.2 370.6M1002.2 374.1L1000.8 374.8L999.2 374.5L998.1 373.4M993.9 379.9L994.5 381.1L994.4 382.5M1006.3 377.5L1007.2 378.6L1008.5 378.2M994.0 373.6L993.2 372.4L992.0 371.4L990.7 370.7L989.2 370.3M1003.4 379.2L1004.2 379.9L1005.2 379.6M998.1 385.3L996.5 384.3L994.9 383.4M1001.3 373.9L999.7 374.8L998.0 375.4L996.3 375.8M998.7 382.5L999.0 384.0L999.9 385.2L1001.1 386.1L1002.5 386.5M1017.3 363.1L1017.2 361.7L1017.0 360.3M1020.8 359.9L1021.7 360.8L1022.8 361.3M1033.6 314.8L1032.3 316.1L1031.5 317.7M1040.1 323.7L1038.8 323.6L1037.6 323.4M1034.5 311.6L1034.4 312.9L1034.1 314.1M1034.9 329.7L1033.6 330.4L1032.1 330.5L1030.7 330.0L1029.6 328.9M1033.3 313.3L1032.0 311.9L1030.3 310.9M1033.7 316.4L1034.6 317.2L1034.6 318.4M1035.3 332.7L1033.9 332.4L1032.5 332.3L1031.1 332.3M1036.3 316.1L1037.0 317.5L1037.4 318.9M1038.6 331.5L1037.4 330.8L1037.2 329.5M1035.0 332.6L1036.6 333.4L1037.9 334.4L1039.2 335.6M1034.0 320.3L1035.3 321.5L1036.5 322.8L1037.6 324.1M968.3 353.7L968.8 354.8L968.8 356.0L968.4 357.4L967.8 358.9L967.1 360.4L966.3 361.7L965.3 362.8L963.9 363.6L962.2 363.9L960.4 363.8L958.7 363.5L957.3 363.0L956.3 362.4L955.4 361.6L954.5 360.7L953.8 359.5L953.2 358.1L953.1 356.5L953.6 354.9L954.5 353.4L955.7 352.1L956.9 351.2L958.1 350.5L959.3 350.2L960.7 350.1L962.4 350.2L964.2 350.4L965.7 350.8L966.9 351.5L967.7 352.5L968.1 353.8M966.2 357.9L964.6 357.0L963.0 356.0M956.7 354.8L957.2 353.8L957.3 352.7M955.3 356.1L956.8 355.6L957.3 354.0M963.5 353.4L964.2 352.6L965.1 351.9M970.7 363.8L970.8 363.9M967.6 365.6L967.7 365.7M988.5 354.6L989.3 356.0L989.8 357.5L990.1 358.3L990.5 360.0M986.9 353.6L987.1 355.1L987.8 356.4L988.0 357.6M984.8 365.3L984.9 366.7L985.4 368.0L986.0 368.9M976.4 357.5L976.5 359.0M998.2 353.8L997.8 355.3L997.6 356.8M997.1 351.2L997.5 352.9L999.1 353.3M970.9 387.1L971.0 387.2M982.1 383.9L982.2 384.0M979.5 386.9L980.6 387.8L981.3 389.0M985.8 384.0L986.7 384.3L987.6 384.8M954.0 399.7L952.8 398.5L952.2 397.0M951.9 399.4L953.5 399.4L955.1 399.3M962.4 397.0L964.4 396.5L965.5 394.7M963.2 397.4L964.3 398.6L965.1 400.0L965.6 401.6M951.8 394.8L950.8 393.9L950.5 392.6M956.7 400.5L956.5 399.0L957.3 397.8L958.7 397.5M963.8 398.2L965.7 398.4L966.3 400.1M961.4 398.0L961.5 399.4L962.0 400.8L963.0 402.0M962.0 393.9L963.5 393.6L964.9 393.4L966.4 393.4M953.4 393.2L953.4 391.8L952.7 390.5L951.6 389.6M968.6 369.5L970.0 369.4L971.4 369.6L972.7 370.2L973.8 371.2M972.5 373.3L973.8 373.9L975.2 373.2M974.0 376.1L975.6 375.7L976.6 374.4L976.5 372.8M971.8 376.3L970.2 376.7L968.5 376.9L966.8 376.7M965.0 375.4L963.6 374.9L962.5 373.9L962.0 372.6L962.1 371.1M976.2 372.9L976.1 371.2L977.6 370.4M981.0 397.0L979.6 395.9L977.8 395.9M974.9 402.8L974.9 404.7L976.0 406.3M982.4 400.7L981.3 399.3L981.2 397.5M979.1 398.7L979.6 400.7L980.2 402.6M983.1 400.9L984.8 400.5L986.4 399.7L987.8 398.6M984.5 395.8L983.1 396.3L981.8 395.8L980.9 394.7L980.8 393.3M991.6 393.6L992.7 394.7L994.2 395.0L995.7 394.5L996.6 393.2M979.9 396.9L979.7 395.3L980.4 393.8L981.8 393.0M979.5 399.1L978.5 398.8L977.4 398.5M981.4 399.8L981.6 401.6L982.5 403.2L984.1 404.3M958.0 405.7L958.1 404.0L957.9 402.4L957.4 400.8M961.8 408.9L963.4 408.9L964.9 409.5L966.1 410.8M969.4 410.2L969.5 408.5L969.3 406.9L968.9 405.2L968.4 403.7M978.7 406.6L980.1 405.8L981.7 406.2M965.8 405.4L966.9 406.4L966.4 407.9M966.3 411.3L964.9 410.4L963.4 409.7L961.8 409.1M966.0 409.6L967.6 409.3L969.2 409.5L970.7 410.1M948.0 401.2L949.6 400.8L951.1 400.0M938.0 404.4L936.3 404.3L934.5 404.2L932.8 404.3L931.1 404.5M936.1 404.7L936.3 406.5L938.0 407.0M935.7 399.2L935.1 397.5L933.5 396.7L931.9 397.2M941.7 408.0L941.9 406.4L941.7 404.9L941.2 403.3L940.5 402.0M940.8 401.7L939.3 401.9L937.9 402.4L936.7 403.2M930.0 403.0L929.0 404.4L928.4 406.1L928.2 407.9M1000.8 388.5L1001.6 387.7L1002.7 387.3M1000.1 393.5L998.3 394.4L997.3 396.2M936.5 349.3L937.2 350.6L938.0 351.8L938.3 353.0L939.0 353.9L939.5 355.0M939.8 359.2L939.8 360.2M933.8 349.9L934.4 351.0L934.9 352.6L935.4 353.8L936.4 354.8L936.7 355.9L937.5 357.5M936.8 358.1L937.4 359.6L937.9 360.7L938.6 361.8M929.2 351.5L929.4 352.3L929.9 353.6L930.8 354.3L931.2 355.8L931.7 356.7M925.5 346.8L926.3 348.5L926.9 349.9L927.2 351.2L928.1 352.5L928.8 353.5L928.8 355.1M923.1 345.3L923.9 346.1L924.5 347.2L924.6 348.3M923.0 349.5L923.8 350.1L924.3 350.9L924.6 352.2M921.6 350.8L922.0 351.9L922.5 352.6L923.1 353.8L923.2 354.4M924.1 356.2L924.6 357.2L924.9 358.6L925.6 359.8L925.9 360.8L926.8 361.9L926.8 362.7M914.4 352.1L915.0 353.0L915.5 354.4L916.6 355.9L917.1 357.1L917.9 358.4M917.6 358.6L918.5 359.7L918.8 361.3L919.7 362.5L919.9 363.8L920.5 364.9M916.9 359.9L917.3 361.3L918.0 362.8L918.8 363.6L919.6 365.3L920.0 366.0M919.8 367.5L920.4 369.2L921.1 370.6M917.0 368.2L917.4 369.1M907.5 356.3L908.0 357.0L908.7 358.2L909.0 360.0M963.3 371.7L963.2 373.0L963.0 374.3L962.6 375.6L961.9 376.8L961.1 377.9L960.2 379.0L959.1 380.1L958.1 381.1L956.9 382.0L955.5 382.8L954.1 383.4L952.5 383.9L950.9 384.2L949.3 384.4L947.8 384.4L946.3 384.4L944.7 384.3L943.1 384.0L941.6 383.6L940.1 383.1L938.8 382.3L937.6 381.5L936.5 380.5L935.6 379.5L934.7 378.4L933.9 377.3L933.2 376.1L932.8 374.9L932.7 373.6L932.6 372.2L932.7 370.8L932.9 369.5L933.3 368.2L933.8 366.9L934.5 365.8L935.5 364.7L936.5 363.7L937.7 362.7L938.9 361.8L940.1 361.0L941.5 360.3L943.0 359.7L944.6 359.3L946.3 359.1L947.9 359.1L949.4 359.1L950.9 359.2L952.4 359.5L954.0 359.9L955.5 360.4L956.9 361.0L958.1 361.8L959.3 362.8L960.2 363.8L961.1 364.9L961.8 366.0L962.5 367.2L963.0 368.4L963.3 369.7M963.3 369.0L963.4 370.1L963.2 371.2L962.7 372.5L962.2 373.9L961.8 375.4L961.4 376.9L960.8 378.2L959.8 379.3L958.4 380.1L956.9 380.8L955.4 381.4L954.1 382.1L952.9 382.8L951.5 383.4L949.9 384.0L947.9 384.3L946.0 384.3L944.2 384.0L942.8 383.5L941.5 383.0L940.2 382.4L938.7 381.9L937.1 381.4L935.6 380.8L934.4 379.9L933.6 378.8L933.1 377.5L932.6 376.1L932.1 374.7L931.4 373.3L931.0 372.2L930.9 371.1L931.2 369.9L931.9 368.7L932.6 367.4L933.2 366.0L933.8 364.5L934.4 363.2L935.5 362.2L936.9 361.4L938.5 360.8L940.1 360.3L941.6 359.8L942.9 359.3L944.2 358.7L945.8 358.3L947.7 358.0L949.6 358.1L951.5 358.4L953.0 359.0L954.2 359.7L955.4 360.4L956.7 361.1L958.1 361.7L959.6 362.4L960.8 363.3L961.6 364.4L962.0 365.7L962.2 367.2L962.6 368.7L963.0 370.1L963.3 371.3M959.9 369.1L960.4 370.1L961.3 371.8M957.3 367.2L957.6 368.5L958.3 369.5L959.1 371.0M952.5 362.5L953.5 363.4L954.2 364.7L954.8 366.2M952.9 366.7L953.9 367.3L954.4 368.7L955.0 369.7M954.8 370.2L955.8 371.0L956.3 372.1L956.8 373.8M948.7 363.9L949.6 365.4L950.2 366.5L950.6 367.6L951.3 368.8L952.0 370.1M942.9 363.1L943.5 364.3L944.3 365.3L945.1 366.6L945.2 367.3L945.8 368.5M948.9 376.1L949.4 377.0L949.4 377.5L950.0 378.5M940.0 364.1L940.8 365.9L941.4 367.2L941.9 368.4L942.6 369.8L943.7 370.7M943.4 374.2L943.8 375.7L944.6 376.9L945.0 377.8L945.7 379.3L946.4 380.1M946.7 380.6L947.5 382.0M936.7 365.8L937.2 366.9L938.3 368.3L938.7 369.1M944.9 380.6L945.5 381.7L945.9 382.3M939.2 378.3L939.9 379.0L940.7 380.1L941.1 380.9M933.1 372.0L933.9 373.2L934.6 374.8L934.9 375.8M934.8 376.6L932.8 376.8L930.9 376.3M928.8 377.0L927.2 375.7L925.1 375.6M919.0 376.6L917.8 377.9L916.8 379.3L915.9 380.8M928.7 371.0L927.5 371.9L926.5 373.2L925.8 374.5L925.4 376.1M919.0 375.8L918.0 374.7L917.0 373.6L916.0 372.5L915.0 371.3L914.1 370.1M925.9 379.8L925.1 378.5L924.9 377.1L925.3 375.7L926.3 374.6M930.6 375.3L930.8 373.7L931.7 372.2L933.1 371.3M940.2 377.6L941.3 376.2L942.1 374.8L942.8 373.2L943.3 371.5M939.9 373.6L940.8 374.9L941.9 375.9L943.3 376.7M910.5 365.4L910.2 363.7L910.9 362.1L912.3 361.1L914.0 360.9M914.2 367.6L913.0 368.7L911.4 368.7L910.1 367.6M910.9 378.8L911.0 380.5L910.1 382.0L908.5 382.6M907.0 372.7L906.0 373.5L906.4 374.8M913.0 367.6L912.0 368.5L911.9 369.8M916.1 368.7L915.9 370.2L915.0 371.4M832.0 327.1L831.9 327.9L832.7 328.0M831.8 328.6L831.9 328.7M840.6 340.1L840.0 341.6L838.7 342.2L837.2 341.6L836.6 340.1L837.2 338.6L838.6 338.0L840.0 338.6L840.6 340.1ZM870.7 342.4L871.8 343.0L872.7 343.8M872.2 338.4L871.9 339.1L871.2 338.9M872.7 339.4L873.6 339.7L873.9 340.6M876.7 345.1L876.8 346.4L878.0 347.2M866.9 315.0L868.7 314.9L870.5 314.7M899.2 326.6L897.5 326.9L895.9 326.7L894.6 325.8L893.8 324.5L893.3 322.8L893.4 321.0L894.0 319.4L895.2 318.3L896.9 317.8L898.8 317.9L900.5 318.6L901.7 319.8M899.2 326.5L897.8 326.9L896.4 326.8L895.1 326.0L894.0 324.7L893.3 323.2L893.2 321.5L893.7 320.0L894.7 318.8L896.2 318.1L897.7 317.9L899.1 318.2L900.3 319.0L901.2 320.2M913.7 322.6L913.8 322.7M910.0 325.4L910.7 326.7L912.1 327.1M893.9 337.0L894.0 337.1M852.6 356.0L851.8 354.7L850.3 354.0L848.7 354.2M857.7 361.3L858.1 359.6L858.4 357.9M888.1 371.1L888.2 371.2M891.4 370.9L890.7 371.8L890.8 372.9M890.4 367.9L891.5 367.9L892.1 368.8M863.9 370.9L864.0 371.0M880.6 367.6L879.3 367.8L878.6 368.9M880.4 370.2L880.5 370.3M865.4 370.0L864.5 369.5L863.6 370.1M867.7 368.4L868.9 369.2L870.4 368.9M859.7 372.5L859.2 373.9L859.0 375.3M866.0 371.9L866.1 372.0M856.0 369.8L855.2 371.1L855.3 372.6M860.8 367.7L861.4 368.1L862.1 367.7M898.7 382.1L898.2 382.3L897.7 382.2M901.0 373.6L901.6 373.7L902.0 374.2M872.5 395.6L873.8 396.2L874.2 397.6M863.1 386.7L864.5 386.0L866.1 386.3M874.5 397.1L875.8 398.2L877.5 398.5L879.1 398.0M862.1 389.3L863.1 388.0L862.7 386.4M864.7 385.1L865.1 383.9L864.2 382.9M871.8 386.3L871.7 384.7L872.4 383.2L873.8 382.3M874.9 397.0L873.5 398.5L871.6 397.9M881.7 397.2L880.4 398.8L881.0 400.9M901.5 403.2L901.7 401.9L900.6 401.1M897.0 401.6L897.8 400.3L897.5 398.9M883.9 399.2L884.7 400.1L885.3 401.1M903.2 403.3L903.1 401.8L902.6 400.3M887.8 398.1L888.5 397.2L889.5 396.5M896.7 401.9L896.9 400.5L898.2 399.7M895.4 399.8L896.8 398.9L898.2 398.1L899.8 397.5M888.0 406.9L887.2 408.8M887.8 400.2L886.6 401.2L885.3 402.0L884.0 402.9M897.2 406.3L896.2 407.0L895.1 406.5M890.4 409.1L890.6 407.4L891.0 405.7L891.6 404.1M902.2 408.4L901.8 406.4L900.0 405.5M887.4 400.8L889.0 401.3L890.5 402.1L891.9 403.3M895.8 409.3L894.6 407.8L892.7 408.0M883.8 402.6L883.8 401.1L884.5 399.9L885.8 399.2L887.3 399.2M888.1 402.0L889.2 402.0L890.2 402.6M919.0 395.2L919.1 396.1L918.8 397.1L918.3 398.1L917.5 399.2L916.6 400.1L915.6 401.0L914.4 401.8L912.9 402.3L911.3 402.7L909.5 402.9L907.8 402.9L906.3 402.8L904.8 402.6L903.4 402.3L902.1 401.8L900.8 401.2L899.8 400.3L899.0 399.4L898.6 398.3L898.5 397.2L898.6 396.2L898.9 395.2L899.4 394.3L900.1 393.4L901.1 392.6L902.4 391.8L903.9 391.1L905.5 390.5L907.0 390.1L908.6 389.9L910.1 389.9L911.7 390.2L913.3 390.5L914.8 391.0L916.1 391.6L917.2 392.3L917.9 393.1L918.5 394.0L918.8 395.0L918.9 396.0M918.0 396.0L917.7 396.9L917.3 397.9L916.6 398.8L915.7 399.6L914.6 400.3L913.3 400.9L911.9 401.4L910.4 401.7L908.9 402.0L907.3 402.0L905.9 402.0L904.4 401.7L903.0 401.3L901.8 400.8L900.7 400.1L899.9 399.3L899.3 398.5L899.0 397.6L898.8 396.7L898.9 395.8L899.3 394.8L899.9 393.9L900.7 393.1L901.8 392.3L903.0 391.6L904.3 391.0L905.8 390.6L907.2 390.4L908.8 390.3L910.3 390.3L911.9 390.5L913.3 390.8L914.5 391.3L915.6 391.9L916.5 392.6L917.2 393.4L917.7 394.3L918.0 395.2M912.7 397.4L912.8 399.2L912.2 400.9M915.0 396.4L913.5 396.1L912.7 394.8L912.9 393.3M913.3 396.1L911.6 395.4L910.0 396.1M916.9 412.9L916.5 414.8L916.6 416.6M923.8 405.8L921.9 406.0L920.0 405.8M923.7 410.0L925.2 410.3L926.6 410.7L927.9 411.3M918.4 411.8L919.9 411.6L921.4 411.5L922.9 411.3M918.0 407.9L918.4 406.2L919.4 404.7L920.9 403.8M926.7 411.8L924.9 412.1L923.1 412.5L921.3 413.1M929.0 410.8L929.9 412.3L931.6 413.1L933.3 412.7M917.9 414.3L917.0 414.8L915.9 415.0M921.2 412.4L920.8 411.4L920.5 410.5M913.8 412.0L914.4 413.5L915.9 413.9M919.5 408.2L918.5 407.8L917.5 407.3M822.6 303.3L821.6 303.1L821.0 304.0M824.6 306.3L824.0 307.3L823.9 308.5M824.8 315.4L823.8 315.9L822.8 315.8M824.0 303.1L824.1 303.2M823.8 304.5L824.6 305.6L825.7 306.4M819.7 297.3L819.8 297.4M819.9 303.7L820.1 304.4L820.8 304.4M826.6 344.0L826.7 344.1M831.9 356.5L831.7 357.9L831.4 359.3M832.0 357.4L830.8 358.3M848.9 326.9L849.0 327.0M851.4 321.7L851.5 321.8M849.7 317.1L848.3 317.6L847.6 319.0M905.1 345.3L905.2 345.4M905.5 352.4L905.6 352.5M952.2 299.8L951.4 300.6L950.5 301.3M965.7 300.1L965.8 300.2M988.4 246.2L988.5 246.3" stroke-width="2.0"/><path d="M884.2 218.7L884.7 216.9L884.1 215.1M880.3 222.2L882.0 221.1L884.0 220.5M876.7 226.9L878.4 225.8L879.9 224.4M883.4 223.6L881.7 224.6L879.9 225.3M876.3 228.0L875.7 229.6L874.4 230.7M882.5 227.0L883.7 226.4L884.6 225.4M882.9 222.4L883.7 224.1L885.5 224.5M848.2 250.3L848.6 248.8L849.0 247.2L849.5 245.8L850.1 244.3L850.7 242.9L851.3 241.5L851.9 240.1L852.6 238.8L853.3 237.5L854.1 236.4L855.0 235.3L855.9 234.3L856.8 233.4L857.6 232.5L858.5 231.6L859.5 230.8L860.5 230.1L861.6 229.5M853.6 245.6L853.4 247.3L853.1 249.0M848.8 247.7L848.0 249.1L847.4 250.6L846.9 252.2M849.5 252.4L848.3 253.8L846.8 254.9L845.0 255.4M848.9 248.9L847.9 250.6L846.6 252.0M850.7 249.1L850.3 250.7L849.4 252.0L848.2 253.1M829.6 276.8L830.6 277.6L830.7 278.9M832.2 282.8L832.3 282.9M855.9 272.2L854.5 272.4L853.3 273.1M855.4 303.3L855.5 303.4M853.9 302.4L854.4 302.8L854.3 303.5M823.5 297.7L823.6 297.8M825.0 278.1L825.1 278.2M825.9 280.9L826.0 281.0M836.1 260.0L836.2 260.1M835.0 256.5L835.1 256.6M908.3 205.0L908.7 205.6L908.2 206.1M913.1 205.6L913.3 206.3L913.2 207.0M875.5 227.9L875.6 228.0M874.0 228.3L874.1 228.4M929.4 212.8L927.4 213.3L926.2 211.6M926.2 210.5L927.3 209.5L928.4 208.4M928.7 211.3L929.4 212.7L930.6 213.7L932.2 213.9M931.0 208.6L932.6 208.5L934.2 208.4L935.9 208.4M957.7 218.7L957.8 218.8M957.6 224.0L957.7 224.1M936.7 222.3L937.5 222.9L937.8 223.8M955.0 208.2L955.1 208.3M957.6 213.0L957.7 213.1M946.8 218.0L946.9 218.8L946.3 219.5M948.0 209.7L948.1 209.8M954.5 208.0L954.4 209.4L955.0 210.6M950.3 223.6L950.4 223.7M943.7 220.6L943.2 221.0L943.4 221.7M932.9 234.7L933.0 234.8M992.3 227.1L992.5 228.6L993.3 229.9L994.5 230.7L995.9 231.1M993.9 222.6L995.1 221.5M991.9 230.2L993.0 230.0L994.0 230.5M965.9 235.1L967.0 234.7L967.9 235.5M958.6 215.9L959.1 216.7L959.4 217.6M994.3 246.2L995.0 247.5L996.2 248.3L997.6 248.6M990.5 246.2L990.7 248.0L991.2 249.7L992.0 251.3M995.1 247.5L996.0 249.0L997.4 250.1L999.1 250.5M991.6 245.5L992.6 246.6L994.0 247.1L995.5 246.8M998.0 236.7L998.4 237.8L997.9 239.0M1002.9 242.2L1004.2 243.2L1004.8 244.7L1004.5 246.3M1006.0 246.8L1005.0 246.6L1004.3 247.4M1011.5 239.2L1010.7 240.5L1009.2 240.8M1013.3 240.9L1014.9 240.3L1015.6 238.7M1014.5 250.1L1015.4 248.7L1016.6 247.6L1018.1 246.9M1025.6 256.3L1025.9 254.6L1027.6 254.2M1025.2 275.2L1024.6 273.5L1024.1 271.8L1023.8 270.1M1033.9 281.4L1032.2 280.6L1030.7 279.5L1029.4 278.3M1028.2 263.8L1027.0 264.1L1025.7 264.1M1033.5 273.3L1033.2 274.5L1032.1 275.0M1035.4 277.2L1036.6 276.1L1038.2 276.4M1025.7 276.5L1025.4 275.3L1026.4 274.5M1028.1 277.4L1028.0 279.0L1027.0 280.3M1006.1 289.8L1006.3 291.3L1006.0 292.7L1005.0 293.8L1003.7 294.7L1002.1 295.4L1000.6 295.8L999.2 295.9L998.0 295.5L996.8 294.7L995.7 293.5L994.9 291.9L994.5 290.2L994.7 288.5L995.5 287.0L996.7 285.9L998.0 285.2L999.3 284.8L1000.6 284.7L1002.0 285.0L1003.4 285.5L1004.8 286.4L1005.8 287.5L1006.4 289.0L1006.3 290.6M994.1 282.3L995.0 282.9L995.4 283.8M994.9 272.5L994.3 272.9L993.9 273.5M992.3 272.5L992.7 273.0L993.3 273.1M998.5 260.7L997.9 260.8L997.3 260.9M996.2 256.7L996.3 257.5L995.6 257.7M995.2 257.9L995.3 258.0M1011.8 301.8L1012.8 300.6L1013.8 299.3L1014.8 297.9L1015.7 296.6M995.3 310.4L996.3 309.1L997.3 308.0L998.5 306.9L999.7 305.9L1001.0 305.0M1001.3 313.2L1002.2 311.9L1003.1 310.6L1004.1 309.4L1005.1 308.1L1006.1 307.0M1035.1 314.1L1033.4 314.5L1032.1 313.4M1033.6 315.9L1034.7 315.8L1035.6 316.3M1030.2 305.7L1031.8 305.5L1033.2 304.6L1033.9 303.1L1033.9 301.4M1035.0 291.2L1036.4 291.9L1037.0 293.3M1031.7 308.5L1030.6 309.3L1029.5 309.9M1035.4 303.8L1036.4 304.7L1036.9 306.0M1038.3 300.1L1037.2 301.5L1036.9 303.3M1024.7 307.3L1025.0 308.8L1025.9 310.1L1027.1 311.1L1028.6 311.6M1028.2 293.3L1028.3 292.1L1029.4 291.5M1027.7 293.2L1029.3 292.1L1030.7 290.8M1026.5 296.5L1028.0 295.9L1029.1 294.9L1029.8 293.4L1029.7 291.8M1029.8 299.7L1030.0 298.2L1031.1 297.2M1024.4 295.8L1022.8 295.1L1021.4 294.0L1020.4 292.5M1020.3 286.2L1021.6 285.4L1022.6 284.2M1022.5 285.3L1020.8 286.0L1019.1 286.7M1023.6 289.2L1022.9 287.9L1022.4 286.6L1022.1 285.2M1024.1 326.4L1022.5 326.8L1021.0 327.5L1019.7 328.3L1018.4 329.3M1018.8 313.0L1018.3 311.4L1019.2 310.0M1022.6 318.2L1023.4 316.8L1024.7 315.7L1026.3 315.1M1021.1 319.6L1021.4 318.0L1020.4 316.8M1020.2 321.9L1018.8 321.3L1017.8 320.2L1017.3 318.7L1017.5 317.2M1022.1 315.7L1020.5 315.7L1019.1 315.0L1018.0 313.9M1009.0 333.1L1008.7 334.4L1008.1 335.7L1007.2 337.0L1006.2 338.2L1005.2 339.4L1004.2 340.4L1003.0 341.1L1001.6 341.6L1000.0 341.8L998.4 341.7L996.8 341.3L995.5 340.8L994.3 340.2L993.2 339.5L992.2 338.6L991.2 337.5L990.3 336.2L989.7 334.7L989.4 333.1L989.5 331.5L989.8 329.9L990.2 328.5L990.6 327.2L991.3 326.1L992.1 325.0L993.3 324.1L994.7 323.2L996.2 322.5L997.7 322.0L999.0 321.8L1000.3 321.9L1001.7 322.3L1003.1 323.0L1004.6 323.8L1005.9 324.8L1006.9 325.8L1007.6 326.9L1008.1 328.1L1008.4 329.5L1008.7 331.0L1008.9 332.6M1008.8 331.2L1008.8 332.7L1008.6 334.3L1008.2 335.8L1007.7 337.3L1006.9 338.6L1005.8 339.7L1004.6 340.6L1003.2 341.4L1001.8 342.0L1000.3 342.3L998.8 342.5L997.3 342.4L995.8 342.1L994.3 341.5L992.9 340.7L991.7 339.7L990.7 338.5L989.9 337.2L989.3 335.8L988.9 334.3L988.7 332.8L988.7 331.3L989.0 329.8L989.6 328.3L990.4 326.9L991.4 325.7L992.5 324.6L993.7 323.8L995.1 323.1L996.5 322.7L998.1 322.5L999.7 322.6L1001.3 322.8L1002.7 323.2L1004.0 323.9L1005.2 324.8L1006.3 325.9L1007.3 327.2L1008.1 328.6L1008.6 330.1L1008.8 331.6M1008.4 332.8L1008.4 334.5L1008.1 336.0L1007.4 337.3L1006.2 338.5L1004.9 339.6L1003.6 340.6L1002.3 341.6L1001.1 342.3L999.7 342.8L998.1 342.9L996.3 342.6L994.5 341.9L993.0 341.0L991.8 340.0L990.9 338.9L990.1 337.8L989.3 336.5L988.5 335.1L987.9 333.5L987.8 331.7L988.1 329.9L988.8 328.1L989.6 326.5L990.4 325.1L991.2 324.0L992.2 323.1L993.5 322.4L995.1 321.8L996.9 321.3L998.6 321.0L1000.2 321.0L1001.5 321.3L1002.7 322.0L1004.0 323.0L1005.4 324.3L1006.7 325.7L1007.7 327.1L1008.2 328.5L1008.4 330.0L1008.3 331.5M949.0 322.9L949.1 323.0M957.4 320.8L957.5 320.9M956.2 323.2L956.3 323.3M949.4 325.6L950.5 325.7L951.4 326.4M947.8 341.7L947.9 342.3L947.6 342.8M980.8 316.3L981.6 316.9L982.7 316.8M983.5 322.0L982.6 322.9L981.4 322.8M986.1 318.0L986.2 318.1M985.2 318.0L985.3 318.1M968.6 311.0L968.4 312.0L968.7 312.9M966.5 311.9L965.3 312.8L964.2 313.8M963.2 311.6L963.3 311.7M966.2 309.7L966.3 309.8M1014.2 336.4L1015.6 336.8L1017.0 336.9L1018.4 336.9L1019.8 336.8M1016.0 341.9L1014.4 341.6L1012.7 341.5M1016.3 336.0L1015.2 337.3L1013.9 338.3L1012.4 339.1L1010.8 339.7M1018.2 335.8L1017.6 334.4L1018.2 333.1L1019.5 332.4M1014.5 343.0L1013.7 341.7L1012.5 340.7L1011.1 340.0L1009.6 339.7L1008.1 339.8M1014.3 341.5L1012.9 340.9L1012.0 339.8L1011.6 338.4M1012.8 338.7L1014.2 338.8L1015.6 338.7L1017.0 338.7L1018.4 338.6L1019.8 338.5M1011.5 335.0L1012.4 334.0L1013.1 332.7L1013.5 331.4L1013.6 329.9M1012.3 337.4L1011.0 336.5L1009.5 336.7M1011.9 334.6L1014.0 334.7L1016.0 334.8M1029.1 337.8L1030.5 337.6L1032.0 337.6L1033.4 337.7L1034.8 338.0M1026.9 350.2L1025.5 351.7L1025.2 353.8M1019.0 345.6L1017.6 346.1L1017.6 347.7M1026.1 353.6L1025.7 355.5L1025.4 357.3M1028.2 337.0L1027.7 338.5L1027.3 339.9L1027.0 341.4L1026.8 342.9M1024.7 334.6L1023.3 335.0L1021.8 334.7L1020.7 333.8L1020.1 332.4M1029.5 344.4L1027.7 344.2L1026.2 343.3L1025.2 341.8M1037.5 339.8L1038.5 338.0L1040.3 337.0M1010.9 355.2L1011.9 354.1L1013.0 353.2M1004.9 368.4L1006.0 367.6L1006.7 366.5M1021.3 355.6L1019.8 356.0L1018.3 356.2L1016.7 356.4M1007.7 361.1L1005.9 361.1L1004.2 361.8M1019.7 350.6L1018.0 350.5L1016.4 350.1L1014.9 349.6L1013.4 348.9M1018.5 352.5L1016.9 351.4L1015.8 349.9M1003.8 358.6L1004.7 359.8L1005.7 360.8M1009.5 370.8L1008.2 372.2L1006.3 372.1M1005.9 357.7L1007.3 356.7L1008.8 355.9L1010.3 355.2L1011.9 354.6M1008.7 357.0L1007.1 358.0L1005.3 357.6L1004.2 356.1M1016.4 359.8L1018.1 358.7L1019.4 357.1M1009.1 358.4L1010.2 359.5L1010.6 361.0L1010.3 362.5L1009.2 363.7M996.9 375.3L998.6 375.1L1000.2 374.5M999.1 375.6L999.9 374.4L1001.1 373.5L1002.5 373.0L1004.0 373.0M990.5 380.9L989.3 380.7L988.1 380.7M1004.0 381.0L1002.4 381.1L1001.1 380.4L1000.2 379.1L1000.1 377.6M1008.5 373.5L1009.0 374.9L1009.4 376.5L1009.7 378.0L1009.9 379.5M998.8 374.9L997.3 374.2L996.0 375.1M1001.2 374.1L999.2 373.9L998.0 372.3M1015.6 360.8L1016.5 362.3L1016.2 364.0L1014.9 365.1M1016.8 371.5L1014.9 372.2L1013.3 373.5M1014.1 366.3L1012.8 366.9L1011.4 367.4L1010.0 367.7M1014.9 360.9L1015.6 362.1L1015.4 363.5L1014.4 364.5M1021.9 367.9L1021.9 369.3L1022.2 370.7M1040.1 321.1L1038.3 320.6L1036.6 319.7M1038.7 318.4L1039.2 317.0L1038.6 315.8M1037.5 320.3L1037.9 319.0L1039.2 318.8M1036.9 323.4L1036.1 321.8L1034.6 321.0L1032.9 321.3M1040.5 327.2L1039.9 328.7L1040.4 330.2M1036.6 317.2L1036.2 315.7L1035.5 314.3L1034.4 313.2M1038.6 315.4L1037.6 314.3L1037.5 312.7L1038.2 311.4M965.9 353.3L966.4 351.9L967.6 351.2L969.0 351.4M961.0 352.1L961.6 350.6L963.1 350.0M963.4 355.8L962.3 354.0L962.0 352.0M958.3 357.0L958.5 358.3L959.7 359.1M957.3 351.8L958.8 351.2L960.2 350.4L961.5 349.3M960.5 350.9L961.2 352.6L960.0 354.0M958.1 357.5L958.7 356.2L959.6 355.2M971.3 360.8L971.4 360.9M992.2 350.3L990.6 350.4L989.0 350.7L987.5 351.3M991.5 351.3L992.4 351.9L992.4 352.9M998.5 349.2L997.1 348.6L995.7 348.5L994.2 348.9L993.0 349.6M994.7 354.2L993.5 353.4L992.8 352.2M1001.7 349.2L999.7 349.8L998.4 348.2M992.5 350.4L991.8 351.4L991.4 352.6M983.8 388.5L983.9 388.6M973.9 386.6L975.0 386.9L976.2 386.9M979.8 384.8L979.9 384.9M983.0 388.6L983.7 388.9L984.3 389.2M981.5 383.9L982.0 385.1L981.7 386.4M958.8 391.4L957.8 392.6L956.8 393.7M977.7 398.5L976.6 398.4L975.6 397.6M996.0 398.1L994.2 397.6L992.5 398.4L991.9 400.1M993.8 397.5L992.3 397.7L991.0 397.1L990.2 395.8L990.1 394.4M992.7 393.1L991.4 392.2L989.9 392.3M981.6 398.6L980.0 398.5L978.7 397.7L977.9 396.3L977.9 394.7M978.0 399.8L979.0 401.1L980.5 401.8L982.2 401.6M967.6 406.0L968.9 405.6L970.0 406.4M974.3 409.3L973.5 407.5M948.7 414.3L950.1 413.9L951.3 413.0L951.9 411.8L952.0 410.3M952.1 413.0L951.3 411.5L950.1 410.3L948.6 409.7M953.5 412.8L955.1 413.1L956.4 414.2M957.1 411.9L958.6 411.6L960.1 411.6L961.5 411.8L962.9 412.2M971.0 409.3L970.0 410.6M957.5 409.9L958.8 408.8L960.6 408.8L961.9 410.0M955.9 406.3L954.5 406.3L953.0 406.2L951.6 406.2M953.0 408.3L952.2 406.5L953.3 404.8M950.8 408.6L949.9 407.2L948.7 406.1L947.4 405.2L945.9 404.6M953.5 409.9L951.8 410.4L950.5 411.4L949.6 412.9L949.3 414.6M944.7 406.9L943.2 407.7L941.9 408.7M936.6 400.7L938.1 401.1L939.1 402.2M940.4 404.7L938.8 405.3L937.1 405.3L935.5 404.6L934.3 403.4M1004.4 387.3L1002.7 386.6L1000.9 386.4L999.1 386.6M997.0 395.4L996.2 394.7L995.2 394.2M993.6 394.3L993.4 392.9L993.2 391.5L993.1 390.1L993.1 388.7M1005.1 390.4L1004.8 389.4L1004.9 388.4M928.5 380.5L928.7 378.8L927.7 377.3L926.0 376.9M922.0 377.8L920.9 376.8L920.4 375.4L920.7 373.9M938.7 375.7L938.3 374.3L937.6 373.0L936.6 371.9L935.5 371.0L934.2 370.4M925.4 376.3L924.6 375.1L924.4 373.7L924.8 372.3L925.7 371.2M929.5 377.5L929.0 378.9L928.7 380.5L928.7 382.0L928.9 383.6L929.5 385.1M937.0 375.9L934.9 375.8L933.2 376.9M920.4 378.3L918.7 378.6L917.3 377.5L917.0 375.8M935.1 372.5L936.6 372.9L938.0 372.4L939.0 371.2L939.1 369.7M910.4 375.7L911.0 374.5L912.2 373.7L913.6 373.6L914.9 374.2M915.0 364.9L916.4 365.9L917.8 366.9L919.1 367.9L920.4 369.1M916.0 367.7L917.4 368.9L918.3 370.5M916.2 373.6L918.0 373.6L919.5 372.8M912.5 371.7L911.7 370.3L910.6 369.3L909.2 368.5M824.1 341.8L824.2 341.9M875.5 341.8L874.1 341.8L873.2 342.9M873.7 343.0L873.8 343.1M876.3 335.6L876.4 335.7M866.0 314.3L867.5 314.2L869.0 314.0L870.5 313.9L872.0 313.7M866.1 314.7L867.9 314.7L869.8 314.9M911.9 328.8L911.6 329.4L911.8 330.1M915.7 321.6L915.8 321.7M894.4 334.2L894.5 334.3M891.0 346.5L891.1 346.6M892.6 335.7L891.9 336.7L890.7 336.7M857.9 360.7L857.7 359.2L858.5 357.8M881.8 363.7L883.2 364.5L884.7 364.5M871.0 377.3L870.7 377.8L870.8 378.3M880.8 364.9L882.0 365.4L883.3 365.8M857.1 363.4L856.3 364.6L855.9 366.0M870.1 369.6L870.2 369.7M877.1 372.6L877.4 373.1L877.7 373.5M871.7 369.0L871.8 369.1M859.6 369.6L860.6 370.0L860.7 371.0M898.5 385.7L897.8 386.8L896.7 387.8L895.4 388.5L893.9 389.0L892.4 389.1L890.9 388.8L889.5 388.2L888.3 387.3L887.4 386.2M898.4 386.3L897.7 387.3L896.5 388.2L895.0 388.8L893.2 389.0L891.3 389.0L889.6 388.7L888.1 388.1L887.0 387.3L886.2 386.3M900.5 381.2L900.6 381.3M895.4 378.0L895.5 378.1M864.0 390.2L862.9 388.7L861.4 387.7L859.7 387.2M877.4 396.5L878.1 395.1L878.6 393.6L878.8 392.0M874.8 390.5L875.4 389.0L874.8 387.5M869.1 386.7L868.6 385.2L868.7 383.6L869.1 382.1M875.3 398.2L875.6 397.0L876.8 396.6M865.8 395.1L866.8 393.5L868.3 392.4L870.1 392.0M877.4 394.2L876.7 393.0L875.4 392.6M883.0 393.0L881.5 393.5L880.0 394.0L878.6 394.5M873.7 397.3L872.4 397.7L871.5 398.7M865.4 394.4L866.6 395.0L868.0 394.5M893.3 405.9L894.5 406.3L895.1 407.4M891.4 401.4L893.1 401.9L894.9 402.4M888.4 405.8L889.2 404.5L890.1 403.4L891.2 402.4L892.3 401.5M888.0 406.4L886.8 405.6L886.0 404.4L885.9 402.9L886.3 401.5M888.1 398.8L886.4 399.3L885.5 401.0L886.0 402.7M882.9 402.4L883.8 402.9L884.6 403.6M895.2 402.1L896.3 403.0L895.9 404.5M885.6 407.0L884.5 406.7L884.4 405.6M886.8 398.7L887.9 397.8L889.3 397.6M902.9 403.1L903.8 401.8L905.3 401.2M880.9 402.1L879.9 401.6L879.0 402.3M900.0 402.4L898.6 401.8L897.8 400.5M893.2 407.0L891.7 407.4L890.2 407.9L888.7 408.4M910.0 411.2L908.0 412.0L906.3 413.1M929.3 411.5L929.6 413.0L929.7 414.6M922.9 407.4L924.4 406.6L925.1 405.1M923.5 406.4L923.8 404.4L922.3 403.0M913.4 412.4L911.8 411.4L910.0 412.0M912.0 411.1L912.9 413.0L914.2 414.6M911.7 413.1L912.6 413.9L913.6 414.8M917.6 409.3L916.0 408.8L914.6 409.8M921.5 408.2L919.8 407.1L920.1 405.1M929.2 408.0L930.2 408.9L931.5 409.1M843.4 244.2L843.5 244.3M848.1 321.5L848.4 322.9L847.8 324.2M848.5 333.9L848.0 334.4L848.3 335.0M910.9 353.7L911.0 353.8M906.1 349.6L906.2 349.7M900.6 354.3L901.7 355.4L903.1 355.9M962.2 302.0L962.3 302.1M988.8 248.5L988.9 248.6" stroke-width="2.2"/><path d="M884.2 222.4L885.6 221.5L887.1 220.7L888.5 219.8L889.9 218.9M887.6 216.6L889.3 216.6L891.0 216.7L892.7 217.0L894.4 217.4M884.9 224.1L886.4 223.5L888.0 222.8L889.5 222.1M883.4 220.8L885.1 221.0L886.8 221.5L888.3 222.4L889.6 223.6M893.4 216.4L894.5 215.1L895.3 213.5L895.6 211.8L895.5 210.1M886.1 220.5L887.4 219.2L888.1 217.4M882.2 226.0L884.0 225.6L885.9 226.1M883.4 225.3L885.1 224.9L886.8 224.6L888.5 224.5L890.2 224.6M876.3 226.9L877.8 226.8L879.3 227.0L880.7 227.3L882.1 227.9M879.4 226.9L880.3 225.6L881.0 224.2L881.6 222.8M882.3 224.3L881.6 222.8L880.0 222.6M876.3 224.5L875.3 223.2L874.2 222.1L873.1 221.0M879.1 226.9L877.8 226.5L877.2 225.4M850.1 246.3L849.5 247.9L848.8 249.4L847.9 250.9M848.5 253.3L848.2 254.7L847.7 256.0L846.8 257.1L845.8 258.1M830.4 281.9L830.5 282.0M832.4 278.5L830.9 279.0L829.4 278.5M856.8 280.5L855.4 280.5L854.2 281.2M856.4 275.1L856.5 275.2M856.1 278.7L856.2 278.8M856.5 299.9L856.6 300.0M856.6 303.6L856.7 303.7M822.3 299.1L822.4 299.2M909.6 205.6L908.9 206.8L909.2 208.2M913.3 231.9L913.1 232.5L912.4 232.6M917.0 232.9L917.1 234.0L918.1 234.5M907.9 230.8L908.0 230.9M933.3 216.4L934.9 215.7L936.6 216.0L937.8 217.3M927.9 208.9L927.2 210.4L926.3 211.8L925.3 213.2M937.4 212.3L937.7 213.7L936.5 214.6M931.5 208.7L933.0 209.5L933.8 211.0L933.8 212.7M927.8 214.9L926.6 215.1L925.5 215.4M932.2 216.4L932.3 214.8L932.0 213.2M933.6 208.2L932.5 206.8L933.2 205.2M928.6 217.4L928.0 216.1L927.1 215.0L925.9 214.2M925.3 214.5L926.2 215.8L927.3 217.0L928.6 218.0M928.6 211.5L927.6 211.7L926.6 211.3M933.1 208.2L931.8 207.0L931.6 205.2M931.9 213.2L933.1 214.0L932.8 215.5M952.5 224.7L952.6 224.8M955.3 210.8L955.4 210.9M953.1 208.5L953.2 208.6M942.4 221.0L941.6 222.2L940.9 223.6M944.6 222.1L944.7 222.2M948.1 227.0L948.2 227.1M948.9 218.8L949.9 218.6L950.4 219.5M996.4 226.4L997.1 224.9L996.7 223.3M999.8 227.0L1001.2 227.9L1002.9 227.7M1000.6 229.6L1001.0 227.9L1002.2 226.7M996.1 224.8L995.8 223.1M996.8 223.7L995.3 223.9M997.6 229.6L996.4 230.4L995.0 230.4L993.7 229.8L992.9 228.6M966.3 236.3L966.3 237.1L967.1 237.5M992.9 246.8L992.8 248.5L992.1 250.1L990.9 251.4M992.7 239.8L993.5 241.2L994.5 242.5L995.8 243.5M1006.7 238.2L1008.7 238.4L1010.7 239.0M1006.9 244.2L1005.6 244.6L1004.6 243.8M1007.8 241.1L1009.0 241.0L1010.1 240.5M1000.0 241.6L1001.0 242.7L1002.0 243.9L1002.8 245.1M997.0 238.2L997.6 239.1L998.3 239.9M1014.7 252.4L1013.8 250.9L1012.1 250.1L1010.4 250.4M1024.2 257.9L1025.3 256.8L1026.5 255.9L1027.8 255.2M1014.5 247.4L1013.3 246.3L1012.4 244.9L1012.0 243.3M994.0 279.2L994.1 279.3M992.9 284.6L993.0 284.7M1031.5 300.7L1032.4 301.7L1033.0 303.0M1035.4 319.4L1034.2 318.9L1032.9 318.8M1037.3 301.8L1038.1 303.1L1039.1 304.2M1030.1 303.7L1030.3 304.7L1031.3 305.1M1035.4 297.3L1034.4 297.0L1033.3 296.8M1038.2 313.0L1037.4 314.4L1036.9 316.0L1037.0 317.6M1025.2 308.2L1026.7 309.3L1028.6 309.0L1029.7 307.5M1037.0 312.6L1038.4 312.5L1039.9 312.7L1041.2 313.2M1027.5 303.1L1026.1 302.1L1025.5 300.5M1037.3 292.9L1036.2 294.6L1037.0 296.5M1030.7 297.8L1029.5 298.0L1028.5 298.6M1034.6 318.0L1034.7 319.6L1034.9 321.1L1035.4 322.6L1036.1 324.0M1028.1 312.2L1029.0 313.1L1029.9 313.9M1039.2 300.2L1040.6 300.3L1041.8 301.0L1042.5 302.3L1042.6 303.7M1037.7 315.2L1036.0 315.8L1034.2 316.3L1032.4 316.5M1029.2 302.8L1029.9 301.5L1031.2 300.9L1032.7 301.1L1033.8 302.0M1021.1 315.4L1019.6 315.3L1018.2 315.6L1016.9 316.3L1015.9 317.3M1018.7 311.3L1019.5 310.1L1020.4 309.1L1021.3 308.1M1026.8 318.9L1025.2 318.6L1024.0 317.5L1023.8 315.8M1018.0 320.7L1018.6 322.5L1020.3 323.2M1015.1 318.6L1016.7 317.8L1018.2 316.8M1015.9 314.1L1015.2 316.0L1016.0 317.9M1020.6 322.2L1021.0 323.7L1020.3 325.1L1019.0 325.8M1015.7 312.8L1015.4 311.4L1014.8 310.1L1014.0 308.9L1013.0 307.9M1025.3 325.6L1026.4 326.0L1027.3 326.6M952.3 315.7L953.6 316.5L955.1 316.5M947.0 348.3L946.4 348.8L945.9 349.3M983.7 316.4L983.9 318.0L984.2 319.5M980.8 319.8L980.9 319.9M1011.8 337.6L1012.7 339.1L1014.3 339.9L1016.0 339.8L1017.4 338.8M1015.1 336.2L1013.8 337.3L1012.2 337.8L1010.5 337.7L1008.9 337.0M1012.4 328.6L1014.1 328.1L1015.8 328.7L1016.9 330.0M1015.3 333.9L1016.8 334.5L1018.2 335.5L1019.3 336.9L1020.0 338.4M1014.6 342.9L1013.6 344.2L1013.4 345.9M1011.9 334.5L1012.1 332.8L1011.5 331.2L1010.3 330.0M1012.9 336.8L1014.3 337.9L1016.1 338.4M1011.0 339.0L1012.3 338.1L1013.6 337.2L1014.7 336.1L1015.8 335.0M1014.1 331.0L1013.4 332.9L1013.4 334.8M1016.1 333.5L1017.6 333.8L1018.9 334.6L1019.9 335.8L1020.5 337.2L1020.7 338.7M1013.8 335.8L1014.9 334.5L1016.6 334.4L1017.9 335.4M1014.3 324.8L1013.2 323.6L1011.7 323.0L1010.0 323.1M1011.4 331.1L1013.1 331.8L1014.9 331.3L1016.0 329.9M1011.3 339.0L1009.9 338.2L1008.3 338.3L1006.9 339.2M1015.1 326.2L1015.6 328.0L1016.5 329.5M1022.4 337.6L1022.9 338.5L1023.7 339.2M1027.0 342.2L1028.4 341.8L1029.8 342.4L1030.6 343.6M1024.9 334.0L1025.4 332.1L1026.8 330.8M1020.7 338.9L1020.3 337.4L1019.4 336.2L1018.2 335.3M1024.1 343.8L1025.0 342.6L1026.0 341.6L1027.2 340.6L1028.4 339.9M1031.2 336.7L1030.4 338.2L1030.3 339.8L1030.9 341.4L1032.2 342.4M1035.7 340.0L1036.1 341.2L1037.2 341.8M1031.4 342.9L1032.3 342.3L1033.3 342.1M1020.6 341.9L1019.7 343.3L1018.1 344.1L1016.4 344.0L1015.0 343.1M1027.2 327.0L1028.3 328.1L1028.5 329.7L1027.9 331.2L1026.6 332.1M1012.2 351.8L1012.4 353.4L1012.9 355.0L1013.8 356.5M1007.8 351.6L1006.4 351.6L1005.3 350.8M1021.3 363.0L1020.2 364.0L1019.6 365.5L1019.9 367.0L1020.8 368.2M1015.2 372.2L1013.8 373.0L1014.1 374.6M1007.0 352.1L1005.2 351.6L1004.4 350.0L1004.8 348.3M1009.8 356.1L1010.7 357.6L1011.7 359.1M1023.4 362.4L1021.8 361.3L1020.1 360.3M1019.8 349.9L1018.9 349.0L1017.8 348.3M1017.5 350.0L1016.5 351.2L1017.3 352.6M1002.7 358.5L1004.0 357.6L1005.3 356.6L1006.5 355.5L1007.6 354.5M1011.1 368.3L1009.3 368.7L1007.5 368.3L1006.2 367.1M1006.8 360.7L1005.8 359.7L1004.5 360.0M1021.9 356.4L1020.3 356.7L1018.7 356.8L1017.0 356.6L1015.4 356.3M1013.3 367.1L1014.1 368.6L1014.1 370.3L1013.4 371.9L1012.0 373.0M1010.9 354.4L1010.7 353.0L1011.3 351.7L1012.4 350.9L1013.8 350.8M1005.5 352.5L1006.1 351.0L1006.7 349.4L1007.2 347.7L1007.7 346.1M1012.7 347.6L1011.4 346.7L1010.2 345.6L1009.2 344.3L1008.5 342.8M1007.3 356.5L1006.3 356.1L1005.3 355.8M1020.6 360.3L1022.0 359.4L1023.2 358.2L1024.1 356.8M999.0 374.6L999.6 373.2L999.4 371.8L998.6 370.6M1001.2 374.4L999.6 373.5L998.7 371.9L998.8 370.1M995.2 385.7L993.9 385.0L993.4 383.7L993.8 382.3M1001.7 384.1L1000.2 383.4L998.6 383.1L997.0 383.4L995.6 384.2M998.4 371.1L999.8 370.4L1000.7 369.2L1000.9 367.6M1004.2 381.5L1002.7 381.1L1001.4 380.5L1000.1 379.7L998.9 378.8M998.9 382.0L1000.5 381.9L1002.1 381.5L1003.6 380.9M1001.5 369.9L1001.6 371.4L1002.0 372.8L1002.6 374.2L1003.4 375.4M1022.3 364.1L1023.6 363.8L1025.0 363.6L1026.4 363.6L1027.9 363.8M1035.8 328.6L1035.0 329.8L1034.4 331.1M963.5 352.1L965.3 352.4L967.0 352.9M969.5 361.1L969.6 361.2M984.1 402.3L983.1 402.6L982.0 402.7M977.3 400.9L976.4 399.8L975.2 399.0L973.8 398.6L972.4 398.7M979.4 402.2L978.1 402.4L977.0 403.0M948.1 413.3L948.6 414.3L948.4 415.5M951.6 412.9L951.9 411.3L953.3 410.3M947.2 409.4L947.3 408.2L947.7 407.1M953.3 407.8L952.7 409.2L953.1 410.6L954.4 411.3M874.3 340.0L874.4 340.1M905.1 338.6L903.4 338.3L901.8 337.4L900.8 336.0L900.4 334.4L900.8 332.8L901.8 331.4L903.3 330.5L904.9 330.2M853.9 369.3L852.6 368.8L851.4 369.4M879.7 373.3L879.6 374.3L879.4 375.3M856.9 366.7L857.0 366.8M855.6 373.9L855.7 374.0M891.0 366.4L891.7 367.5L891.9 368.8M858.0 366.0L858.1 366.1M860.1 370.8L860.2 370.9M863.9 365.7L864.0 365.8M869.9 368.9L870.7 369.2L870.8 370.2M866.5 362.4L866.0 363.5L865.1 364.4M879.6 366.9L879.7 367.0M859.6 371.5L860.6 371.2L861.4 371.9M849.9 369.5L850.5 370.4L851.3 371.1M880.4 377.7L879.8 379.1L878.5 379.9M853.1 366.2L854.1 366.7L855.1 367.2M883.1 366.5L883.2 366.6M864.4 378.2L865.2 378.5L866.1 378.6M866.4 362.3L865.6 362.3L865.1 362.9M831.4 355.5L830.9 356.4L831.1 357.3M907.4 354.6L908.7 355.3L910.2 354.9M985.0 240.9L983.8 241.6L983.5 243.0" stroke-width="2.4"/><path d="M890.1 216.9L891.7 216.7L893.2 217.4M876.8 225.7L878.7 225.4L880.4 226.1M879.0 226.6L880.2 225.6L881.6 224.6M850.1 254.2L849.7 255.8L849.7 257.5L850.0 259.1M852.0 250.5L851.0 252.2L849.5 253.5M914.6 233.3L914.7 233.4M959.2 222.3L959.3 222.4M950.0 209.6L951.3 209.8L952.4 210.4M941.5 212.8L941.6 212.9M1011.9 333.0L1010.4 332.0L1008.7 331.8M1012.4 328.2L1013.7 326.7L1015.6 326.5M1015.2 336.8L1013.7 337.4L1012.8 338.7L1013.0 340.3M1018.6 330.8L1019.1 329.3L1019.8 327.8M1018.1 335.3L1016.7 335.5L1015.3 335.3L1014.0 334.9L1012.7 334.4M905.6 338.3L903.9 338.4L902.2 337.8L901.0 336.6L900.3 335.0L900.4 333.3L901.2 331.8L902.5 330.7L904.2 330.2" stroke-width="2.6"/><path d="M878.8 222.8L880.2 222.3L881.5 221.6L882.7 220.7L883.6 219.5M893.3 217.5L893.8 216.0L893.7 214.5L893.1 213.0M875.5 228.0L877.0 227.3L878.3 226.3L879.5 225.2M1014.3 333.6L1012.8 334.7L1012.5 336.4M1014.4 334.6L1013.3 335.8L1012.4 337.3L1011.9 338.8L1011.7 340.5" stroke-width="2.8"/></g>
<ellipse cx="931.2" cy="310.0" rx="114.2" ry="109.2" fill="none" stroke="#000" stroke-width="2.7"/>
<circle cx="926.4" cy="279.6" r="0.9" fill="#000"/>
<g fill="none" stroke="#000" stroke-linecap="round" stroke-linejoin="round"><path d="M603.4 390.2L604.2 391.2L604.7 392.7L605.3 394.2M593.8 417.3L594.6 418.7L595.1 419.7L595.1 420.6L596.0 421.7M595.9 430.3L596.9 431.9" stroke-width="1.2"/><path d="M601.2 382.2L601.9 383.2L602.4 384.3L603.5 385.5M606.2 394.8L607.1 395.3L607.4 396.2L607.8 397.4M597.6 381.0L598.0 381.8M602.2 389.5L602.4 390.6L603.1 391.6L603.9 392.9L604.2 394.0M598.9 389.8L599.2 391.5L599.9 392.7L600.8 394.2L601.4 395.2M601.7 396.1L602.5 396.7L602.6 397.5M598.5 392.0L600.0 392.0L601.5 392.4L602.6 393.4M599.0 392.6L600.7 391.7L602.3 392.6M624.7 378.8L623.4 379.0L622.8 380.2M605.3 400.3L606.4 401.0L607.6 401.5M614.2 408.7L613.5 406.9L612.6 405.3L611.6 403.8M606.4 407.0L607.7 407.7L608.5 409.0L608.4 410.5L607.6 411.8M596.6 411.2L597.0 412.5L597.7 413.8L598.1 415.2M595.8 411.3L596.2 412.5M593.1 414.1L593.5 415.4L594.3 416.8M596.5 422.6L596.9 423.9L597.5 425.6L598.0 426.8L598.7 427.6M592.2 417.5L593.0 419.4L593.8 420.5L593.8 421.9L594.6 423.4M591.6 424.8L592.3 426.3M584.4 396.7L585.1 396.9L585.9 397.3L586.6 398.1L587.2 399.0L587.6 400.2L587.8 401.5L587.9 402.9L587.8 404.5L587.7 406.1L587.5 407.8L587.2 409.5L586.7 411.0L586.0 412.3M675.3 386.8L673.8 386.7L672.7 385.7M677.3 389.5L676.0 390.7L674.3 390.4M677.9 383.8L679.4 384.0L680.6 385.0M678.1 391.1L678.1 392.6L677.8 394.1L677.3 395.6M682.8 386.2L682.0 384.5L680.7 383.0M670.1 386.6L670.5 388.2L671.2 389.7M671.2 388.6L670.2 390.0L670.9 391.6M675.2 426.3L673.8 427.1L672.8 428.4M676.1 426.6L674.0 426.9L672.0 427.3M680.6 418.8L678.8 419.1L677.6 420.3L677.3 422.0M670.9 414.0L670.3 413.0L669.7 412.1M678.7 426.8L677.7 428.0L677.1 429.3L676.9 430.8" stroke-width="1.4"/><path d="M602.3 378.7L602.9 379.8L603.5 381.3L604.5 382.6M606.0 388.3L606.6 389.2L606.9 390.3L607.5 391.6L608.5 392.5L608.9 394.0M598.8 377.4L599.5 378.8L600.7 380.1L600.9 381.4M603.5 386.3L604.3 387.2L605.3 388.6L605.8 390.0L606.6 391.0L606.9 392.4L607.6 394.0M607.9 394.7L608.5 395.6L609.0 396.5L609.6 398.0M604.5 395.4L605.2 396.6L605.7 397.4M599.7 389.6L600.3 390.5L600.9 391.5L601.6 392.5M596.3 389.6L596.7 390.5L597.1 391.7L597.9 392.7M598.1 393.9L598.9 394.7L599.4 396.5L600.4 397.4M599.3 386.7L597.9 386.1L596.4 386.6L595.7 388.0M601.8 377.3L600.5 377.6L599.3 378.3M602.4 378.5L602.0 380.4L602.5 382.3M619.1 378.3L618.7 379.1L618.1 379.9M624.2 381.0L624.3 381.1M627.4 379.2L628.1 380.5L628.7 381.7L629.1 383.1L629.3 384.5L629.5 386.0L629.5 387.4L629.4 388.9L629.1 390.3L628.6 391.6L627.9 392.9M634.0 377.0L637.0 378.2M617.3 409.8L616.2 408.5L616.3 406.7L617.4 405.4M611.2 408.4L610.6 409.8L610.1 411.2L609.9 412.7L609.9 414.2M602.5 400.9L601.0 400.6L599.6 401.0L598.5 402.0L597.9 403.3M613.9 410.2L613.0 409.0L612.8 407.5L613.4 406.1M615.9 412.1L615.0 410.5L613.9 409.2L612.4 408.0M609.0 403.0L610.2 402.2L611.2 401.0L611.6 399.6L611.4 398.1M603.8 398.7L601.9 397.7L601.6 395.6M617.2 412.0L615.3 412.3L613.5 412.5L611.7 412.6M600.7 397.1L598.9 397.1L597.3 397.8L596.0 399.1M605.1 399.0L604.2 398.1L602.9 398.0M616.5 412.6L615.6 413.9L614.7 415.2M614.2 409.3L613.0 408.5L611.6 408.0L610.1 407.9M619.2 415.8L618.0 414.5L617.3 412.8M616.9 411.1L617.2 409.9L616.2 409.1M618.3 414.4L619.5 414.1L620.3 415.1M631.9 386.1L632.7 387.1L633.6 388.3L634.4 389.5L635.2 390.8L636.0 392.1L636.6 393.4L637.1 394.8L637.6 396.3L638.0 397.8L638.4 399.4L638.8 401.1L639.1 402.7L639.2 404.4L639.2 406.1L639.2 407.7L639.1 409.3L639.0 411.0L638.9 412.6L638.6 414.3L638.3 415.9M627.5 414.6L626.5 414.9L625.4 414.9M618.9 395.8L619.0 395.9M624.4 395.9L625.6 395.9L626.8 396.1M595.7 412.9L596.3 414.5L596.5 415.6L597.3 417.1L597.7 418.5L598.1 419.9L599.0 421.2M595.5 423.5L596.0 424.8L596.6 426.2L597.3 427.6L597.3 429.0L598.0 430.1L598.7 431.3M593.1 426.9L593.2 427.9M595.4 420.4L597.0 420.9L598.5 421.4M597.6 416.2L598.5 414.8L600.0 414.2L601.6 414.6M593.3 428.0L592.1 427.0L590.4 426.7L588.9 427.5M593.6 422.6L595.0 423.1L596.4 422.7L597.4 421.7M597.7 423.0L596.5 424.1L595.2 425.1L593.8 426.0M603.3 428.3L603.1 429.3L603.0 430.4M610.1 427.7L610.2 427.8M689.0 384.6L689.1 385.8L688.9 387.0L688.3 388.1L687.5 389.3L686.6 390.5L685.7 391.7L684.7 392.8L683.6 393.7L682.2 394.4L680.5 394.8L678.8 395.0L677.1 395.1L675.5 395.0L674.1 394.9L672.7 394.7L671.2 394.4L669.6 393.8L668.1 393.0L666.8 392.0L665.9 390.8L665.3 389.5L664.8 388.3L664.3 387.0L663.9 385.8L663.6 384.7L663.7 383.4L664.2 382.2L665.0 380.8L665.9 379.5L666.8 378.2L667.8 377.2L668.8 376.4L670.1 375.8L671.7 375.4L673.5 375.1L675.2 374.9L676.8 374.8L678.3 374.7L679.7 374.8L681.1 375.2L682.7 375.9L684.2 376.8L685.6 377.8L686.6 379.0L687.3 380.1L687.9 381.2L688.3 382.3L688.7 383.5L689.0 384.7L689.1 386.1M689.2 384.0L688.9 385.4L688.5 387.0L688.2 388.6L688.0 390.1L687.4 391.4L686.5 392.4L685.1 393.2L683.5 393.8L681.9 394.4L680.6 394.9L679.3 395.5L677.9 396.0L676.3 396.2L674.4 396.1L672.5 395.7L670.8 395.0L669.5 394.1L668.4 393.1L667.5 392.2L666.5 391.3L665.4 390.4L664.4 389.3L663.7 388.1L663.6 386.6L663.8 385.0L664.2 383.4L664.6 381.9L664.9 380.6L665.4 379.6L666.2 378.7L667.4 377.9L669.0 377.0L670.6 376.2L672.1 375.3L673.5 374.7L674.8 374.3L676.3 374.3L678.1 374.6L680.0 375.1L681.8 375.8L683.2 376.5L684.3 377.1L685.3 377.8L686.2 378.6L687.2 379.7L688.3 380.9L689.0 382.4L689.3 384.1L689.2 385.6L688.7 387.1M667.7 391.8L666.6 391.0L665.8 390.0L665.2 388.8L664.7 387.5L664.2 386.1L663.9 384.7L663.9 383.4L664.1 382.1L664.7 380.9L665.4 379.8L666.3 378.7L667.2 377.7L668.2 376.7L669.4 375.8M677.7 390.9L676.1 390.7L674.7 390.0M679.7 389.9L678.5 390.1L678.0 391.2M681.8 383.9L681.1 385.4L681.7 386.9M686.8 385.3L686.6 383.3L684.7 382.6M676.0 389.3L676.7 390.8L678.1 391.6L679.8 391.4M682.3 378.2L683.2 378.6L684.2 378.8M670.5 385.9L671.7 385.6L672.6 384.9M668.2 383.3L669.6 383.5L670.9 382.7M670.3 388.6L671.1 387.9L672.1 388.2M685.1 420.4L685.0 421.8L684.6 423.3L683.9 424.7L683.1 426.0L682.1 427.3L680.9 428.4L679.6 429.3L678.1 429.9L676.5 430.4L674.8 430.5L673.1 430.5L671.4 430.3L669.9 429.9L668.5 429.3L667.1 428.6L665.7 427.6L664.6 426.4L663.7 425.1L663.1 423.6L662.8 422.1L662.7 420.6L662.7 419.1L663.0 417.7L663.5 416.3L664.3 415.0L665.3 413.8L666.6 412.6L668.0 411.7L669.4 410.9L670.9 410.4L672.5 410.2L674.2 410.2L675.9 410.4L677.6 410.9L679.1 411.4L680.5 412.2L681.7 413.1L682.8 414.2L683.6 415.5L684.3 416.9L684.9 418.4L685.1 420.0L685.1 421.5M677.4 423.0L678.9 423.4L680.4 423.1L681.7 422.2M676.4 423.3L676.6 421.6L675.7 420.1L674.2 419.3M676.1 418.1L676.5 419.1L676.0 420.0M682.6 419.8L681.5 420.5L681.5 421.8M670.2 427.3L669.0 428.3L667.8 429.1L666.6 429.9L665.2 430.5M677.6 426.0L676.0 425.3L674.2 425.0L672.5 425.3M673.2 415.4L671.5 415.3L669.8 415.2L668.1 415.0M685.0 398.4L683.8 399.0L682.2 398.7L681.2 397.6L681.2 396.3M683.2 396.8L683.5 398.2L682.6 399.4M663.8 395.7L663.0 397.0L661.8 398.1M661.2 434.3L661.3 434.4" stroke-width="1.6"/><path d="M593.4 368.5L593.7 369.5L593.4 370.5L592.7 371.6L591.6 372.5L590.2 373.2L588.8 373.5L587.5 373.5L586.4 373.1L585.7 372.4L585.5 371.5L585.8 370.4L586.6 369.4L587.8 368.5L589.1 367.8L590.6 367.5L591.9 367.6L592.9 368.0L593.5 368.7M603.3 382.7L604.0 384.4L604.8 385.7L605.5 386.9M597.4 379.7L598.4 380.9L598.7 382.1L599.7 382.8M600.5 384.0L601.1 384.9L601.9 386.3L602.6 387.5L603.1 388.6M601.7 393.5L602.5 394.7L603.3 396.1L604.2 397.2M595.7 385.2L596.4 386.3L597.1 387.3L597.4 388.5L598.0 389.3M598.4 388.2L597.3 387.3L596.2 386.5L595.0 385.7M605.2 381.7L604.0 382.8L602.4 382.8M604.2 378.3L605.8 378.0L606.2 376.5M627.3 382.7L627.7 384.0L628.3 385.2M625.0 388.8L624.3 389.1L623.9 389.8M616.8 388.0L617.2 388.7L617.6 389.2M632.5 380.0L635.5 381.5L638.0 380.5M615.4 412.3L616.5 411.3L618.0 411.7M613.0 405.0L612.8 405.9L613.1 406.9M599.8 398.2L598.9 399.5L597.9 400.7L596.8 401.8M613.5 408.3L611.9 407.2L610.0 407.0M604.4 404.3L603.4 403.2L602.1 402.6L600.6 402.4L599.2 402.8M602.9 398.2L603.1 399.9L602.5 401.4M604.2 400.7L602.9 401.8L603.4 403.5M611.5 409.1L612.8 409.7L613.7 410.9L614.0 412.3M606.0 405.4L607.5 405.5L608.9 404.9L609.9 403.7M615.4 408.5L614.4 409.7L613.5 410.9M617.4 409.9L619.4 410.2L620.3 411.9M614.9 411.6L615.6 413.3L616.1 415.1M616.6 414.0L615.3 414.5L614.1 415.4M612.2 411.5L611.2 410.8L609.9 410.8M617.9 414.2L617.4 412.6L617.9 411.0L619.2 410.0M642.3 404.6L640.9 404.4L639.5 404.7M630.5 424.5L629.6 425.7L628.8 426.8L627.8 427.6L626.7 428.3L625.5 428.9L624.2 429.3L622.9 429.7L621.8 430.0L620.7 430.3L619.5 430.4L618.3 430.4L617.0 430.1M634.4 422.3L636.2 422.9L637.9 423.9M635.8 420.5L637.8 421.0L639.7 421.5M638.3 422.3L640.0 422.0L641.7 421.7L643.4 421.5M632.8 422.6L634.6 422.2L636.3 421.4L637.7 420.4M638.3 422.5L639.9 422.3L641.3 421.7L642.6 420.9M623.7 408.7L623.8 408.8M617.5 397.6L617.0 398.9L617.3 400.3M619.0 402.0L619.1 402.1M604.3 434.6L602.7 434.1L600.9 433.5L599.3 432.9L597.9 432.4L596.7 431.7L595.7 431.0L594.7 430.1L593.6 429.0L592.5 427.7L591.6 426.4L591.0 425.2L590.7 423.9L590.5 422.8L590.4 421.7L590.3 420.5L590.2 419.3L590.3 417.9L590.6 416.5L591.3 415.1L592.2 413.9L593.1 412.8L593.9 411.8L594.8 411.0L595.8 410.2L597.0 409.4L598.5 408.5L600.1 407.7L601.7 407.0M603.5 435.6L602.0 435.0L600.6 434.4L599.1 433.6L597.8 432.8L596.7 432.0L595.7 431.1L594.8 430.0L593.9 428.9L593.1 427.6L592.4 426.3L591.8 424.9L591.5 423.6L591.4 422.2L591.4 420.9L591.4 419.6L591.5 418.3L591.7 417.0L592.2 415.6L592.8 414.2L593.6 412.9L594.5 411.8L595.4 410.7L596.4 409.7L597.4 408.9L598.6 408.0L600.0 407.3L601.5 406.6L603.0 405.9M598.9 421.3L599.4 422.3M592.4 421.7L592.7 423.0L593.3 424.2L593.9 425.5L594.5 426.7L594.7 428.4L595.6 429.3M597.6 423.8L598.6 422.8L599.8 422.0M597.1 411.8L596.9 410.3L598.0 409.4M598.6 415.8L599.5 417.1L600.8 417.9L602.3 418.2M594.5 418.0L593.2 418.6L591.8 418.7L590.4 418.3M605.3 424.9L605.3 426.5L605.7 428.1M604.3 428.6L604.4 428.7M601.4 430.9L602.2 430.8L603.0 431.1M613.9 433.4L614.6 434.2L614.2 435.2M610.2 435.4L610.3 435.5M612.7 433.8L613.1 434.8L612.7 435.7M615.6 436.5L614.8 437.1L614.3 438.0M582.4 422.2L581.4 422.6L580.5 422.9L579.6 422.9L578.8 422.8L578.0 422.4L577.2 421.8M577.5 397.9L577.0 396.2L576.8 394.4L577.0 392.7L577.6 391.0L578.6 389.7L579.8 388.7L581.1 388.1L582.5 388.0M668.8 390.1L667.8 389.1L666.9 387.9L666.3 386.6L666.0 385.4L666.1 384.1L666.4 382.8L667.0 381.6L667.8 380.4L668.8 379.3L670.0 378.4M677.5 390.8L677.1 392.0L677.3 393.2M682.1 387.9L680.8 388.6L679.3 388.6L677.9 388.1M681.7 384.2L682.3 385.6L683.2 386.9L684.3 387.9M686.8 381.8L688.8 382.2L690.6 383.3M671.2 380.4L670.5 378.9L669.5 377.6L668.3 376.6M681.0 391.0L682.5 390.6L682.8 389.0M676.7 384.8L674.7 385.1L672.7 384.9M687.0 381.7L687.5 383.1L688.9 383.5M678.4 389.3L677.1 389.8L676.3 391.0L676.2 392.4M674.6 383.4L675.0 384.9L675.4 386.4L675.7 387.9M678.2 389.7L678.3 391.2L676.9 391.8M681.2 380.9L682.4 380.4L683.6 380.9M684.5 379.1L686.1 379.3L687.6 378.9L688.8 377.8M671.8 385.4L672.5 386.9L674.1 387.4M673.1 386.9L674.8 387.3L676.4 387.9M669.2 382.5L670.2 383.9L669.5 385.5M673.4 385.0L671.8 384.5L670.2 384.5M685.9 420.9L685.8 422.2L685.3 423.4L684.4 424.7L683.4 426.0L682.4 427.2L681.3 428.4L680.2 429.4L678.7 430.0L677.0 430.4L675.1 430.4L673.3 430.1L671.7 429.7L670.3 429.3L669.1 428.7L667.8 428.0L666.5 427.1L665.3 426.0L664.3 424.6L663.8 423.0L663.7 421.4L663.9 419.8L664.2 418.3L664.5 417.1L665.0 415.9L665.7 414.8L666.9 413.8L668.4 412.8L670.0 411.8L671.6 411.1L673.1 410.6L674.5 410.5L676.0 410.8L677.7 411.3L679.4 412.0L681.1 412.8L682.5 413.6L683.5 414.5L684.1 415.5L684.7 416.8L685.2 418.2L685.7 419.8M671.7 421.7L671.2 420.7L670.5 419.9M678.7 423.8L677.1 423.1L676.2 421.7L676.2 419.9M666.0 421.2L665.4 419.9L665.1 418.5L665.0 417.0M669.2 420.1L670.6 420.7L671.3 422.0L671.3 423.4M671.6 425.1L670.1 424.0L668.8 422.7M670.5 421.9L671.4 423.1L672.8 423.6L674.2 423.3M681.0 425.3L681.3 426.9L682.2 428.3M675.6 422.9L677.3 423.8L679.0 424.2L680.9 424.2M676.1 425.7L675.1 424.6L674.7 423.2L674.9 421.8M676.9 414.4L676.8 415.7L677.2 416.9M667.3 417.3L668.7 418.1L670.4 418.0L671.9 417.2M668.5 426.0L669.3 424.7L670.1 423.4L671.0 422.1M670.2 419.8L669.2 418.9L669.6 417.7M670.8 414.1L672.3 415.5L673.9 416.7M676.0 417.9L676.7 418.9L676.3 420.0M667.7 425.5L669.5 425.8L671.2 426.3L672.9 427.0M665.6 422.4L667.3 422.5L668.5 423.7M680.9 415.4L682.6 414.8L683.8 413.4L684.2 411.6M645.0 377.0L648.5 380.0M658.5 375.0L662.0 377.8M668.6 370.8L669.3 369.8L670.5 369.1L672.2 368.7L674.0 368.7L675.7 369.2L677.1 369.9L677.9 370.8M692.5 389.5L694.8 391.6L697.0 389.8M694.8 391.6L695.5 394.5M686.4 393.6L685.5 394.1L685.1 395.0M681.3 397.4L681.9 398.8L682.9 400.0M631.8 438.3L631.0 438.2L631.0 439.0M632.1 438.6L631.4 439.0L630.7 439.0M643.1 432.6L643.2 432.7M634.0 433.5L635.0 433.8L635.0 434.9M633.7 430.9L632.5 431.0L631.8 432.0M643.0 436.9L644.0 437.8L645.1 438.3M631.2 434.3L631.3 435.6L631.1 436.9M633.3 437.6L633.8 437.2L634.4 437.6M663.6 436.9L663.9 438.5L663.5 440.0M653.9 435.2L654.0 435.3M663.0 435.4L663.1 435.5M655.5 439.0L655.6 439.1M656.0 437.0L655.0 437.6L654.0 438.2M687.5 438.8L687.3 439.5L687.5 440.2M687.8 439.6L686.6 440.0L685.3 439.8M684.2 434.3L685.4 435.1L686.2 436.4" stroke-width="1.8"/><path d="M597.2 391.3L596.8 389.7L596.4 388.2L596.1 386.8L596.1 385.4L596.4 384.1L596.9 382.9L597.4 381.6L598.0 380.2L598.5 378.8L599.1 377.4L600.0 376.2L601.1 375.1L602.4 374.2L603.8 373.5L605.0 372.9L606.2 372.4L607.4 371.8L608.8 371.3L610.4 370.9L612.1 370.6L613.8 370.6L615.2 370.8L616.5 371.2L617.8 371.7L619.2 372.3L620.6 372.9L622.1 373.5L623.5 374.2L624.6 375.0L625.4 376.1L626.2 377.3L627.0 378.6L627.8 380.0L628.6 381.4L629.1 382.8M595.8 388.6L595.7 387.2L595.9 385.8L596.2 384.2L596.5 382.6L596.8 381.0L597.1 379.4L597.7 378.0L598.6 376.8L599.8 375.7L601.0 374.7L602.1 373.7L603.2 372.7L604.3 371.8L605.6 370.9L607.1 370.1L608.8 369.7L610.5 369.4L612.1 369.3L613.5 369.4L614.9 369.6L616.4 369.8L618.0 370.0L619.7 370.3L621.3 370.8L622.7 371.5L623.8 372.4L624.9 373.5L625.9 374.7L627.1 375.9L628.2 377.1L629.1 378.3M605.0 377.3L606.0 376.0L607.0 374.8L608.0 373.5M602.3 377.9L603.5 377.4L603.6 376.1M602.2 384.2L601.4 382.7L600.5 381.2M599.9 389.6L598.9 388.4L598.1 387.0L597.5 385.5M620.0 385.1L620.6 385.3L621.2 385.4M622.4 393.6L622.5 393.7M621.5 388.4L621.8 389.1L621.2 389.6M623.0 391.1L622.6 392.2L622.0 393.3M611.7 407.6L611.2 409.3L611.2 411.0L611.6 412.7M612.4 407.6L614.2 408.0L616.0 408.6L617.7 409.2M606.6 407.1L605.3 406.7L603.9 406.7L602.5 407.1M612.4 405.2L612.4 403.4L613.3 401.9L615.0 401.3M613.8 408.7L615.8 408.6L616.9 406.9M641.5 411.3L641.0 412.1L640.5 412.9M638.9 408.9L638.8 409.6L639.5 410.0M637.1 397.7L636.4 398.4L636.6 399.3M640.4 403.8L641.2 405.1L641.8 406.4M634.0 424.3L633.2 425.6L632.4 426.7L631.5 427.7L630.5 428.6L629.4 429.4L628.2 430.2L627.1 430.8L626.0 431.5L624.8 432.0L623.7 432.4L622.4 432.6L621.1 432.8L619.8 432.7L618.6 432.6L617.4 432.3L616.2 432.0L615.1 431.6M636.8 421.5L638.2 421.6L639.6 421.9L641.1 422.2M631.6 416.6L632.4 417.6L633.3 418.6M624.3 406.8L625.3 406.9L625.8 407.7M625.8 408.0L627.0 407.6L628.0 408.4M624.3 413.2L623.6 414.6L623.2 416.1M628.5 419.9L628.4 420.8L627.7 421.3M627.6 417.8L627.2 418.5L627.2 419.3M626.1 418.1L626.9 418.7L627.8 419.3M619.1 394.8L619.2 394.9M624.5 402.0L624.6 402.1M621.3 400.3L620.3 400.7L619.4 401.1M624.4 397.3L625.1 398.6L626.4 399.2M596.3 425.5L597.6 425.2L598.8 425.6M597.8 413.0L599.4 414.2L600.9 415.4M595.8 415.4L597.1 414.5L598.4 413.7L599.6 412.7M602.1 425.6L602.2 425.7M604.8 432.6L604.9 432.7M616.1 436.5L616.0 437.3L615.6 438.0M577.9 422.0L577.1 421.2L576.5 420.2L575.9 419.1L575.4 417.9L575.1 416.6L574.8 415.1L574.7 413.6L574.6 412.0L574.6 410.3L574.7 408.6L574.9 407.0L575.3 405.4L575.8 404.0L576.3 402.5L576.9 401.2L577.6 400.0L578.3 398.9L579.1 398.0L580.0 397.2L580.9 396.7L581.8 396.3M578.1 422.3L577.3 421.7L576.6 421.0L576.0 420.1L575.5 419.0L575.0 417.8L574.6 416.5L574.3 415.0L574.1 413.5L574.0 411.9L574.0 410.4L574.2 408.9L574.5 407.4L574.8 405.9L575.2 404.4L575.7 403.0L576.3 401.7L577.0 400.5L577.8 399.5L578.6 398.6L579.4 397.9L580.2 397.4L581.1 397.1M578.7 423.7L578.0 423.2L577.3 422.4L576.5 421.4L575.8 420.2L575.1 419.0L574.7 417.6L574.5 416.3L574.4 414.8L574.3 413.2L574.2 411.4L574.2 409.6L574.3 407.8L574.6 406.0L575.1 404.4L575.8 402.9L576.4 401.5L577.0 400.3L577.6 399.2L578.3 398.1L579.2 397.2L580.2 396.5L581.2 395.9L582.2 395.7M581.7 420.5L580.9 420.9L580.0 421.1L579.2 421.1L578.4 420.7L577.8 420.2M581.5 399.0L582.0 405.0L582.3 409.0M675.4 387.2L674.1 387.1L673.0 387.9M683.2 378.1L681.5 378.4L680.5 379.8M687.5 386.5L686.8 387.8L686.5 389.2L686.9 390.6M685.7 387.8L686.4 388.8L686.0 389.9M673.1 381.8L674.5 381.3L675.8 381.8M678.9 380.3L679.5 381.8L679.2 383.4M682.9 381.2L682.9 382.6L682.5 383.9M680.9 376.4L680.5 378.0L681.3 379.4M687.8 383.6L687.3 384.7L686.8 385.8M679.6 388.4L681.0 387.5L682.7 387.3M671.8 381.1L673.2 381.2L674.0 382.4M678.7 377.9L680.2 376.7L682.0 377.2M675.1 385.3L673.3 386.2L671.3 386.9M670.2 387.1L669.7 385.4L668.7 383.9M667.8 426.5L668.1 427.5L668.0 428.6M667.2 418.7L669.1 418.5L671.1 418.3M669.4 415.3L668.4 414.7L668.6 413.5M683.0 422.6L682.0 424.0L680.7 425.3L679.3 426.2M674.2 422.6L675.3 424.1L676.8 425.1L678.5 425.8M674.0 417.5L674.0 416.0L674.2 414.6L674.6 413.1M677.6 425.5L675.8 424.7L674.4 425.9M678.7 424.3L677.6 423.8L676.7 422.9M669.3 423.8L669.1 424.9L670.0 425.5M679.1 422.4L677.2 423.1L676.9 425.2M671.1 424.0L672.7 424.7L674.2 423.6M683.2 422.9L682.1 421.6L680.4 421.4L678.9 422.2M673.1 423.1L672.1 423.3L671.2 422.7M667.7 415.8L668.9 416.2L670.3 416.1M674.7 419.6L676.7 419.9L678.7 419.7M668.6 426.3L669.1 424.7L669.9 423.2L671.0 421.8M658.5 414.5L661.5 414.2L664.0 412.0L664.6 409.5L662.5 407.6M642.5 371.5L646.0 370.2L650.0 371.2L653.0 373.5M655.8 378.2L658.5 375.0L659.0 370.5M677.3 367.2L678.1 368.0L679.3 368.0M668.8 369.5L668.9 369.6M694.8 366.7L695.0 367.9L694.5 369.1M696.8 365.7L695.4 366.3L693.9 366.5M689.5 402.5L688.5 403.3L686.9 403.4L685.2 402.7L683.8 401.6L683.1 400.2L683.3 398.9M673.5 407.6L672.4 406.4L671.9 404.8L672.1 403.0L672.9 401.6L674.3 400.7L675.8 400.5M695.7 414.0L694.7 414.7L693.1 414.9L691.2 414.6L689.4 413.9L688.1 412.9L687.6 411.8M644.8 389.9L643.4 389.1L643.1 387.5L644.1 386.2L645.6 386.3M653.8 388.6L656.2 389.6M646.5 404.0L647.0 406.5M653.0 422.5L653.8 423.3L654.3 424.8L654.4 426.6L653.9 428.1L653.0 428.8M685.0 397.8L683.5 398.0L682.0 398.0M687.1 394.2L687.2 394.3M658.9 392.9L659.0 393.0M639.7 435.6L639.8 435.7M639.8 438.9L639.9 439.0M644.6 433.5L644.4 434.9L644.2 436.4M636.8 436.8L635.8 437.4L634.8 437.9M633.1 438.6L633.2 438.7M617.9 437.4L618.0 437.5M627.3 434.8L627.4 434.9M655.8 438.2L657.5 437.9L658.9 438.7M677.5 434.9L676.6 436.1L675.3 436.8M682.5 438.9L682.6 439.0M700.3 436.3L701.2 437.0L702.4 437.4M701.6 438.6L701.7 438.7" stroke-width="2.0"/><path d="M594.0 368.7L594.1 369.7L593.6 370.8L592.6 371.9L591.2 372.8L589.6 373.4L588.0 373.7L586.7 373.6L585.7 373.2L585.2 372.3L585.1 371.2L585.6 370.0L586.6 368.8L588.0 367.9L589.6 367.3L591.2 367.1L592.6 367.3L593.6 367.9L594.0 368.8M588.8 428.8L588.9 428.9M648.4 396.1L648.5 396.2M624.2 392.1L623.5 392.1L622.8 392.2M623.0 379.7L623.1 379.8M624.4 375.5L624.1 376.8L623.5 378.0M613.9 406.0L615.6 406.7L617.4 406.6L618.9 405.6M607.4 406.2L608.0 407.8L609.1 409.1M612.9 410.5L613.3 412.4L614.3 414.0M617.8 410.8L619.4 411.2L621.1 410.8M610.0 404.2L608.9 405.5L607.3 406.0L605.6 405.6M614.1 407.7L613.1 409.3L612.5 411.0M638.2 396.2L637.6 396.4L637.2 396.9M638.1 400.7L637.7 402.2L637.7 403.8M636.3 395.9L637.2 395.7L637.4 396.5M636.4 422.5L637.9 422.8L639.3 423.1L640.8 423.4L642.2 423.8M637.0 422.3L639.0 421.9L640.9 421.2M634.6 420.0L636.1 420.5L637.5 421.2M631.8 410.4L631.7 411.3L631.5 412.2M602.5 426.5L602.6 426.6M613.9 434.7L614.0 434.8M608.3 435.7L607.9 436.9L607.6 438.1M607.6 435.4L607.3 436.6L607.4 437.8M616.8 437.0L615.6 437.4L614.5 437.7M671.0 381.8L670.7 379.9L670.2 378.1M675.2 386.7L676.6 388.2L677.1 390.2M674.2 386.5L675.6 386.0L676.6 384.9M673.9 378.8L674.2 377.6L674.7 376.6M676.3 381.8L675.2 381.4L674.0 381.5M673.5 386.7L674.5 388.5L676.2 389.7M680.3 384.3L679.6 385.4L678.5 386.1M677.9 377.1L678.6 375.7L678.6 374.1L677.9 372.7M681.1 383.7L682.6 384.2L684.2 384.3M682.0 418.8L681.1 418.3L680.3 419.0M678.6 414.7L679.9 414.1L681.3 414.2L682.5 415.0M678.1 426.3L676.1 426.1L674.2 425.5M668.7 417.2L669.9 418.6L671.6 419.0L673.2 418.4M673.2 417.7L675.0 417.5L676.3 416.1L676.4 414.2M670.1 419.2L669.3 417.3L669.7 415.4M670.1 420.2L670.5 421.9L670.7 423.7M676.3 413.9L676.5 415.6L675.6 416.9L674.0 417.4M671.1 425.5L671.7 426.9L671.4 428.4L670.3 429.5M677.9 426.8L679.0 427.3L680.1 427.2M680.0 421.8L678.5 421.7L677.3 420.7L676.9 419.2M668.8 415.4L670.3 414.9L671.6 415.8M669.4 419.3L668.7 417.4L670.0 415.7M674.6 415.0L676.0 415.5L677.1 416.5L677.8 417.8L677.9 419.3M674.2 418.2L675.6 418.6L677.1 419.0L678.5 419.4L680.0 419.7M677.7 421.9L679.3 421.7L680.3 420.4M676.5 418.3L675.9 417.4L675.2 416.7M679.5 425.8L680.1 424.5L681.3 423.6L682.7 423.4M677.1 413.8L676.1 413.2L675.4 412.3M679.3 416.1L678.9 414.4L679.0 412.6L679.6 410.9M673.5 418.1L672.9 417.0L673.3 415.9M659.1 407.6L657.7 408.6L656.1 409.1L654.7 408.8L653.5 407.8L652.8 406.3L652.6 404.5L652.9 402.8L653.9 401.4L655.3 400.6L656.9 400.7L658.5 401.4L659.6 402.8M652.3 415.9L652.0 417.4L651.1 418.6L649.8 419.2L648.3 419.1L647.0 418.4L646.3 417.1L646.2 415.6L646.8 414.2L648.0 413.3L649.4 413.1L650.8 413.5L651.9 414.6L652.3 416.0M675.3 367.0L675.8 367.5L676.4 367.4M680.7 369.3L680.8 369.4M693.7 366.9L693.2 367.7L692.0 368.5L690.5 369.0L688.9 369.1L687.6 368.7L686.8 368.1M698.7 379.9L698.8 380.0M679.5 403.4L679.6 402.2L680.6 401.4L682.2 401.3L683.8 402.0L684.7 403.2M651.8 431.6L651.1 432.1L649.5 432.1L647.9 431.5L646.8 430.6L646.6 429.7M657.8 394.9L657.9 395.0M633.1 439.6L632.1 439.2L631.3 439.9M641.1 435.4L641.2 435.5M633.6 435.6L633.6 436.5L634.5 436.8M637.4 434.9L637.9 435.5L638.6 435.9M634.8 429.9L634.0 430.2L633.2 430.3M636.5 429.3L637.0 430.1L636.5 430.8M626.3 439.5L625.5 440.1L625.7 441.0M618.8 439.4L620.0 440.2L621.3 440.6M663.5 432.9L662.9 433.0L662.3 433.3M659.5 436.1L659.6 436.2M658.3 435.3L659.0 434.9L659.3 435.6M692.0 434.5L691.1 435.2L690.0 435.5M690.9 434.9L689.6 435.9L688.9 437.4M684.6 436.4L684.7 437.6L685.8 438.1M686.0 439.0L686.1 439.1" stroke-width="2.2"/><path d="M590.3 401.8L590.4 401.9M575.1 425.6L575.2 425.7M617.7 380.6L617.8 380.7M638.1 406.9L638.4 407.9L638.5 409.0M638.6 405.1L637.9 405.7L637.7 406.7M639.9 406.8L640.4 407.3L640.6 407.9M632.5 421.3L634.2 421.7L635.9 422.3M635.4 421.5L636.8 421.1L638.2 420.6L639.5 419.9L640.8 419.2M637.4 422.8L639.0 422.7L640.6 422.5L642.3 422.2M629.2 407.0L629.3 407.1M624.7 417.3L625.4 418.7L625.6 420.3M623.4 409.1L622.5 410.4L621.9 411.8M627.4 419.8L627.5 419.9M609.1 437.5L610.0 437.4L610.3 438.3M676.2 418.8L675.1 418.4L673.9 418.6M672.3 422.8L673.5 423.4L674.6 422.7M674.7 416.7L676.2 416.7L677.6 417.0L679.0 417.7M642.2 379.4L641.4 377.9L641.0 376.2L641.2 374.4L641.8 372.8L642.9 371.4L644.2 370.5L645.8 370.1L647.5 370.3L649.1 371.0L650.4 372.3M678.1 367.1L678.2 367.2M667.4 369.5L667.1 370.3L667.8 370.8M674.4 434.9L673.3 435.6L671.8 436.1L670.1 436.2L668.7 435.8L667.9 435.1M635.6 437.3L635.7 437.4M637.0 438.4L637.0 439.5L637.1 440.6M642.3 431.8L641.9 433.1L641.7 434.3M644.8 432.9L644.2 434.1L643.0 434.6M632.9 432.5L633.6 432.1L634.1 432.6M634.6 429.0L634.8 429.9L634.3 430.6M640.8 438.2L641.5 439.5L642.9 440.2M629.9 432.7L630.0 434.3L630.1 435.9M619.6 434.5L619.3 435.8L619.9 436.9M620.4 436.9L620.5 437.0M623.0 436.0L622.2 435.7L621.5 436.1M627.5 436.7L626.8 437.1L626.5 437.9M627.8 437.3L626.8 438.3L626.5 439.7M663.6 433.8L663.7 433.9M661.4 439.1L661.5 439.2M662.6 432.3L663.0 433.8L663.9 435.1M663.3 434.4L662.1 435.4L660.5 435.4M663.1 435.7L663.8 436.0L664.4 436.3M681.1 435.5L681.7 435.4L682.1 435.9M677.1 434.1L677.4 434.9L676.8 435.6M685.8 436.4L684.4 436.3L683.1 436.5M699.1 438.5L699.2 438.6M699.7 436.4L699.8 436.5M702.3 435.6L702.4 435.7" stroke-width="2.4"/><path d="M571.6 372.9L571.7 373.0M686.8 419.9L686.9 420.0M638.1 404.3L638.6 405.0L639.4 404.6M638.2 396.5L639.4 396.7L640.5 397.1M639.3 402.0L638.4 401.9L637.8 402.5M635.8 391.9L636.9 392.9L638.0 393.9M638.1 410.1L639.1 410.7L639.4 411.8M658.6 407.9L657.2 408.6L655.5 408.6L653.9 408.0L652.7 406.9L652.2 405.5L652.3 403.9L653.1 402.4L654.3 401.3L655.7 400.7L657.1 400.8L658.4 401.6L659.4 403.0M652.8 416.0L652.3 417.7L651.0 419.1L649.3 419.6L647.7 419.3L646.4 418.1L645.9 416.4L646.2 414.6L647.3 413.2L648.9 412.6L650.7 412.9L652.1 414.1L652.8 415.9M648.6 416.0L648.7 416.1M648.9 416.4L649.0 416.5M696.3 385.3L695.4 384.7L694.7 383.5L694.4 381.9L694.4 380.2L694.8 378.6L695.4 377.4L696.3 376.8M637.8 429.8L637.2 430.6L637.6 431.5M640.0 434.5L640.1 434.6M633.2 437.2L634.2 438.4L635.8 438.6M632.5 436.1L631.6 436.2L630.8 436.1M639.4 430.8L640.0 431.7L641.1 432.0M633.0 430.5L633.1 430.6M640.8 431.7L640.4 432.1L640.1 432.5M645.0 435.6L644.4 436.1L643.6 436.0M641.1 437.1L641.5 437.5L642.1 437.6M642.0 436.8L643.6 436.7L645.2 437.1M631.3 438.3L631.4 438.4M620.9 436.8L621.0 436.9M657.3 436.6L657.4 436.7M699.0 435.6L699.1 435.7" stroke-width="2.6"/><path d="M572.7 366.7L572.8 366.8M590.3 397.1L590.4 397.2M688.8 408.4L688.9 408.5" stroke-width="2.8"/></g>
<path d="M106.25 120.6 V130 M110.42 126 V130 M114.58 126 V130 M118.75 126 V130 M122.92 126 V130 M127.09 120.6 V130 M131.25 126 V130 M135.42 126 V130 M139.59 126 V130 M143.75 126 V130 M147.92 120.6 V130 M152.09 126 V130 M156.25 126 V130 M160.42 126 V130 M164.59 126 V130 M168.75 120.6 V130 M172.92 126 V130 M177.09 126 V130 M181.26 126 V130 M185.42 126 V130 M189.59 120.6 V130 M193.76 126 V130 M197.92 126 V130 M202.09 126 V130 M206.26 126 V130 M210.43 120.6 V130 M214.59 126 V130 M218.76 126 V130 M222.93 126 V130 M227.09 126 V130 M231.26 120.6 V130 M235.43 126 V130 M239.59 126 V130 M243.76 126 V130 M247.93 126 V130 M252.09 120.6 V130 M256.26 126 V130 M260.43 126 V130 M264.60 126 V130 M268.76 126 V130 M272.93 120.6 V130 M277.10 126 V130 M281.26 126 V130 M285.43 126 V130 M289.60 126 V130 M293.76 120.6 V130 M297.93 126 V130 M302.10 126 V130 M306.27 126 V130 M310.43 126 V130 M314.60 120.6 V130 M318.77 126 V130 M322.93 126 V130 M327.10 126 V130 M331.27 126 V130 M335.44 120.6 V130 M339.60 126 V130 M343.77 126 V130 M347.94 126 V130 M352.10 126 V130 M356.27 120.6 V130 M360.44 126 V130 M364.60 126 V130 M368.77 126 V130 M372.94 126 V130 M377.10 120.6 V130 M381.27 126 V130 M385.44 126 V130 M389.61 126 V130 M393.77 126 V130 M397.94 120.6 V130 M402.11 126 V130 M406.27 126 V130 M410.44 126 V130 M414.61 126 V130 M418.77 120.6 V130 M422.94 126 V130 M427.11 126 V130 M431.28 126 V130 M435.44 126 V130 M439.61 120.6 V130 M443.78 126 V130 M447.94 126 V130 M452.11 126 V130 M456.28 126 V130 M460.44 120.6 V130 M464.61 126 V130 M468.78 126 V130 M472.95 126 V130 M477.11 126 V130 M481.28 120.6 V130 M485.45 126 V130 M489.61 126 V130 M493.78 126 V130 M497.95 126 V130 M502.12 120.6 V130 M506.28 126 V130 M510.45 126 V130 M514.62 126 V130 M518.78 126 V130 M522.95 120.6 V130 M527.12 126 V130 M531.28 126 V130 M535.45 126 V130 M539.62 126 V130 M543.78 120.6 V130 M547.95 126 V130 M552.12 126 V130 M556.29 126 V130 M560.45 126 V130 M564.62 120.6 V130 M568.79 126 V130 M572.95 126 V130 M577.12 126 V130 M581.29 126 V130 M585.45 120.6 V130 M589.62 126 V130 M593.79 126 V130 M597.96 126 V130 M602.12 126 V130 M606.29 120.6 V130 M610.46 126 V130 M614.62 126 V130 M618.79 126 V130 M622.96 126 V130 M627.12 120.6 V130 M631.29 126 V130 M635.46 126 V130 M639.63 126 V130 M643.79 126 V130 M647.96 120.6 V130 M652.13 126 V130 M656.29 126 V130 M660.46 126 V130 M664.63 126 V130 M668.79 120.6 V130 M672.96 126 V130 M677.13 126 V130 M681.30 126 V130 M685.46 126 V130 M689.63 120.6 V130 M693.80 126 V130 M697.96 126 V130 M702.13 126 V130 M706.30 126 V130 M710.46 120.6 V130 M714.63 126 V130 M718.80 126 V130 M722.97 126 V130 M727.13 126 V130 M731.30 120.6 V130 M735.47 126 V130 M739.63 126 V130 M743.80 126 V130 M747.97 126 V130 M752.13 120.6 V130 M756.30 126 V130 M760.47 126 V130 M764.64 126 V130 M768.80 126 V130 M772.97 120.6 V130 M777.14 126 V130 M781.30 126 V130 M785.47 126 V130 M789.64 126 V130 M793.80 120.6 V130 M797.97 126 V130 M802.14 126 V130 M806.31 126 V130 M810.47 126 V130 M814.64 120.6 V130 M818.81 126 V130 M822.97 126 V130 M827.14 126 V130 M831.31 126 V130 M835.48 120.6 V130 M839.64 126 V130 M843.81 126 V130 M847.98 126 V130 M852.14 126 V130 M856.31 120.6 V130 M860.48 126 V130 M864.64 126 V130 M868.81 126 V130 M872.98 126 V130 M877.14 120.6 V130 M881.31 126 V130 M885.48 126 V130 M889.65 126 V130 M893.81 126 V130 M897.98 120.6 V130 M902.15 126 V130 M906.31 126 V130 M910.48 126 V130 M914.65 126 V130 M918.81 120.6 V130 M922.98 126 V130 M927.15 126 V130 M931.32 126 V130 M935.48 126 V130 M939.65 120.6 V130 M943.82 126 V130 M947.98 126 V130 M952.15 126 V130 M956.32 126 V130 M960.49 120.6 V130 M964.65 126 V130 M968.82 126 V130 M972.99 126 V130 M977.15 126 V130 M981.32 120.6 V130 M985.49 126 V130 M989.65 126 V130 M993.82 126 V130 M997.99 126 V130 M1002.15 120.6 V130 M1006.32 126 V130 M1010.49 126 V130 M1014.66 126 V130 M1018.82 126 V130 M1022.99 120.6 V130 M1027.16 126 V130 M1031.32 126 V130 M1035.49 126 V130 M1039.66 126 V130 M1043.82 120.6 V130 M1047.99 126 V130 M1052.16 126 V130 M1056.33 126 V130 M1060.49 126 V130 M1064.66 120.6 V130 M1068.83 126 V130 M1072.99 126 V130 M1077.16 126 V130 M1081.33 126 V130 M1085.49 120.6 V130 M1089.66 126 V130 M1093.83 126 V130 M1098.00 126 V130 M1102.16 126 V130 M1106.33 120.6 V130 M1110.50 126 V130 M1114.66 126 V130 M1118.83 126 V130 M1123.00 126 V130 M1127.16 120.6 V130 M1131.33 126 V130 M1135.50 126 V130 M1139.67 126 V130 M1143.83 126 V130 M1148.00 120.6 V130 M1152.17 126 V130 M1156.33 126 V130 M1160.50 126 V130 M1164.67 126 V130 M1168.84 120.6 V130 M1173.00 126 V130 M1177.17 126 V130 M1181.34 126 V130 M1185.50 126 V130 M1189.67 120.6 V130 M1193.84 126 V130 M1198.00 126 V130 M1202.17 126 V130 M1206.34 126 V130 M1210.50 120.6 V130 M1214.67 126 V130 M1218.84 126 V130 M1223.01 126 V130 M1227.17 126 V130 M1231.34 120.6 V130 M1235.51 126 V130 M1239.67 126 V130 M1243.84 126 V130 M1248.01 126 V130 M1252.17 120.6 V130 M1256.34 126 V130 M1260.51 126 V130 M1264.68 126 V130 M1268.84 126 V130 M1273.01 120.6 V130 M1277.18 126 V130 M1281.34 126 V130 M1285.51 126 V130 M1289.68 126 V130 M1293.85 120.6 V130 M1298.01 126 V130 M1302.18 126 V130 M1306.35 126 V130 M1310.51 126 V130 M1314.68 120.6 V130 M1318.85 126 V130 M1323.01 126 V130 M1327.18 126 V130 M1331.35 126 V130 M1335.51 120.6 V130 M1339.68 126 V130 M1343.85 126 V130 M1348.02 126 V130 M1352.18 126 V130 M1356.35 120.6 V130" stroke="#1a5e8e" stroke-width="1" fill="none"/>
<path d="M101 130.5 H1359" stroke="#1a5e8e" stroke-width="1"/>
<clipPath id="rc"><rect x="102" y="105" width="1257" height="26"/></clipPath>
<g clip-path="url(#rc)" font-size="9" font-weight="bold" fill="#21679a"><text x="106.2" y="119.4" text-anchor="middle" textLength="22.1" lengthAdjust="spacingAndGlyphs">68.34</text><text x="147.9" y="119.4" text-anchor="middle" textLength="22.1" lengthAdjust="spacingAndGlyphs">76.89</text><text x="189.6" y="119.4" text-anchor="middle" textLength="22.1" lengthAdjust="spacingAndGlyphs">85.43</text><text x="231.3" y="119.4" text-anchor="middle" textLength="22.1" lengthAdjust="spacingAndGlyphs">93.97</text><text x="272.9" y="119.4" text-anchor="middle" textLength="26.9" lengthAdjust="spacingAndGlyphs">102.52</text><text x="314.6" y="119.4" text-anchor="middle" textLength="26.9" lengthAdjust="spacingAndGlyphs">111.06</text><text x="356.3" y="119.4" text-anchor="middle" textLength="26.9" lengthAdjust="spacingAndGlyphs">119.60</text><text x="397.9" y="119.4" text-anchor="middle" textLength="26.9" lengthAdjust="spacingAndGlyphs">128.14</text><text x="439.6" y="119.4" text-anchor="middle" textLength="26.9" lengthAdjust="spacingAndGlyphs">136.69</text><text x="481.3" y="119.4" text-anchor="middle" textLength="26.9" lengthAdjust="spacingAndGlyphs">145.23</text><text x="523.0" y="119.4" text-anchor="middle" textLength="26.9" lengthAdjust="spacingAndGlyphs">153.77</text><text x="564.6" y="119.4" text-anchor="middle" textLength="26.9" lengthAdjust="spacingAndGlyphs">162.32</text><text x="606.3" y="119.4" text-anchor="middle" textLength="26.9" lengthAdjust="spacingAndGlyphs">170.86</text><text x="648.0" y="119.4" text-anchor="middle" textLength="26.9" lengthAdjust="spacingAndGlyphs">179.40</text><text x="689.6" y="119.4" text-anchor="middle" textLength="26.9" lengthAdjust="spacingAndGlyphs">187.95</text><text x="731.3" y="119.4" text-anchor="middle" textLength="26.9" lengthAdjust="spacingAndGlyphs">196.49</text><text x="773.0" y="119.4" text-anchor="middle" textLength="26.9" lengthAdjust="spacingAndGlyphs">205.03</text><text x="814.6" y="119.4" text-anchor="middle" textLength="26.9" lengthAdjust="spacingAndGlyphs">213.57</text><text x="856.3" y="119.4" text-anchor="middle" textLength="26.9" lengthAdjust="spacingAndGlyphs">222.12</text><text x="898.0" y="119.4" text-anchor="middle" textLength="26.9" lengthAdjust="spacingAndGlyphs">230.66</text><text x="939.7" y="119.4" text-anchor="middle" textLength="26.9" lengthAdjust="spacingAndGlyphs">239.20</text><text x="981.3" y="119.4" text-anchor="middle" textLength="26.9" lengthAdjust="spacingAndGlyphs">247.75</text><text x="1023.0" y="119.4" text-anchor="middle" textLength="26.9" lengthAdjust="spacingAndGlyphs">256.29</text><text x="1064.7" y="119.4" text-anchor="middle" textLength="26.9" lengthAdjust="spacingAndGlyphs">264.83</text><text x="1106.3" y="119.4" text-anchor="middle" textLength="26.9" lengthAdjust="spacingAndGlyphs">273.38</text><text x="1148.0" y="119.4" text-anchor="middle" textLength="26.9" lengthAdjust="spacingAndGlyphs">281.92</text><text x="1189.7" y="119.4" text-anchor="middle" textLength="26.9" lengthAdjust="spacingAndGlyphs">290.46</text><text x="1231.3" y="119.4" text-anchor="middle" textLength="26.9" lengthAdjust="spacingAndGlyphs">299.00</text><text x="1273.0" y="119.4" text-anchor="middle" textLength="26.9" lengthAdjust="spacingAndGlyphs">307.55</text><text x="1314.7" y="119.4" text-anchor="middle" textLength="26.9" lengthAdjust="spacingAndGlyphs">316.09</text><text x="1356.4" y="119.4" text-anchor="middle" textLength="26.9" lengthAdjust="spacingAndGlyphs">324.63</text></g>
<text x="85" y="125.6" font-size="8.5" fill="#21679a" font-weight="bold" text-anchor="start"  textLength="14" lengthAdjust="spacingAndGlyphs">mm</text>
<path d="M322.6 113 V130" stroke="#3a3a3a" stroke-width="1.1"/>
<path d="M97.2 135.17 H101.5 M97.2 139.33 H101.5 M92 143.50 H101.5 M97.2 147.67 H101.5 M97.2 151.83 H101.5 M97.2 156.00 H101.5 M97.2 160.17 H101.5 M92 164.34 H101.5 M97.2 168.50 H101.5 M97.2 172.67 H101.5 M97.2 176.84 H101.5 M97.2 181.00 H101.5 M92 185.17 H101.5 M97.2 189.34 H101.5 M97.2 193.50 H101.5 M97.2 197.67 H101.5 M97.2 201.84 H101.5 M92 206.00 H101.5 M97.2 210.17 H101.5 M97.2 214.34 H101.5 M97.2 218.51 H101.5 M97.2 222.67 H101.5 M92 226.84 H101.5 M97.2 231.01 H101.5 M97.2 235.17 H101.5 M97.2 239.34 H101.5 M97.2 243.51 H101.5 M92 247.68 H101.5 M97.2 251.84 H101.5 M97.2 256.01 H101.5 M97.2 260.18 H101.5 M97.2 264.34 H101.5 M92 268.51 H101.5 M97.2 272.68 H101.5 M97.2 276.84 H101.5 M97.2 281.01 H101.5 M97.2 285.18 H101.5 M92 289.35 H101.5 M97.2 293.51 H101.5 M97.2 297.68 H101.5 M97.2 301.85 H101.5 M97.2 306.01 H101.5 M92 310.18 H101.5 M97.2 314.35 H101.5 M97.2 318.51 H101.5 M97.2 322.68 H101.5 M97.2 326.85 H101.5 M92 331.01 H101.5 M97.2 335.18 H101.5 M97.2 339.35 H101.5 M97.2 343.52 H101.5 M97.2 347.68 H101.5 M92 351.85 H101.5 M97.2 356.02 H101.5 M97.2 360.18 H101.5 M97.2 364.35 H101.5 M97.2 368.52 H101.5 M92 372.69 H101.5 M97.2 376.85 H101.5 M97.2 381.02 H101.5 M97.2 385.19 H101.5 M97.2 389.35 H101.5 M92 393.52 H101.5 M97.2 397.69 H101.5 M97.2 401.85 H101.5 M97.2 406.02 H101.5 M97.2 410.19 H101.5 M92 414.35 H101.5 M97.2 418.52 H101.5 M97.2 422.69 H101.5 M97.2 426.86 H101.5 M97.2 431.02 H101.5 M92 435.19 H101.5 M97.2 439.36 H101.5 M97.2 443.52 H101.5 M97.2 447.69 H101.5 M97.2 451.86 H101.5 M92 456.02 H101.5 M97.2 460.19 H101.5 M97.2 464.36 H101.5 M97.2 468.53 H101.5 M97.2 472.69 H101.5 M92 476.86 H101.5 M97.2 481.03 H101.5 M97.2 485.19 H101.5 M97.2 489.36 H101.5 M97.2 493.53 H101.5 M92 497.69 H101.5 M97.2 501.86 H101.5 M97.2 506.03 H101.5 M97.2 510.20 H101.5 M97.2 514.36 H101.5 M92 518.53 H101.5 M97.2 522.70 H101.5 M97.2 526.86 H101.5 M97.2 531.03 H101.5 M97.2 535.20 H101.5 M92 539.37 H101.5 M97.2 543.53 H101.5 M97.2 547.70 H101.5 M97.2 551.87 H101.5 M97.2 556.03 H101.5 M92 560.20 H101.5 M97.2 564.37 H101.5 M97.2 568.53 H101.5 M97.2 572.70 H101.5 M97.2 576.87 H101.5 M92 581.03 H101.5 M97.2 585.20 H101.5 M97.2 589.37 H101.5 M97.2 593.54 H101.5 M97.2 597.70 H101.5 M92 601.87 H101.5 M97.2 606.04 H101.5 M97.2 610.20 H101.5 M97.2 614.37 H101.5 M97.2 618.54 H101.5 M92 622.70 H101.5 M97.2 626.87 H101.5 M97.2 631.04 H101.5 M97.2 635.21 H101.5 M97.2 639.37 H101.5 M92 643.54 H101.5 M97.2 647.71 H101.5 M97.2 651.87 H101.5 M97.2 656.04 H101.5 M97.2 660.21 H101.5 M92 664.38 H101.5 M97.2 668.54 H101.5 M97.2 672.71 H101.5 M97.2 676.88 H101.5 M97.2 681.04 H101.5 M92 685.21 H101.5 M97.2 689.38 H101.5 M97.2 693.54 H101.5 M97.2 697.71 H101.5 M97.2 701.88 H101.5 M92 706.04 H101.5 M97.2 710.21 H101.5 M97.2 714.38 H101.5 M97.2 718.55 H101.5 M97.2 722.71 H101.5 M92 726.88 H101.5 M97.2 731.05 H101.5 M97.2 735.21 H101.5 M97.2 739.38 H101.5 M97.2 743.55 H101.5 M92 747.71 H101.5 M97.2 751.88 H101.5 M97.2 756.05 H101.5 M97.2 760.22 H101.5 M97.2 764.38 H101.5 M92 768.55 H101.5 M97.2 772.72 H101.5 M97.2 776.88 H101.5 M97.2 781.05 H101.5 M97.2 785.22 H101.5 M92 789.38 H101.5 M97.2 793.55 H101.5 M97.2 797.72 H101.5 M97.2 801.89 H101.5 M97.2 806.05 H101.5" stroke="#1a5e8e" stroke-width="1" fill="none"/>
<path d="M101.6 130 V808" stroke="#1a5e8e" stroke-width="1.1"/>
<clipPath id="rl"><rect x="82" y="131.5" width="19" height="676.5"/></clipPath>
<g clip-path="url(#rl)" font-size="9" font-weight="bold" fill="#21679a"><text transform="translate(91.2 121.8) rotate(-90)" text-anchor="middle" textLength="20.4" lengthAdjust="spacingAndGlyphs">93.97</text><text transform="translate(91.2 163.4) rotate(-90)" text-anchor="middle" textLength="25.0" lengthAdjust="spacingAndGlyphs">102.52</text><text transform="translate(91.2 205.1) rotate(-90)" text-anchor="middle" textLength="25.0" lengthAdjust="spacingAndGlyphs">111.06</text><text transform="translate(91.2 246.8) rotate(-90)" text-anchor="middle" textLength="25.0" lengthAdjust="spacingAndGlyphs">119.60</text><text transform="translate(91.2 288.4) rotate(-90)" text-anchor="middle" textLength="25.0" lengthAdjust="spacingAndGlyphs">128.14</text><text transform="translate(91.2 330.1) rotate(-90)" text-anchor="middle" textLength="25.0" lengthAdjust="spacingAndGlyphs">136.69</text><text transform="translate(91.2 371.8) rotate(-90)" text-anchor="middle" textLength="25.0" lengthAdjust="spacingAndGlyphs">145.23</text><text transform="translate(91.2 413.5) rotate(-90)" text-anchor="middle" textLength="25.0" lengthAdjust="spacingAndGlyphs">153.77</text><text transform="translate(91.2 455.1) rotate(-90)" text-anchor="middle" textLength="25.0" lengthAdjust="spacingAndGlyphs">162.32</text><text transform="translate(91.2 496.8) rotate(-90)" text-anchor="middle" textLength="25.0" lengthAdjust="spacingAndGlyphs">170.86</text><text transform="translate(91.2 538.5) rotate(-90)" text-anchor="middle" textLength="25.0" lengthAdjust="spacingAndGlyphs">179.40</text><text transform="translate(91.2 580.1) rotate(-90)" text-anchor="middle" textLength="25.0" lengthAdjust="spacingAndGlyphs">187.95</text><text transform="translate(91.2 621.8) rotate(-90)" text-anchor="middle" textLength="25.0" lengthAdjust="spacingAndGlyphs">196.49</text><text transform="translate(91.2 663.5) rotate(-90)" text-anchor="middle" textLength="25.0" lengthAdjust="spacingAndGlyphs">205.03</text><text transform="translate(91.2 705.1) rotate(-90)" text-anchor="middle" textLength="25.0" lengthAdjust="spacingAndGlyphs">213.57</text><text transform="translate(91.2 746.8) rotate(-90)" text-anchor="middle" textLength="25.0" lengthAdjust="spacingAndGlyphs">222.12</text><text transform="translate(91.2 788.5) rotate(-90)" text-anchor="middle" textLength="25.0" lengthAdjust="spacingAndGlyphs">230.66</text><text transform="translate(91.2 830.2) rotate(-90)" text-anchor="middle" textLength="25.0" lengthAdjust="spacingAndGlyphs">239.20</text></g>
<path d="M84 342.7 H101.5" stroke="#111" stroke-width="1.3"/>
<g fill="none" stroke="#0b80cc" stroke-width="2.6" stroke-linejoin="round"><rect x="1424.6" y="46.2" width="17.4" height="13.4" rx="1.2"/><path d="M1427.2 56.2 L1431.2 52.8 L1434 55.4 L1439.6 49.6" stroke-width="1.9"/></g><circle cx="1428.6" cy="49.9" r="1.1" fill="#0b80cc"/>
<rect x="1417" y="65" width="33" height="2.5" fill="#0b80cc"/>
<g fill="none" stroke="#9a9a9a" stroke-width="2.4" stroke-linejoin="round"><path d="M1516.2 49.4 Q1516.2 48.2 1517.4 48.2 H1520.6 L1521.8 45.2 H1529.8 L1531 48.2 H1534.2 Q1535.4 48.2 1535.4 49.4 V59.8 Q1535.4 61 1534.2 61 H1517.4 Q1516.2 61 1516.2 59.8 Z"/><circle cx="1525.8" cy="54.2" r="2.1" stroke-width="1.7"/></g>
<rect x="1372.5" y="83.5" width="82" height="21" rx="4" fill="#fff" stroke="#555" stroke-width="1"/>
<text x="1376" y="99.4" font-size="12.5" fill="#111" font-weight="bold" text-anchor="start"  textLength="10" lengthAdjust="spacingAndGlyphs">1.</text>
<text x="1386.5" y="99.4" font-size="12.3" fill="#111" font-weight="bold" text-anchor="start" textLength="49" lengthAdjust="spacingAndGlyphs">基础图案</text>
<path d="M1442.5 93 H1449.5 L1446.0 96.8 Z" fill="#111"/>
<rect x="1460.5" y="83.5" width="92" height="21" rx="4" fill="#fff" stroke="#555" stroke-width="1"/>
<text x="1464.3" y="99.4" font-size="12.5" fill="#111" font-weight="bold" text-anchor="start"  textLength="10" lengthAdjust="spacingAndGlyphs">1.</text>
<text x="1474.9" y="99.4" font-size="12.3" fill="#111" font-weight="bold" text-anchor="start" textLength="49" lengthAdjust="spacingAndGlyphs">基本图形</text>
<path d="M1540.5 93 H1547.5 L1544.0 96.8 Z" fill="#111"/>
<circle cx="1573.4" cy="94" r="4.9" fill="none" stroke="#9a9a9a" stroke-width="2.2"/><path d="M1577 97.8 L1580.6 101" stroke="#9a9a9a" stroke-width="2.4" stroke-linecap="round"/>
<clipPath id="sc"><rect x="1370" y="110" width="230" height="326"/></clipPath>
<g clip-path="url(#sc)" fill="none" stroke="#555" stroke-width="1.2"><text x="1407.4" y="115.4" font-size="8.8" font-weight="bold" fill="#111" stroke="none" text-anchor="middle">菱形</text><text x="1477.5" y="115.4" font-size="8.8" font-weight="bold" fill="#111" stroke="none" text-anchor="middle">彩虹形</text><text x="1547.6" y="115.4" font-size="8.8" font-weight="bold" fill="#111" stroke="none" text-anchor="middle">正八角形</text><polygon points="1407.4,122.8 1431.0,136.4 1431.0,163.8 1407.4,177.4 1383.8,163.8 1383.8,136.4"/><polygon points="1477.5,122.8 1491.2,126.5 1501.1,136.4 1504.8,150.1 1501.1,163.8 1491.2,173.7 1477.5,177.4 1463.8,173.7 1453.9,163.8 1450.2,150.1 1453.9,136.4 1463.8,126.5"/><polygon points="1547.5,125.6 1575.0,145.1 1564.5,176.8 1530.5,176.8 1520.0,145.1"/><text x="1407.5" y="193.6" font-size="8.8" font-weight="bold" fill="#111" stroke="none" text-anchor="middle">正六角形</text><text x="1477.6" y="193.6" font-size="8.8" font-weight="bold" fill="#111" stroke="none" text-anchor="middle">正十二角形</text><text x="1547.6" y="193.6" font-size="8.8" font-weight="bold" fill="#111" stroke="none" text-anchor="middle">正五角形</text><polygon points="1407.4,205.4 1434.8,252.4 1380,252.4"/><rect x="1450.2" y="201.7" width="54.6" height="54.4" rx="10.5"/><path d="M1547.5 201.8 L1558.1 212.6 H1552.9 V239.6 H1563.6 V234.6 L1574.8 245 L1563.6 255.6 V250.6 H1531.4 V255.6 L1520.2 245 L1531.4 234.6 V239.6 H1542.1 V212.6 H1536.9 Z"/><text x="1407.5" y="272" font-size="8.8" font-weight="bold" fill="#111" stroke="none" text-anchor="middle">正三角形</text><text x="1477.7" y="272" font-size="8.8" font-weight="bold" fill="#111" stroke="none" text-anchor="middle">圆角矩形</text><text x="1547.6" y="272" font-size="8.8" font-weight="bold" fill="#111" stroke="none" text-anchor="middle">三叉箭头</text><polygon points="1393.9,280.2 1421.2,280.2 1434.6,334.2 1380.2,334.2"/><path d="M1493.8 280.2 L1504.6 291.4 H1499.4 V334.2 H1450.2 V323.2 H1488.4 V291.4 H1483 Z"/><path d="M1547.5 280.2 C1549.5 298 1574.8 306 1574.8 320.5 C1574.8 329.5 1562 334.4 1547.5 334.4 C1533 334.4 1520.2 329.5 1520.2 320.5 C1520.2 306 1545.5 298 1547.5 280.2 Z"/><text x="1407.4" y="350.4" font-size="8.8" font-weight="bold" fill="#111" stroke="none" text-anchor="middle">梯形</text><text x="1477.5" y="350.4" font-size="8.8" font-weight="bold" fill="#111" stroke="none" text-anchor="middle">转弯箭头</text><text x="1547.4" y="350.4" font-size="8.8" font-weight="bold" fill="#111" stroke="none" text-anchor="middle">水滴</text><path d="M1393.9 358.2 H1421 Q1421 371.8 1434.6 371.8 V399 Q1421 399 1421 412.6 H1393.9 Q1393.9 399 1380.2 399 V371.8 Q1393.9 371.8 1393.9 358.2 Z"/><text x="1400" y="428.4" font-size="9" font-weight="bold" fill="#111" stroke="none">X</text><text x="1406.4" y="428.5" font-size="8.8" font-weight="bold" fill="#111" stroke="none">形</text></g>
<rect x="1588.5" y="286" width="3.5" height="147.5" fill="#dcdcdc"/>
<path d="M1376 487.8 V458.5 Q1376 454.5 1380 454.5 H1590.2 Q1594.2 454.5 1594.2 458.5 V487.8 Z" fill="#0080c8"/>
<rect x="1376" y="487.8" width="218.2" height="32.8" fill="#ececec"/>
<text x="1379.3" y="476.9" font-size="12.1" font-weight="bold" fill="#fff" text-anchor="start" textLength="48.6" lengthAdjust="spacingAndGlyphs">加工工艺</text>
<text x="1464" y="476.9" font-size="12.1" font-weight="bold" fill="#fff" text-anchor="middle" textLength="24" lengthAdjust="spacingAndGlyphs">速度</text>
<text x="1521.4" y="476.9" font-size="12.1" font-weight="bold" fill="#fff" text-anchor="middle" textLength="23.8" lengthAdjust="spacingAndGlyphs">功率</text>
<text x="1570.2" y="476.9" font-size="12.1" font-weight="bold" fill="#fff" text-anchor="middle" textLength="23.2" lengthAdjust="spacingAndGlyphs">输出</text>
<rect x="1378.3" y="497" width="15" height="14.8" fill="#000"/>
<rect x="1378.3" y="530.4" width="15" height="15" fill="#e2443f"/>
<text x="1398.8" y="510.3" font-size="11.8" font-weight="bold" fill="#111" text-anchor="start" textLength="23.6" lengthAdjust="spacingAndGlyphs">切割</text>
<text x="1398.8" y="543.5" font-size="11.8" font-weight="bold" fill="#111" text-anchor="start" textLength="23.8" lengthAdjust="spacingAndGlyphs">描线</text>
<text x="1464" y="509.7" font-size="12.2" fill="#777" font-weight="bold" text-anchor="middle"  textLength="26.2" lengthAdjust="spacingAndGlyphs">40.0</text>
<text x="1521.5" y="509.7" font-size="12.2" fill="#777" font-weight="bold" text-anchor="middle"  textLength="26" lengthAdjust="spacingAndGlyphs">99.0</text>
<text x="1464" y="543" font-size="12.2" fill="#000" font-weight="bold" text-anchor="middle"  textLength="33.2" lengthAdjust="spacingAndGlyphs">100.0</text>
<text x="1521.7" y="543" font-size="12.2" fill="#000" font-weight="bold" text-anchor="middle"  textLength="25.6" lengthAdjust="spacingAndGlyphs">15.0</text>
<g fill="none" stroke="#111" stroke-width="1.3"><path d="M1561.0 504.4 C1563.5 501.0 1566.4 498.4 1570.0 498.4 C1573.6 498.4 1576.5 501.0 1579.0 504.4 C1576.5 507.8 1573.6 510.4 1570.0 510.4 C1566.4 510.4 1563.5 507.8 1561.0 504.4 Z"/><circle cx="1570.0" cy="504.4" r="4.5"/><circle cx="1570.0" cy="504.4" r="2.5"/></g>
<g fill="none" stroke="#111" stroke-width="1.3"><path d="M1561.0 537.8 C1563.5 534.4 1566.4 531.8 1570.0 531.8 C1573.6 531.8 1576.5 534.4 1579.0 537.8 C1576.5 541.2 1573.6 543.8 1570.0 543.8 C1566.4 543.8 1563.5 541.2 1561.0 537.8 Z"/><circle cx="1570.0" cy="537.8" r="4.5"/><circle cx="1570.0" cy="537.8" r="2.5"/></g>
<circle cx="1480" cy="759.4" r="51.4" fill="#fff" stroke="#0080c8" stroke-width="3.6"/><circle cx="1480" cy="759.4" r="46" fill="#0080c8"/>
<text x="1480" y="769" font-size="23" fill="#fff" text-anchor="middle" textLength="46" lengthAdjust="spacingAndGlyphs">开始</text>
<rect x="1376.3" y="824.8" width="216" height="25.2" fill="#d6d6d6"/><rect x="1378.3" y="827.2" width="157.5" height="20.4" fill="#fff"/>
<circle cx="1436.2" cy="837.4" r="5.9" fill="none" stroke="#f0842c" stroke-width="1.3"/><path d="M1433.6 834.8 L1438.8 840 M1438.8 834.8 L1433.6 840" stroke="#f0842c" stroke-width="1.3"/>
<text x="1448.4" y="841.8" font-size="12.1" fill="#f0842c" text-anchor="start" textLength="36.3" lengthAdjust="spacingAndGlyphs">未连接</text>
<text x="1552" y="842.5" font-size="12" font-weight="bold" fill="#111" text-anchor="start" textLength="24" lengthAdjust="spacingAndGlyphs">切换</text>
<defs><linearGradient id="cg" x1="0" y1="0" x2="0" y2="1"><stop offset="0" stop-color="#27b8ea"/><stop offset="0.5" stop-color="#b06fe6"/><stop offset="0.78" stop-color="#f2506a"/><stop offset="1" stop-color="#f8524f"/></linearGradient></defs>
<rect x="10.0" y="827.7" width="19.3" height="19.4" fill="#000"/>
<rect x="43.3" y="827.7" width="19.3" height="19.4" fill="#fe0000"/>
<rect x="76.6" y="827.7" width="19.3" height="19.4" fill="#ffa90e"/>
<rect x="109.8" y="827.7" width="19.3" height="19.4" fill="#4780f0"/>
<rect x="143.1" y="827.7" width="19.3" height="19.4" fill="url(#cg)"/>
<rect x="198.6" y="830.2" width="16.2" height="13" fill="none" stroke="#0b80cc" stroke-width="2.4"/>
<path d="M196.8 831.7 V828.3 H200.2 M213.2 828.3 H216.6 V831.7 M196.8 842.0 V845.4 H200.2 M213.2 845.4 H216.6 V842.0" fill="none" stroke="#0b80cc" stroke-width="1.3"/>
<path d="M240.2 832.2 V828.6 H243.8 M256.2 828.6 H259.8 V832.2 M240.2 841.8 V845.4 H243.8 M256.2 845.4 H259.8 V841.8" fill="none" stroke="#0b80cc" stroke-width="1.5"/>
<rect x="242.6" y="831.2" width="8" height="5.4" fill="#0b80cc"/><path d="M255 831.6 L258.2 838.6 H251.8 Z" fill="#0b80cc"/><ellipse cx="247.6" cy="841.2" rx="3.8" ry="2.2" fill="#0b80cc"/>
<g transform="translate(295.2 835.4) rotate(45)"><path d="M-8.4 8.6 V0 A8.4 8.4 0 0 1 8.4 0 V8.6 H2.9 V0 A2.9 2.9 0 0 0 -2.9 0 V8.6 Z" fill="#0b80cc"/></g>
<path d="M288.2 839.6 L285 843.4 H287.6 L286.2 847.3 L290.3 842.4 H287.8 L289.6 840.4 Z" fill="#0b80cc"/>
<rect x="323.6" y="823.8" width="27" height="26.8" rx="5.5" fill="#d3e1f3" stroke="#bcd2eb" stroke-width="1"/>
<rect x="328" y="828.1" width="17.4" height="17.5" rx="1.6" fill="#0b80cc"/>
<rect x="329.8" y="830.2" width="3" height="3" fill="#d6e4f5"/>
<rect x="335.0" y="830.2" width="3" height="3" fill="#d6e4f5"/>
<rect x="340.2" y="830.2" width="3" height="3" fill="#d6e4f5"/>
<rect x="329.8" y="835.3" width="3" height="3" fill="#d6e4f5"/>
<rect x="335.0" y="835.3" width="3" height="3" fill="#d6e4f5"/>
<rect x="340.2" y="835.3" width="3" height="3" fill="#d6e4f5"/>
<rect x="329.8" y="840.4" width="3" height="3" fill="#d6e4f5"/>
<rect x="335.0" y="840.4" width="3" height="3" fill="#d6e4f5"/>
<rect x="340.2" y="840.4" width="3" height="3" fill="#d6e4f5"/>
</svg>
</body></html>
